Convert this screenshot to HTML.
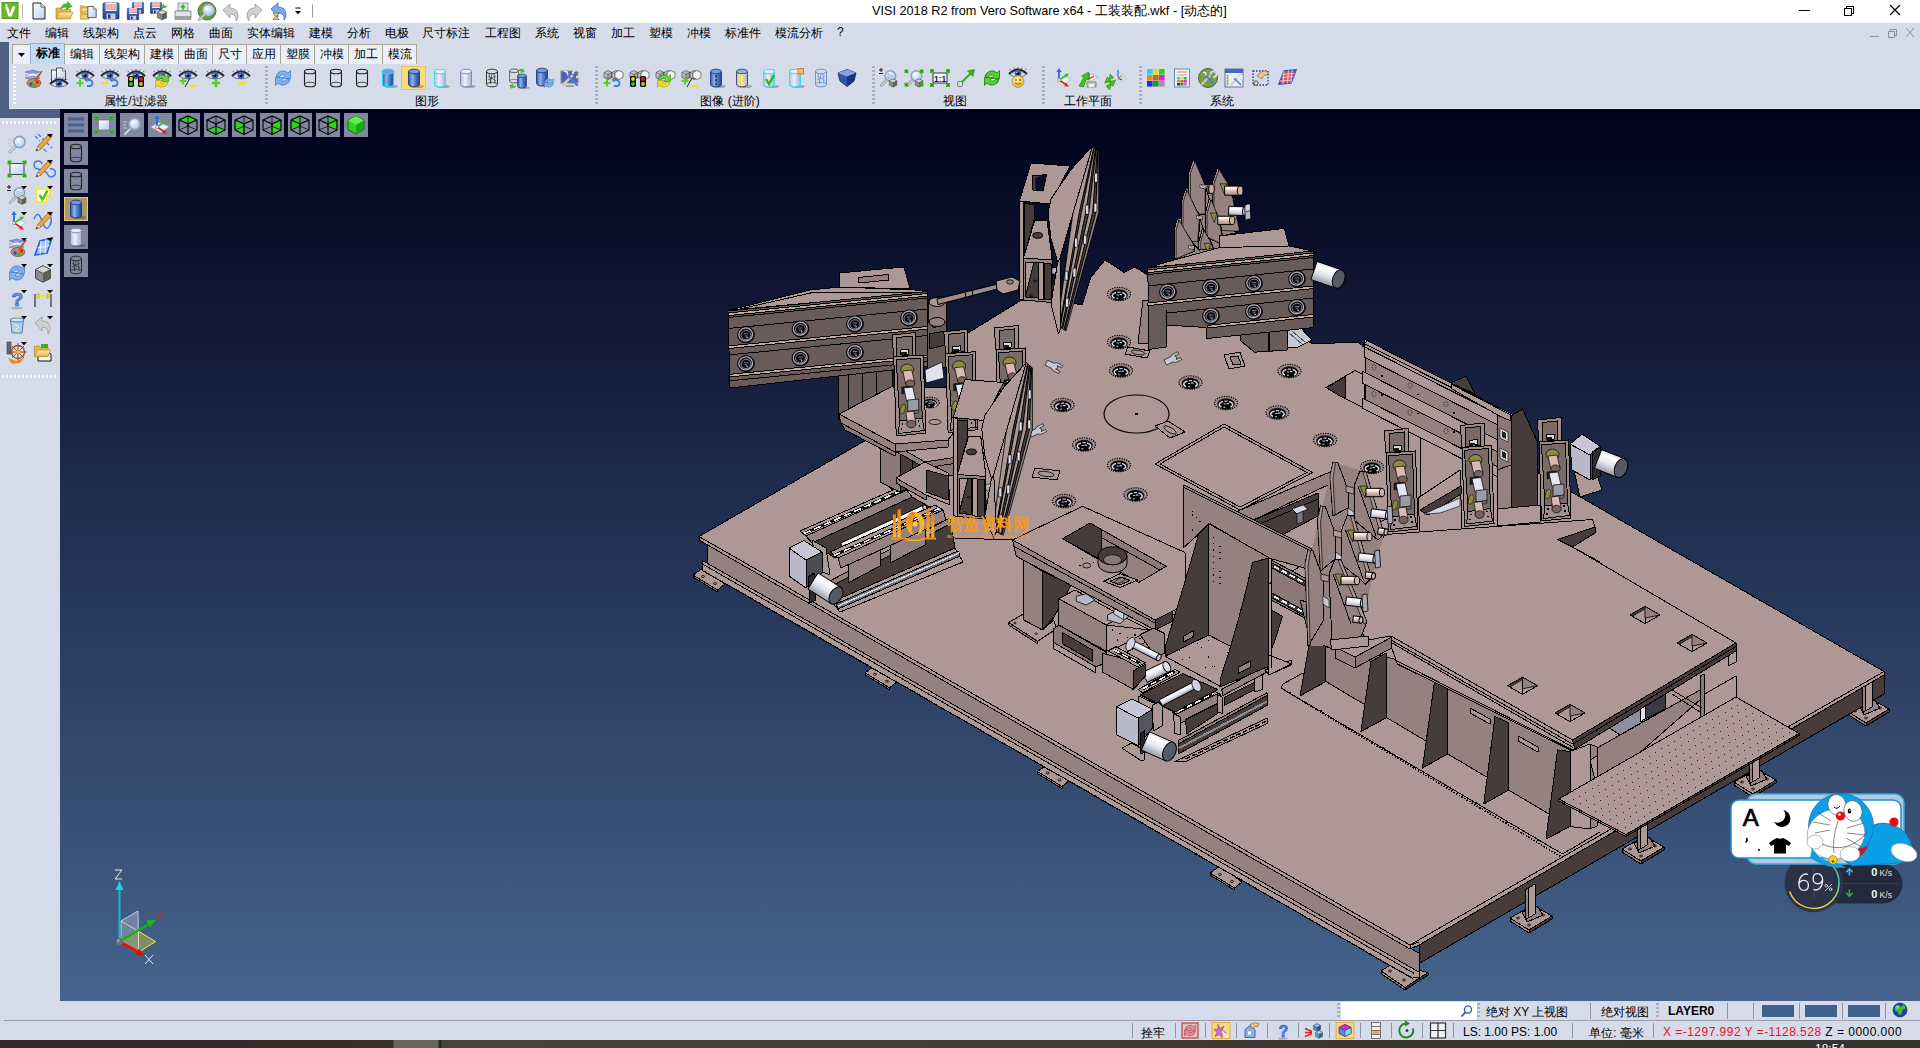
<!DOCTYPE html><html><head><meta charset="utf-8"><title>VISI</title><style>

*{box-sizing:border-box;margin:0;padding:0}
html,body{width:1920px;height:1048px;overflow:hidden;background:#d6dbe9;font-family:"Liberation Sans",sans-serif;font-size:12px;color:#000}
.abs{position:absolute}
#title{left:0;top:0;width:1920px;height:23px;background:#fff}
#ttext{left:872px;top:3px;font-size:12.7px;white-space:nowrap;color:#000}
#menu{left:0;top:23px;width:1920px;height:20px;background:#d6dbe9}
.mi{position:absolute;top:2px;font-size:12px;white-space:nowrap}
#lstrip{left:0;top:42px;width:9px;height:76px;background:#4d6082}
#lstrip2{left:0;top:109px;width:60px;height:9px;background:#4d6082}
.tab{position:absolute;top:44px;height:20px;background:#e9f0fb;border:1px solid #a9a58f;border-bottom:none;font-size:12px;text-align:center;line-height:18px;white-space:nowrap;overflow:hidden}
.tab.on{top:43px;height:21px;background:#c1dbf6;font-weight:bold;border-color:#9fb3cc}
#tbar{left:9px;top:64px;width:1911px;height:45px;background:#d6dbe9;border-bottom:1px solid #e3e9f8}
.glabel{position:absolute;top:93px;font-size:12px;white-space:nowrap;transform:translateX(-50%)}
.grip{position:absolute;width:3px;background-image:repeating-linear-gradient(to bottom,#f7f8fc 0 2px,transparent 2px 4px)}
.gripdk{position:absolute;width:3px;background-image:repeating-linear-gradient(to bottom,#a8aec2 0 2px,transparent 2px 4px)}
.hgrip{position:absolute;height:3px;background-image:repeating-linear-gradient(to right,#f7f8fc 0 2px,transparent 2px 4px)}
#side{left:0;top:118px;width:60px;height:902px;background:#d6dbe9}
#vp{left:60px;top:109px;width:1860px;height:892px;background:linear-gradient(to bottom,#01011b 0%,#46648d 100%);overflow:hidden}
.vb{position:absolute;width:24px;height:24px;background:#8287a0}
.vb.on{background:#a99a68;border:1px solid #e9c883}
#st1{left:0;top:1000px;width:1920px;height:21px;background:#d6dbe9}
#st2{left:0;top:1021px;width:1920px;height:19px;background:#d6dbe9}
#stline{left:4px;top:1020px;width:1916px;height:1px;background:#9a9ca6}
#bot{left:0;top:1040px;width:1920px;height:8px;background:linear-gradient(to right,#32272a 0,#3a2e2a 393px,#6b665d 394px,#6b665d 438px,#2a2a2a 439px,#2a2a2a 441px,#4a4436 442px,#463f33 900px,#3c3730 1300px,#37332e 1920px)}
.st{position:absolute;font-size:12px;white-space:nowrap}
.sep{position:absolute;width:1px;background:#8e93a3}
.ico{position:absolute;overflow:visible}

</style></head><body>
<div id="title" class="abs"></div>
<div id="ttext" class="abs">VISI 2018 R2 from Vero Software x64 - 工装装配.wkf - [动态的]</div>
<svg class="abs" style="left:1780px;top:0" width="140" height="23" viewBox="1780 0 140 23" shape-rendering="crispEdges"><path d="M1799 10.5h11" stroke="#000" fill="none"/><path d="M1844.5 8.5h7v7h-7zM1846.5 8.5v-2h7v7h-2" stroke="#000" fill="none"/><path d="M1890 5l10 10M1900 5l-10 10" stroke="#000" fill="none" stroke-width="1.2" shape-rendering="auto"/></svg>
<div id="menu" class="abs">
<span class="mi" style="left:7px">文件</span>
<span class="mi" style="left:45px">编辑</span>
<span class="mi" style="left:83px">线架构</span>
<span class="mi" style="left:133px">点云</span>
<span class="mi" style="left:171px">网格</span>
<span class="mi" style="left:209px">曲面</span>
<span class="mi" style="left:247px">实体编辑</span>
<span class="mi" style="left:309px">建模</span>
<span class="mi" style="left:347px">分析</span>
<span class="mi" style="left:385px">电极</span>
<span class="mi" style="left:422px">尺寸标注</span>
<span class="mi" style="left:485px">工程图</span>
<span class="mi" style="left:535px">系统</span>
<span class="mi" style="left:573px">视窗</span>
<span class="mi" style="left:611px">加工</span>
<span class="mi" style="left:649px">塑模</span>
<span class="mi" style="left:687px">冲模</span>
<span class="mi" style="left:725px">标准件</span>
<span class="mi" style="left:775px">模流分析</span>
<span class="mi" style="left:837px">?</span>
</div>
<svg class="abs" style="left:1860px;top:24px" width="60" height="18" viewBox="1860 24 60 18"><path d="M1870 36.5h9" stroke="#8c8f99" fill="none"/><path d="M1888.5 31.5h6v6h-6zM1890.5 31.5v-2h6v6h-2" stroke="#8c8f99" fill="none"/><path d="M1906 28l8 9M1914 28l-8 9" stroke="#8c8f99" fill="none"/></svg>
<div id="lstrip" class="abs"></div><div id="lstrip2" class="abs"></div>
<div class="tab" style="left:12px;width:19px"><svg width="17" height="18" viewBox="0 0 17 18"><path d="M5 8h7l-3.5 4z" fill="#000"/></svg></div>
<div class="tab on" style="left:30px;width:35px">标准</div>
<div class="tab" style="left:64px;width:36px">编辑</div>
<div class="tab" style="left:99px;width:46px">线架构</div>
<div class="tab" style="left:144px;width:35px">建模</div>
<div class="tab" style="left:178px;width:35px">曲面</div>
<div class="tab" style="left:212px;width:35px">尺寸</div>
<div class="tab" style="left:246px;width:35px">应用</div>
<div class="tab" style="left:280px;width:35px">塑膜</div>
<div class="tab" style="left:314px;width:35px">冲模</div>
<div class="tab" style="left:348px;width:35px">加工</div>
<div class="tab" style="left:382px;width:35px">模流</div>
<div id="tbar" class="abs"></div>
<div class="grip" style="left:13px;top:66px;height:40px"></div>
<div class="gripdk" style="left:265px;top:66px;height:40px"></div>
<div class="gripdk" style="left:595px;top:66px;height:40px"></div>
<div class="gripdk" style="left:872px;top:66px;height:40px"></div>
<div class="gripdk" style="left:1042px;top:66px;height:40px"></div>
<div class="gripdk" style="left:1139px;top:66px;height:40px"></div>
<div class="glabel" style="left:136px">属性/过滤器</div>
<div class="glabel" style="left:427px">图形</div>
<div class="glabel" style="left:730px">图像 (进阶)</div>
<div class="glabel" style="left:955px">视图</div>
<div class="glabel" style="left:1088px">工作平面</div>
<div class="glabel" style="left:1222px">系统</div>
<div id="side" class="abs"></div>
<div class="hgrip" style="left:2px;top:121px;width:56px"></div>
<div class="hgrip" style="left:2px;top:375px;width:56px"></div>
<div id="st1" class="abs"></div><div id="st2" class="abs"></div><div id="stline" class="abs"></div>
<div class="gripdk" style="left:1337px;top:1003px;height:16px"></div>
<div class="abs" style="left:1341px;top:1002px;width:136px;height:18px;background:#fff"></div>
<svg class="abs" style="left:1460px;top:1004px" width="14" height="14" viewBox="0 0 14 14"><circle cx="8" cy="5.5" r="3.6" fill="#eef3fb" stroke="#3c5a9a" stroke-width="1.3"/><path d="M5.5 8.2L1.5 12.5" stroke="#3c5a9a" stroke-width="1.8"/></svg>
<div class="gripdk" style="left:1477px;top:1003px;height:16px"></div>
<div class="st" style="left:1486px;top:1004px">绝对 XY 上视图</div>
<div class="sep" style="left:1590px;top:1003px;height:16px"></div>
<div class="st" style="left:1601px;top:1004px">绝对视图</div>
<div class="gripdk" style="left:1656px;top:1003px;height:16px"></div>
<div class="st" style="left:1668px;top:1004px;font-weight:bold">LAYER0</div>
<div class="sep" style="left:1727px;top:1003px;height:16px"></div>
<div class="sep" style="left:1753px;top:1003px;height:16px"></div>
<div class="abs" style="left:1762px;top:1005px;width:32px;height:12px;background:#41618d"></div>
<div class="abs" style="left:1805px;top:1005px;width:32px;height:12px;background:#41618d"></div>
<div class="abs" style="left:1848px;top:1005px;width:32px;height:12px;background:#41618d"></div>
<div class="sep" style="left:1799px;top:1003px;height:16px"></div><div class="sep" style="left:1842px;top:1003px;height:16px"></div><div class="sep" style="left:1885px;top:1003px;height:16px"></div>
<div class="sep" style="left:1132px;top:1023px;height:15px"></div>
<div class="sep" style="left:1175px;top:1023px;height:15px"></div>
<div class="sep" style="left:1205px;top:1023px;height:15px"></div>
<div class="sep" style="left:1236px;top:1023px;height:15px"></div>
<div class="sep" style="left:1267px;top:1023px;height:15px"></div>
<div class="sep" style="left:1298px;top:1023px;height:15px"></div>
<div class="sep" style="left:1329px;top:1023px;height:15px"></div>
<div class="sep" style="left:1360px;top:1023px;height:15px"></div>
<div class="sep" style="left:1391px;top:1023px;height:15px"></div>
<div class="sep" style="left:1422px;top:1023px;height:15px"></div>
<div class="sep" style="left:1453px;top:1023px;height:15px"></div>
<div class="sep" style="left:1572px;top:1023px;height:15px"></div>
<div class="sep" style="left:1653px;top:1023px;height:15px"></div>
<div class="st" style="left:1141px;top:1025px">拴牢</div>
<div class="st" style="left:1463px;top:1025px">LS: 1.00 PS: 1.00</div>
<div class="st" style="left:1589px;top:1025px">单位: 毫米</div>
<div class="st" style="left:1663px;top:1025px;letter-spacing:.47px"><span style="color:#e8141c">X =-1297.992 Y =-1128.528</span> Z = 0000.000</div>
<div id="bot" class="abs"></div>
<div class="abs" style="left:1815px;top:1043px;width:40px;height:5px;overflow:hidden;color:#fff;font-size:12px;line-height:12px">18:54</div>

<div id="vp" class="abs">
<svg class="abs" style="left:0;top:0" width="1860" height="891" viewBox="60 109 1860 891" shape-rendering="crispEdges" stroke-linejoin="round">
<polygon points="703,568 725,584 717.5,590 693,575" fill="#ad9895" stroke="#000" stroke-width="1" />
<polygon points="693,575 717.5,590 717.5,592 693,577" fill="#958180" stroke="#000" stroke-width="1" />
<ellipse cx="703" cy="576.5" rx="1.5" ry="1" fill="none" stroke="#000" stroke-width="0.8" />
<ellipse cx="715" cy="583.5" rx="1.5" ry="1" fill="none" stroke="#000" stroke-width="0.8" />
<polygon points="875,665.75 897,681.75 889.5,687.75 865,672.75" fill="#ad9895" stroke="#000" stroke-width="1" />
<polygon points="865,672.75 889.5,687.75 889.5,689.75 865,674.75" fill="#958180" stroke="#000" stroke-width="1" />
<ellipse cx="875" cy="674.25" rx="1.5" ry="1" fill="none" stroke="#000" stroke-width="0.8" />
<ellipse cx="887" cy="681.25" rx="1.5" ry="1" fill="none" stroke="#000" stroke-width="0.8" />
<polygon points="1047.5,764.5 1069.5,780.5 1062,786.5 1037.5,771.5" fill="#ad9895" stroke="#000" stroke-width="1" />
<polygon points="1037.5,771.5 1062,786.5 1062,788.5 1037.5,773.5" fill="#958180" stroke="#000" stroke-width="1" />
<ellipse cx="1047.5" cy="773" rx="1.5" ry="1" fill="none" stroke="#000" stroke-width="0.8" />
<ellipse cx="1059.5" cy="780" rx="1.5" ry="1" fill="none" stroke="#000" stroke-width="0.8" />
<polygon points="1220,866 1242,882 1234.5,888 1210,873" fill="#ad9895" stroke="#000" stroke-width="1" />
<polygon points="1210,873 1234.5,888 1234.5,890 1210,875" fill="#958180" stroke="#000" stroke-width="1" />
<ellipse cx="1220" cy="874.5" rx="1.5" ry="1" fill="none" stroke="#000" stroke-width="0.8" />
<ellipse cx="1232" cy="881.5" rx="1.5" ry="1" fill="none" stroke="#000" stroke-width="0.8" />
<polygon points="1381,971 1392,964 1428,972.5 1405,987.5" fill="#ad9895" stroke="#000" stroke-width="1" />
<polygon points="1381,971 1405,987.5 1405,990 1381,973.5" fill="#958180" stroke="#000" stroke-width="1" />
<polygon points="1405,987.5 1428,972.5 1428,975 1405,990" fill="#473b3b" stroke="#000" stroke-width="1" />
<ellipse cx="1390" cy="971" rx="1.5" ry="1" fill="none" stroke="#000" stroke-width="0.8" />
<ellipse cx="1404" cy="980" rx="1.5" ry="1" fill="none" stroke="#000" stroke-width="0.8" />
<ellipse cx="1418" cy="973" rx="1.5" ry="1" fill="none" stroke="#000" stroke-width="0.8" />
<polygon points="1510,918 1533,905 1552,916 1529,930" fill="#ad9895" stroke="#000" stroke-width="1" />
<polygon points="1510,918 1529,930 1529,933 1510,921" fill="#958180" stroke="#000" stroke-width="1" />
<polygon points="1529,930 1552,916 1552,919 1529,933" fill="#473b3b" stroke="#000" stroke-width="1" />
<polygon points="1522,912 1537,906 1543,915 1527,922" fill="#958180" stroke="#000" stroke-width="1" />
<ellipse cx="1518" cy="918" rx="1.5" ry="1" fill="none" stroke="#000" stroke-width="0.8" />
<ellipse cx="1543" cy="915" rx="1.5" ry="1" fill="none" stroke="#000" stroke-width="0.8" />
<ellipse cx="1529" cy="925" rx="1.5" ry="1" fill="none" stroke="#000" stroke-width="0.8" />
<polygon points="1622,849 1645,836 1664,847 1641,861" fill="#ad9895" stroke="#000" stroke-width="1" />
<polygon points="1622,849 1641,861 1641,864 1622,852" fill="#958180" stroke="#000" stroke-width="1" />
<polygon points="1641,861 1664,847 1664,850 1641,864" fill="#473b3b" stroke="#000" stroke-width="1" />
<polygon points="1634,843 1649,837 1655,846 1639,853" fill="#958180" stroke="#000" stroke-width="1" />
<ellipse cx="1630" cy="849" rx="1.5" ry="1" fill="none" stroke="#000" stroke-width="0.8" />
<ellipse cx="1655" cy="846" rx="1.5" ry="1" fill="none" stroke="#000" stroke-width="0.8" />
<ellipse cx="1641" cy="856" rx="1.5" ry="1" fill="none" stroke="#000" stroke-width="0.8" />
<polygon points="1734,782 1757,769 1776,780 1753,794" fill="#ad9895" stroke="#000" stroke-width="1" />
<polygon points="1734,782 1753,794 1753,797 1734,785" fill="#958180" stroke="#000" stroke-width="1" />
<polygon points="1753,794 1776,780 1776,783 1753,797" fill="#473b3b" stroke="#000" stroke-width="1" />
<polygon points="1746,776 1761,770 1767,779 1751,786" fill="#958180" stroke="#000" stroke-width="1" />
<ellipse cx="1742" cy="782" rx="1.5" ry="1" fill="none" stroke="#000" stroke-width="0.8" />
<ellipse cx="1767" cy="779" rx="1.5" ry="1" fill="none" stroke="#000" stroke-width="0.8" />
<ellipse cx="1753" cy="789" rx="1.5" ry="1" fill="none" stroke="#000" stroke-width="0.8" />
<polygon points="1847,711 1870,698 1889,709 1866,723" fill="#ad9895" stroke="#000" stroke-width="1" />
<polygon points="1847,711 1866,723 1866,726 1847,714" fill="#958180" stroke="#000" stroke-width="1" />
<polygon points="1866,723 1889,709 1889,712 1866,726" fill="#473b3b" stroke="#000" stroke-width="1" />
<polygon points="1859,705 1874,699 1880,708 1864,715" fill="#958180" stroke="#000" stroke-width="1" />
<ellipse cx="1855" cy="711" rx="1.5" ry="1" fill="none" stroke="#000" stroke-width="0.8" />
<ellipse cx="1880" cy="708" rx="1.5" ry="1" fill="none" stroke="#000" stroke-width="0.8" />
<ellipse cx="1866" cy="718" rx="1.5" ry="1" fill="none" stroke="#000" stroke-width="0.8" />
<polygon points="1419,944 1884,675 1884,694 1419,963.5" fill="#473b3b" stroke="#000" stroke-width="1" />
<polygon points="1525,890 1535,884 1535,914 1525,920" fill="#ad9895" stroke="#000" stroke-width="1" />
<polygon points="1525,890 1528,888 1528,918 1525,920" fill="#958180" stroke="#000" stroke-width="1" />
<polygon points="1637,821 1647,815 1647,845 1637,851" fill="#ad9895" stroke="#000" stroke-width="1" />
<polygon points="1637,821 1640,819 1640,849 1637,851" fill="#958180" stroke="#000" stroke-width="1" />
<polygon points="1749,754 1759,748 1759,778 1749,784" fill="#ad9895" stroke="#000" stroke-width="1" />
<polygon points="1749,754 1752,752 1752,782 1749,784" fill="#958180" stroke="#000" stroke-width="1" />
<polygon points="1862,683 1872,677 1872,707 1862,713" fill="#ad9895" stroke="#000" stroke-width="1" />
<polygon points="1862,683 1865,681 1865,711 1862,713" fill="#958180" stroke="#000" stroke-width="1" />
<polygon points="702,560.223 1419,972.14 1419,977.14 1412,978.119 702,570.223" fill="#ad9895" stroke="#000" stroke-width="1" />
<polyline points="702,563.723 1414,973.267" fill="none" stroke="#000" stroke-width="1" />
<polyline points="702,570.223 1412,978.119" fill="none" stroke="#000" stroke-width="1.4" stroke-dasharray="1.2 1.4"/>
<polygon points="707,544.096 1419,953.14 1419,972.14 707,563.096" fill="#958180" stroke="#000" stroke-width="1" />
<polyline points="1419,942.5 1419,971" fill="none" stroke="#000" stroke-width="1" />
<polygon points="699,536.5 1410,945 1884,671.5 1173,263" fill="#ad9895" stroke="#000" stroke-width="1" />
<polygon points="699,536.5 1410,945 1419,942 1419,945 1410,949 699,540" fill="#ad9895" stroke="#000" stroke-width="1" />
<polygon points="1410,945 1884,671.5 1884,675 1419,945 1410,949" fill="#ad9895" stroke="#000" stroke-width="1" />
<polyline points="1410,945.5 1419,942" fill="none" stroke="#000" stroke-width="1" />
<polygon points="968,333 1020,301 1046,298 1082,305 1091,277 1105,260 1119,269 1124,272.5 1135,267 1147.5,275 1160,283 1314,344 1357,342 1420,380 1420,500 1312,560 1240,600 1150,620 1012,540 955,538 880,480 905,440 940,400" fill="#ad9895" stroke="#000" stroke-width="1" />
<ellipse cx="1136.5" cy="414" rx="32.5" ry="19" fill="none" stroke="#000" stroke-width="1.2" shape-rendering="auto"/>
<polygon points="1155,426 1168,421 1185,432 1170,438" fill="#ad9895" stroke="#000" stroke-width="1" />
<ellipse cx="1170" cy="430" rx="7" ry="2.5" fill="none" stroke="#000" stroke-width="0.8" transform="rotate(30 1170 430)" shape-rendering="auto"/>
<ellipse cx="1136.5" cy="414" rx="1" ry="1" fill="#000" stroke="#000" stroke-width="1" />
<polygon points="1224,424 1312.5,472.5 1240,510 1155,464" fill="#ad9895" stroke="#000" stroke-width="1" />
<polyline points="1224,427 1307,472.5 1240,507 1160,464 1224,427" fill="none" stroke="#000" stroke-width="1" />
<polygon points="1326,387.5 1355,370.5 1364,375 1364,408 1340,396" fill="#ad9895" stroke="#000" stroke-width="1" />
<polygon points="1326,387.5 1345.6,376.8 1345.6,398.5 1340,396" fill="#473b3b" stroke="#000" stroke-width="1" />
<polygon points="1224,355 1240,352 1245,366 1229,369" fill="#ad9895" stroke="#000" stroke-width="1" />
<polygon points="1230,357 1238,356 1241,364 1233,365" fill="#958180" stroke="#000" stroke-width="1" />
<polygon points="1035,468 1060,471 1057,480 1032,477" fill="#ad9895" stroke="#000" stroke-width="1" />
<ellipse cx="1046" cy="474" rx="8" ry="2.5" fill="none" stroke="#000" stroke-width="0.8" transform="rotate(8 1046 474)" shape-rendering="auto"/>
<polygon points="1277,298 1296,304 1293,311 1274,305" fill="#ad9895" stroke="#000" stroke-width="1" />
<polygon points="1128,347 1150,351 1147,358 1125,354" fill="#ad9895" stroke="#000" stroke-width="1" />
<ellipse cx="1138" cy="352.5" rx="7" ry="2" fill="none" stroke="#000" stroke-width="0.8" transform="rotate(10 1138 352.5)" />
<g transform="translate(1054 365) rotate(25) scale(.8)" shape-rendering="auto"><path d="M-10 -2h9l3-2h8v3h-6l2 2.5l-2 2.5h6v3h-8l-3-2h-9z" fill="#c8c8d6" stroke="#000" stroke-width=".7"/></g>
<g transform="translate(1172 358) rotate(-25) scale(.8)" shape-rendering="auto"><path d="M-10 -2h9l3-2h8v3h-6l2 2.5l-2 2.5h6v3h-8l-3-2h-9z" fill="#c8c8d6" stroke="#000" stroke-width=".7"/></g>
<g transform="translate(1037 430) rotate(-25) scale(.8)" shape-rendering="auto"><path d="M-10 -2h9l3-2h8v3h-6l2 2.5l-2 2.5h6v3h-8l-3-2h-9z" fill="#c8c8d6" stroke="#000" stroke-width=".7"/></g>
<g shape-rendering="auto">
<ellipse cx="1119" cy="294" rx="11.5" ry="6.6" fill="none" stroke="#000" stroke-width="1.3" stroke-dasharray="1.3 1.1"/>
<ellipse cx="1119" cy="293.7" rx="9.5" ry="5.6" fill="#8f7c7a" stroke="none" stroke-width="0" />
<ellipse cx="1119" cy="295" rx="8.4" ry="5.2" fill="#050505" stroke="#000" stroke-width="0.6" />
<path d="M1116 292.4a6 3.3 0 0 0 -1.5 5.6M1122 292.4a6 3.3 0 0 1 1.5 5.6" fill="none" stroke="#d4d4e6" stroke-width="1.5"/>
<path d="M1117.4 292.1h3.2M1116.6 295h2.2M1119.6 294.6h2.4M1116.4 298.2h2" stroke="#c9c9da" stroke-width="1.1"/>
</g>
<g shape-rendering="auto">
<ellipse cx="1119" cy="342" rx="11.5" ry="6.6" fill="none" stroke="#000" stroke-width="1.3" stroke-dasharray="1.3 1.1"/>
<ellipse cx="1119" cy="341.7" rx="9.5" ry="5.6" fill="#8f7c7a" stroke="none" stroke-width="0" />
<ellipse cx="1119" cy="343" rx="8.4" ry="5.2" fill="#050505" stroke="#000" stroke-width="0.6" />
<path d="M1116 340.4a6 3.3 0 0 0 -1.5 5.6M1122 340.4a6 3.3 0 0 1 1.5 5.6" fill="none" stroke="#d4d4e6" stroke-width="1.5"/>
<path d="M1117.4 340.1h3.2M1116.6 343h2.2M1119.6 342.6h2.4M1116.4 346.2h2" stroke="#c9c9da" stroke-width="1.1"/>
</g>
<g shape-rendering="auto">
<ellipse cx="1121" cy="370.5" rx="11.5" ry="6.6" fill="none" stroke="#000" stroke-width="1.3" stroke-dasharray="1.3 1.1"/>
<ellipse cx="1121" cy="370.2" rx="9.5" ry="5.6" fill="#8f7c7a" stroke="none" stroke-width="0" />
<ellipse cx="1121" cy="371.5" rx="8.4" ry="5.2" fill="#050505" stroke="#000" stroke-width="0.6" />
<path d="M1118 368.9a6 3.3 0 0 0 -1.5 5.6M1124 368.9a6 3.3 0 0 1 1.5 5.6" fill="none" stroke="#d4d4e6" stroke-width="1.5"/>
<path d="M1119.4 368.6h3.2M1118.6 371.5h2.2M1121.6 371.1h2.4M1118.4 374.7h2" stroke="#c9c9da" stroke-width="1.1"/>
</g>
<g shape-rendering="auto">
<ellipse cx="1190.5" cy="382.5" rx="11.5" ry="6.6" fill="none" stroke="#000" stroke-width="1.3" stroke-dasharray="1.3 1.1"/>
<ellipse cx="1190.5" cy="382.2" rx="9.5" ry="5.6" fill="#8f7c7a" stroke="none" stroke-width="0" />
<ellipse cx="1190.5" cy="383.5" rx="8.4" ry="5.2" fill="#050505" stroke="#000" stroke-width="0.6" />
<path d="M1187.5 380.9a6 3.3 0 0 0 -1.5 5.6M1193.5 380.9a6 3.3 0 0 1 1.5 5.6" fill="none" stroke="#d4d4e6" stroke-width="1.5"/>
<path d="M1188.9 380.6h3.2M1188.1 383.5h2.2M1191.1 383.1h2.4M1187.9 386.7h2" stroke="#c9c9da" stroke-width="1.1"/>
</g>
<g shape-rendering="auto">
<ellipse cx="1226" cy="403" rx="11.5" ry="6.6" fill="none" stroke="#000" stroke-width="1.3" stroke-dasharray="1.3 1.1"/>
<ellipse cx="1226" cy="402.7" rx="9.5" ry="5.6" fill="#8f7c7a" stroke="none" stroke-width="0" />
<ellipse cx="1226" cy="404" rx="8.4" ry="5.2" fill="#050505" stroke="#000" stroke-width="0.6" />
<path d="M1223 401.4a6 3.3 0 0 0 -1.5 5.6M1229 401.4a6 3.3 0 0 1 1.5 5.6" fill="none" stroke="#d4d4e6" stroke-width="1.5"/>
<path d="M1224.4 401.1h3.2M1223.6 404h2.2M1226.6 403.6h2.4M1223.4 407.2h2" stroke="#c9c9da" stroke-width="1.1"/>
</g>
<g shape-rendering="auto">
<ellipse cx="1277.5" cy="412.5" rx="11.5" ry="6.6" fill="none" stroke="#000" stroke-width="1.3" stroke-dasharray="1.3 1.1"/>
<ellipse cx="1277.5" cy="412.2" rx="9.5" ry="5.6" fill="#8f7c7a" stroke="none" stroke-width="0" />
<ellipse cx="1277.5" cy="413.5" rx="8.4" ry="5.2" fill="#050505" stroke="#000" stroke-width="0.6" />
<path d="M1274.5 410.9a6 3.3 0 0 0 -1.5 5.6M1280.5 410.9a6 3.3 0 0 1 1.5 5.6" fill="none" stroke="#d4d4e6" stroke-width="1.5"/>
<path d="M1275.9 410.6h3.2M1275.1 413.5h2.2M1278.1 413.1h2.4M1274.9 416.7h2" stroke="#c9c9da" stroke-width="1.1"/>
</g>
<g shape-rendering="auto">
<ellipse cx="1289.5" cy="371" rx="11.5" ry="6.6" fill="none" stroke="#000" stroke-width="1.3" stroke-dasharray="1.3 1.1"/>
<ellipse cx="1289.5" cy="370.7" rx="9.5" ry="5.6" fill="#8f7c7a" stroke="none" stroke-width="0" />
<ellipse cx="1289.5" cy="372" rx="8.4" ry="5.2" fill="#050505" stroke="#000" stroke-width="0.6" />
<path d="M1286.5 369.4a6 3.3 0 0 0 -1.5 5.6M1292.5 369.4a6 3.3 0 0 1 1.5 5.6" fill="none" stroke="#d4d4e6" stroke-width="1.5"/>
<path d="M1287.9 369.1h3.2M1287.1 372h2.2M1290.1 371.6h2.4M1286.9 375.2h2" stroke="#c9c9da" stroke-width="1.1"/>
</g>
<g shape-rendering="auto">
<ellipse cx="1325" cy="440" rx="11.5" ry="6.6" fill="none" stroke="#000" stroke-width="1.3" stroke-dasharray="1.3 1.1"/>
<ellipse cx="1325" cy="439.7" rx="9.5" ry="5.6" fill="#8f7c7a" stroke="none" stroke-width="0" />
<ellipse cx="1325" cy="441" rx="8.4" ry="5.2" fill="#050505" stroke="#000" stroke-width="0.6" />
<path d="M1322 438.4a6 3.3 0 0 0 -1.5 5.6M1328 438.4a6 3.3 0 0 1 1.5 5.6" fill="none" stroke="#d4d4e6" stroke-width="1.5"/>
<path d="M1323.4 438.1h3.2M1322.6 441h2.2M1325.6 440.6h2.4M1322.4 444.2h2" stroke="#c9c9da" stroke-width="1.1"/>
</g>
<g shape-rendering="auto">
<ellipse cx="1372" cy="467" rx="11.5" ry="6.6" fill="none" stroke="#000" stroke-width="1.3" stroke-dasharray="1.3 1.1"/>
<ellipse cx="1372" cy="466.7" rx="9.5" ry="5.6" fill="#8f7c7a" stroke="none" stroke-width="0" />
<ellipse cx="1372" cy="468" rx="8.4" ry="5.2" fill="#050505" stroke="#000" stroke-width="0.6" />
<path d="M1369 465.4a6 3.3 0 0 0 -1.5 5.6M1375 465.4a6 3.3 0 0 1 1.5 5.6" fill="none" stroke="#d4d4e6" stroke-width="1.5"/>
<path d="M1370.4 465.1h3.2M1369.6 468h2.2M1372.6 467.6h2.4M1369.4 471.2h2" stroke="#c9c9da" stroke-width="1.1"/>
</g>
<g shape-rendering="auto">
<ellipse cx="1062.5" cy="405" rx="11.5" ry="6.6" fill="none" stroke="#000" stroke-width="1.3" stroke-dasharray="1.3 1.1"/>
<ellipse cx="1062.5" cy="404.7" rx="9.5" ry="5.6" fill="#8f7c7a" stroke="none" stroke-width="0" />
<ellipse cx="1062.5" cy="406" rx="8.4" ry="5.2" fill="#050505" stroke="#000" stroke-width="0.6" />
<path d="M1059.5 403.4a6 3.3 0 0 0 -1.5 5.6M1065.5 403.4a6 3.3 0 0 1 1.5 5.6" fill="none" stroke="#d4d4e6" stroke-width="1.5"/>
<path d="M1060.9 403.1h3.2M1060.1 406h2.2M1063.1 405.6h2.4M1059.9 409.2h2" stroke="#c9c9da" stroke-width="1.1"/>
</g>
<g shape-rendering="auto">
<ellipse cx="1084" cy="444.5" rx="11.5" ry="6.6" fill="none" stroke="#000" stroke-width="1.3" stroke-dasharray="1.3 1.1"/>
<ellipse cx="1084" cy="444.2" rx="9.5" ry="5.6" fill="#8f7c7a" stroke="none" stroke-width="0" />
<ellipse cx="1084" cy="445.5" rx="8.4" ry="5.2" fill="#050505" stroke="#000" stroke-width="0.6" />
<path d="M1081 442.9a6 3.3 0 0 0 -1.5 5.6M1087 442.9a6 3.3 0 0 1 1.5 5.6" fill="none" stroke="#d4d4e6" stroke-width="1.5"/>
<path d="M1082.4 442.6h3.2M1081.6 445.5h2.2M1084.6 445.1h2.4M1081.4 448.7h2" stroke="#c9c9da" stroke-width="1.1"/>
</g>
<g shape-rendering="auto">
<ellipse cx="1119" cy="465" rx="11.5" ry="6.6" fill="none" stroke="#000" stroke-width="1.3" stroke-dasharray="1.3 1.1"/>
<ellipse cx="1119" cy="464.7" rx="9.5" ry="5.6" fill="#8f7c7a" stroke="none" stroke-width="0" />
<ellipse cx="1119" cy="466" rx="8.4" ry="5.2" fill="#050505" stroke="#000" stroke-width="0.6" />
<path d="M1116 463.4a6 3.3 0 0 0 -1.5 5.6M1122 463.4a6 3.3 0 0 1 1.5 5.6" fill="none" stroke="#d4d4e6" stroke-width="1.5"/>
<path d="M1117.4 463.1h3.2M1116.6 466h2.2M1119.6 465.6h2.4M1116.4 469.2h2" stroke="#c9c9da" stroke-width="1.1"/>
</g>
<g shape-rendering="auto">
<ellipse cx="1135.5" cy="494.5" rx="11.5" ry="6.6" fill="none" stroke="#000" stroke-width="1.3" stroke-dasharray="1.3 1.1"/>
<ellipse cx="1135.5" cy="494.2" rx="9.5" ry="5.6" fill="#8f7c7a" stroke="none" stroke-width="0" />
<ellipse cx="1135.5" cy="495.5" rx="8.4" ry="5.2" fill="#050505" stroke="#000" stroke-width="0.6" />
<path d="M1132.5 492.9a6 3.3 0 0 0 -1.5 5.6M1138.5 492.9a6 3.3 0 0 1 1.5 5.6" fill="none" stroke="#d4d4e6" stroke-width="1.5"/>
<path d="M1133.9 492.6h3.2M1133.1 495.5h2.2M1136.1 495.1h2.4M1132.9 498.7h2" stroke="#c9c9da" stroke-width="1.1"/>
</g>
<g shape-rendering="auto">
<ellipse cx="1064" cy="501" rx="11.5" ry="6.6" fill="none" stroke="#000" stroke-width="1.3" stroke-dasharray="1.3 1.1"/>
<ellipse cx="1064" cy="500.7" rx="9.5" ry="5.6" fill="#8f7c7a" stroke="none" stroke-width="0" />
<ellipse cx="1064" cy="502" rx="8.4" ry="5.2" fill="#050505" stroke="#000" stroke-width="0.6" />
<path d="M1061 499.4a6 3.3 0 0 0 -1.5 5.6M1067 499.4a6 3.3 0 0 1 1.5 5.6" fill="none" stroke="#d4d4e6" stroke-width="1.5"/>
<path d="M1062.4 499.1h3.2M1061.6 502h2.2M1064.6 501.6h2.4M1061.4 505.2h2" stroke="#c9c9da" stroke-width="1.1"/>
</g>
<g shape-rendering="auto">
<ellipse cx="930" cy="402.5" rx="11.5" ry="6.6" fill="none" stroke="#000" stroke-width="1.3" stroke-dasharray="1.3 1.1"/>
<ellipse cx="930" cy="402.2" rx="9.5" ry="5.6" fill="#8f7c7a" stroke="none" stroke-width="0" />
<ellipse cx="930" cy="403.5" rx="8.4" ry="5.2" fill="#050505" stroke="#000" stroke-width="0.6" />
<path d="M927 400.9a6 3.3 0 0 0 -1.5 5.6M933 400.9a6 3.3 0 0 1 1.5 5.6" fill="none" stroke="#d4d4e6" stroke-width="1.5"/>
<path d="M928.4 400.6h3.2M927.6 403.5h2.2M930.6 403.1h2.4M927.4 406.7h2" stroke="#c9c9da" stroke-width="1.1"/>
</g>
<polygon points="1188.62,188.347 1205.79,185.485 1212.08,184.341 1233.26,198.077 1240.13,231.273 1219.52,235.852 1219.52,248.443 1174.31,258.745 1174.31,230.128 1177.17,218.681 1181.18,218.681 1181.18,202.656 1185.18,189.492" fill="#958180" stroke="none" stroke-width="0" />
<polyline points="1205.79,187.775 1213.8,214.103" fill="none" stroke="#000" stroke-width="1" />
<polyline points="1198.92,216.392 1208.08,241.575" fill="none" stroke="#000" stroke-width="1" />
<polyline points="1194.34,245.009 1200.06,250.733" fill="none" stroke="#000" stroke-width="1" />
<polyline points="1224.1,195.788 1233.26,230.128" fill="none" stroke="#000" stroke-width="1" />
<polyline points="1217.23,223.26 1224.1,245.009" fill="none" stroke="#000" stroke-width="1" />
<polygon points="1217.23,167.743 1212.08,184.341 1212.08,230.128 1240.13,231.273 1233.26,198.077 1227.54,182.051" fill="#ad9895" stroke="#000" stroke-width="1" />
<polygon points="1219.03,169.243 1213.88,184.341 1213.88,230.128 1239.53,231.273 1232.66,198.077 1226.94,182.051" fill="#958180" stroke="#000" stroke-width="0.7" />
<polygon points="1193.2,159.73 1188.62,172.894 1188.62,214.103 1205.79,214.103 1205.79,185.485" fill="#ad9895" stroke="#000" stroke-width="1" />
<polygon points="1195,161.23 1190.42,172.894 1190.42,214.103 1205.19,214.103 1205.19,185.485" fill="#958180" stroke="#000" stroke-width="0.7" />
<linearGradient id="g203" gradientUnits="userSpaceOnUse" x1="1208.08" y1="193.519" x2="1208.08" y2="184.319"><stop offset="0" stop-color="#a88"/><stop offset=".45" stop-color="#d8b8b0"/><stop offset=".8" stop-color="#fff"/><stop offset="1" stop-color="#d8b8b0"/></linearGradient>
<polygon points="1208.08,193.519 1211.51,193.519 1211.51,184.319 1208.08,184.319" fill="url(#g203)" stroke="#000" stroke-width="1" shape-rendering="auto"/>
<ellipse cx="1211.51" cy="188.919" rx="2.852" ry="4.6" fill="#c9a9a2" stroke="#000" stroke-width="1" shape-rendering="auto"/>
<polygon points="1209.22,198.077 1205.22,214.103 1205.22,236.996 1224.1,245.009 1219.52,218.681" fill="#ad9895" stroke="#000" stroke-width="1" />
<polygon points="1211.02,199.577 1207.02,214.103 1207.02,236.996 1223.5,245.009 1218.92,218.681" fill="#958180" stroke="#000" stroke-width="0.7" />
<polygon points="1185.18,188.919 1181.18,202.656 1181.18,241.575 1198.35,241.575 1200.06,216.392" fill="#ad9895" stroke="#000" stroke-width="1" />
<polygon points="1186.98,190.419 1182.98,202.656 1182.98,241.575 1197.75,241.575 1199.46,216.392" fill="#958180" stroke="#000" stroke-width="0.7" />
<polygon points="1202.35,228.984 1198.92,241.575 1198.92,249.588 1213.8,248.443 1210.37,240.43" fill="#ad9895" stroke="#000" stroke-width="1" />
<polygon points="1204.15,230.484 1200.72,241.575 1200.72,249.588 1213.2,248.443 1209.77,240.43" fill="#958180" stroke="#000" stroke-width="0.7" />
<polygon points="1177.17,218.681 1174.31,230.128 1174.31,258.745 1194.34,251.305 1194.34,245.009" fill="#ad9895" stroke="#000" stroke-width="1" />
<polygon points="1178.97,220.181 1176.11,230.128 1176.11,258.745 1193.74,251.305 1193.74,245.009" fill="#958180" stroke="#000" stroke-width="0.7" />
<polygon points="1200.06,184.341 1205.79,185.485 1205.79,188.919 1200.06,187.775" fill="#d9d9e4" stroke="#000" stroke-width="0.6" />
<polyline points="1201.21,185.256 1204.64,187.775" fill="none" stroke="#222" stroke-width="0.7" />
<polygon points="1196.63,215.247 1202.35,216.392 1202.35,219.826 1196.63,218.681" fill="#d9d9e4" stroke="#000" stroke-width="0.6" />
<polyline points="1197.77,216.163 1201.21,218.681" fill="none" stroke="#222" stroke-width="0.7" />
<polygon points="1188.62,245.009 1194.34,246.154 1194.34,249.588 1188.62,248.443" fill="#d9d9e4" stroke="#000" stroke-width="0.6" />
<polyline points="1189.76,245.925 1193.2,248.443" fill="none" stroke="#222" stroke-width="0.7" />
<polygon points="1220.1,183.768 1226.74,183.768 1224.1,193.498" fill="#8b8a42" stroke="#000" stroke-width="0.6" />
<polygon points="1210.37,212.958 1217.01,212.958 1214.37,222.688" fill="#8b8a42" stroke="#000" stroke-width="0.6" />
<polygon points="1204.07,243.292 1210.71,243.292 1208.08,253.022" fill="#8b8a42" stroke="#000" stroke-width="0.6" />
<linearGradient id="g223" gradientUnits="userSpaceOnUse" x1="1224.67" y1="195.236" x2="1224.67" y2="186.036"><stop offset="0" stop-color="#a88"/><stop offset=".45" stop-color="#d8b8b0"/><stop offset=".8" stop-color="#fff"/><stop offset="1" stop-color="#d8b8b0"/></linearGradient>
<polygon points="1224.67,195.236 1240.13,195.236 1240.13,186.036 1224.67,186.036" fill="url(#g223)" stroke="#000" stroke-width="1" shape-rendering="auto"/>
<ellipse cx="1240.13" cy="190.636" rx="2.852" ry="4.6" fill="#cdb0a8" stroke="#000" stroke-width="1" shape-rendering="auto"/>
<linearGradient id="g226" gradientUnits="userSpaceOnUse" x1="1217.81" y1="224.598" x2="1217.81" y2="216.198"><stop offset="0" stop-color="#a88"/><stop offset=".45" stop-color="#d8b8b0"/><stop offset=".8" stop-color="#fff"/><stop offset="1" stop-color="#d8b8b0"/></linearGradient>
<polygon points="1217.81,224.598 1232.12,224.598 1232.12,216.198 1217.81,216.198" fill="url(#g226)" stroke="#000" stroke-width="1" shape-rendering="auto"/>
<ellipse cx="1232.12" cy="220.398" rx="2.604" ry="4.2" fill="#cdb0a8" stroke="#000" stroke-width="1" shape-rendering="auto"/>
<linearGradient id="g229" gradientUnits="userSpaceOnUse" x1="1228.53" y1="215.066" x2="1228.83" y2="206.271"><stop offset="0" stop-color="#a9aac0"/><stop offset=".45" stop-color="#dfe1f0"/><stop offset=".8" stop-color="#fff"/><stop offset="1" stop-color="#dfe1f0"/></linearGradient>
<polygon points="1228.53,215.066 1245.13,215.638 1245.43,206.843 1228.83,206.271" fill="url(#g229)" stroke="#000" stroke-width="1" shape-rendering="auto"/>
<ellipse cx="1245.28" cy="211.241" rx="2.728" ry="4.4" fill="#c8c8d4" stroke="#000" stroke-width="1" transform="rotate(1.9749340108819802 1245.28 211.241)" shape-rendering="auto"/>
<polygon points="1244.94,204.945 1250.2,203.8 1250.66,218.681 1245.28,220.055" fill="#b4b4c4" stroke="#000" stroke-width="0.8" />
<polygon points="1244.94,204.945 1250.2,203.8 1250.43,210.668 1245.16,211.813" fill="#d0d0de" stroke="#000" stroke-width="0.6" />
<polygon points="1219.5,236 1284.2,228.4 1289.4,247.3 1219.5,247.5" fill="#ad9895" stroke="#000" stroke-width="1" />
<polygon points="1240.8,331.6 1287.7,328 1287.7,350 1254.5,352.2 1240.8,340.8" fill="#685b5a" stroke="#000" stroke-width="1" />
<polyline points="1269.4,330 1269.4,351" fill="none" stroke="#000" stroke-width="2" />
<polygon points="1287,330 1300,327 1312,340 1298,347 1287,347" fill="#c9c9d6" stroke="#000" stroke-width="1" />
<polyline points="1289,333 1302,344" fill="none" stroke="#555" stroke-width="1" />
<polyline points="1292,331 1305,342" fill="none" stroke="#555" stroke-width="1" />
<polygon points="1148,268 1166,266 1166,344 1148,346" fill="#685b5a" stroke="#000" stroke-width="1" />
<polygon points="1143,300 1148,300 1148,343 1138,343" fill="#958180" stroke="#000" stroke-width="1" />
<polygon points="1148,267.5 1174,260 1220,247.5 1289,246 1313,251 1313,252" fill="#ad9895" stroke="#000" stroke-width="1" />
<polygon points="1147.8,268 1313,251 1313,327.6 1207,338.5 1206,327.5 1166,325 1166,347 1149,349.5" fill="#685b5a" stroke="#000" stroke-width="1" />
<polygon points="1147.8,270 1313,253.001 1313,255.601 1147.8,272.6" fill="#c4aaa7" stroke="#000" stroke-width="1" />
<polyline points="1147.8,274.5 1313,257.501" fill="none" stroke="#000" stroke-width="1" />
<polyline points="1147.8,286 1313,269.001" fill="none" stroke="#000" stroke-width="1" />
<polygon points="1147.8,303 1313,286.001 1313,288.601 1147.8,305.6" fill="#c4aaa7" stroke="#000" stroke-width="1" />
<polyline points="1166,313.127 1313,298.001" fill="none" stroke="#000" stroke-width="1" />
<polygon points="1207,325.408 1313,314.501 1313,317.101 1207,328.008" fill="#c4aaa7" stroke="#000" stroke-width="1" />
<polyline points="1166,325 1166,347" fill="none" stroke="#000" stroke-width="1" />
<polyline points="1166,310 1166,325" fill="none" stroke="#000" stroke-width="1" />
<g shape-rendering="auto">
<ellipse cx="1168" cy="292.1" rx="8.6" ry="8.2" fill="#0c0a0c" stroke="#000" stroke-width="0.5" transform="rotate(-10 1168 292.1)" />
<ellipse cx="1167.7" cy="291.8" rx="6.9" ry="6.4" fill="none" stroke="#a9a9bb" stroke-width="1.3" transform="rotate(-10 1167.7 291.8)" />
<ellipse cx="1168" cy="292.4" rx="5" ry="4.6" fill="none" stroke="#8d8d9e" stroke-width="0.9" transform="rotate(-10 1168 292.4)" />
<path d="M1165.8 291.1h4.4M1166.6 293.3h2.8" stroke="#77778a" stroke-width="1.1"/><rect x="1168.5" y="294.3" width="1.2" height="1.2" fill="#e8e8f0"/>
</g>
<g shape-rendering="auto">
<ellipse cx="1211" cy="287.5" rx="8.6" ry="8.2" fill="#0c0a0c" stroke="#000" stroke-width="0.5" transform="rotate(-10 1211 287.5)" />
<ellipse cx="1210.7" cy="287.2" rx="6.9" ry="6.4" fill="none" stroke="#a9a9bb" stroke-width="1.3" transform="rotate(-10 1210.7 287.2)" />
<ellipse cx="1211" cy="287.8" rx="5" ry="4.6" fill="none" stroke="#8d8d9e" stroke-width="0.9" transform="rotate(-10 1211 287.8)" />
<path d="M1208.8 286.5h4.4M1209.6 288.7h2.8" stroke="#77778a" stroke-width="1.1"/><rect x="1211.5" y="289.7" width="1.2" height="1.2" fill="#e8e8f0"/>
</g>
<g shape-rendering="auto">
<ellipse cx="1254" cy="283.5" rx="8.6" ry="8.2" fill="#0c0a0c" stroke="#000" stroke-width="0.5" transform="rotate(-10 1254 283.5)" />
<ellipse cx="1253.7" cy="283.2" rx="6.9" ry="6.4" fill="none" stroke="#a9a9bb" stroke-width="1.3" transform="rotate(-10 1253.7 283.2)" />
<ellipse cx="1254" cy="283.8" rx="5" ry="4.6" fill="none" stroke="#8d8d9e" stroke-width="0.9" transform="rotate(-10 1254 283.8)" />
<path d="M1251.8 282.5h4.4M1252.6 284.7h2.8" stroke="#77778a" stroke-width="1.1"/><rect x="1254.5" y="285.7" width="1.2" height="1.2" fill="#e8e8f0"/>
</g>
<g shape-rendering="auto">
<ellipse cx="1297" cy="279" rx="8.6" ry="8.2" fill="#0c0a0c" stroke="#000" stroke-width="0.5" transform="rotate(-10 1297 279)" />
<ellipse cx="1296.7" cy="278.7" rx="6.9" ry="6.4" fill="none" stroke="#a9a9bb" stroke-width="1.3" transform="rotate(-10 1296.7 278.7)" />
<ellipse cx="1297" cy="279.3" rx="5" ry="4.6" fill="none" stroke="#8d8d9e" stroke-width="0.9" transform="rotate(-10 1297 279.3)" />
<path d="M1294.8 278h4.4M1295.6 280.2h2.8" stroke="#77778a" stroke-width="1.1"/><rect x="1297.5" y="281.2" width="1.2" height="1.2" fill="#e8e8f0"/>
</g>
<g shape-rendering="auto">
<ellipse cx="1211" cy="316" rx="8.6" ry="8.2" fill="#0c0a0c" stroke="#000" stroke-width="0.5" transform="rotate(-10 1211 316)" />
<ellipse cx="1210.7" cy="315.7" rx="6.9" ry="6.4" fill="none" stroke="#a9a9bb" stroke-width="1.3" transform="rotate(-10 1210.7 315.7)" />
<ellipse cx="1211" cy="316.3" rx="5" ry="4.6" fill="none" stroke="#8d8d9e" stroke-width="0.9" transform="rotate(-10 1211 316.3)" />
<path d="M1208.8 315h4.4M1209.6 317.2h2.8" stroke="#77778a" stroke-width="1.1"/><rect x="1211.5" y="318.2" width="1.2" height="1.2" fill="#e8e8f0"/>
</g>
<g shape-rendering="auto">
<ellipse cx="1254" cy="311.6" rx="8.6" ry="8.2" fill="#0c0a0c" stroke="#000" stroke-width="0.5" transform="rotate(-10 1254 311.6)" />
<ellipse cx="1253.7" cy="311.3" rx="6.9" ry="6.4" fill="none" stroke="#a9a9bb" stroke-width="1.3" transform="rotate(-10 1253.7 311.3)" />
<ellipse cx="1254" cy="311.9" rx="5" ry="4.6" fill="none" stroke="#8d8d9e" stroke-width="0.9" transform="rotate(-10 1254 311.9)" />
<path d="M1251.8 310.6h4.4M1252.6 312.8h2.8" stroke="#77778a" stroke-width="1.1"/><rect x="1254.5" y="313.8" width="1.2" height="1.2" fill="#e8e8f0"/>
</g>
<g shape-rendering="auto">
<ellipse cx="1297" cy="307.6" rx="8.6" ry="8.2" fill="#0c0a0c" stroke="#000" stroke-width="0.5" transform="rotate(-10 1297 307.6)" />
<ellipse cx="1296.7" cy="307.3" rx="6.9" ry="6.4" fill="none" stroke="#a9a9bb" stroke-width="1.3" transform="rotate(-10 1296.7 307.3)" />
<ellipse cx="1297" cy="307.9" rx="5" ry="4.6" fill="none" stroke="#8d8d9e" stroke-width="0.9" transform="rotate(-10 1297 307.9)" />
<path d="M1294.8 306.6h4.4M1295.6 308.8h2.8" stroke="#77778a" stroke-width="1.1"/><rect x="1297.5" y="309.8" width="1.2" height="1.2" fill="#e8e8f0"/>
</g>
<linearGradient id="g294" gradientUnits="userSpaceOnUse" x1="1310.88" y1="279.578" x2="1317.12" y2="261.422"><stop offset="0" stop-color="#9a9aa8"/><stop offset=".45" stop-color="#e4e4ee"/><stop offset=".8" stop-color="#fff"/><stop offset="1" stop-color="#e4e4ee"/></linearGradient>
<polygon points="1310.88,279.578 1335.58,288.078 1341.82,269.922 1317.12,261.422" fill="url(#g294)" stroke="#000" stroke-width="1" shape-rendering="auto"/>
<ellipse cx="1338.7" cy="279" rx="5.952" ry="9.6" fill="#555a64" stroke="#000" stroke-width="1" transform="rotate(18.98985427663212 1338.7 279)" shape-rendering="auto"/>
<polygon points="1023.5,258 1052,260 1052,302.5 1023.5,300" fill="#958180" stroke="#000" stroke-width="1" />
<polygon points="1025.5,262 1038,262.5 1038,298 1025.5,297" fill="#473b3b" stroke="#000" stroke-width="1" />
<polygon points="1025.5,262 1034,262.5 1026.5,292 1025.5,297" fill="#ad9895" stroke="#000" stroke-width="1" />
<polygon points="1038.5,262 1043.5,262.5 1043.5,300 1038.5,299" fill="#ad9895" stroke="#000" stroke-width="1" />
<polygon points="1044,263 1051,263.5 1051,300 1044,299.5" fill="#473b3b" stroke="#000" stroke-width="1" />
<ellipse cx="1031" cy="296" rx="1.5" ry="1" fill="none" stroke="#000" stroke-width="0.7" />
<ellipse cx="1035" cy="281" rx="1.5" ry="1" fill="none" stroke="#000" stroke-width="0.7" />
<polygon points="1019.5,201 1023.5,202 1023.5,300 1019.5,299" fill="#ad9895" stroke="#000" stroke-width="1" />
<polygon points="1024,203.5 1034,204.5 1034,220 1024,257" fill="#473b3b" stroke="#000" stroke-width="1" />
<polygon points="1034.8,220 1047,220 1051.6,254.5 1052,260 1023.5,258" fill="#ad9895" stroke="#000" stroke-width="1" />
<ellipse cx="1037.7" cy="235.4" rx="5" ry="2.8" fill="#473b3b" stroke="#000" stroke-width="1" shape-rendering="auto"/>
<polygon points="1031,163 1070,166 1050,204 1019.5,201" fill="#ad9895" stroke="#000" stroke-width="1" />
<polygon points="1032,176 1046.5,174.5 1043,191 1033,190" fill="#473b3b" stroke="#000" stroke-width="1" />
<polygon points="1035.5,178.5 1046.5,174.5 1043,191 1036,189.5" fill="#0a0e2c" stroke="#000" stroke-width=".6"/>
<polygon points="1052,268 1060,267 1060,273 1052,274" fill="#b8b8c8" stroke="#000" stroke-width="0.6" />
<polygon points="1052,284 1060,283 1060,289 1052,290" fill="#473b3b" stroke="#000" stroke-width="0.6" />
<polygon points="1052,298 1060,297 1060,303 1052,304" fill="#b8b8c8" stroke="#000" stroke-width="0.6" />
<polygon points="1092.5,146 1073,212.5 1057.5,325 1059.62,326.5 1079.42,212.5 1094.05,147.375" fill="#ad9895" stroke="#000" stroke-width="0.8" />
<polygon points="1094.05,147.375 1079.42,212.5 1059.62,326.5 1060.31,326.98 1081.48,212.5 1094.55,147.815" fill="#473b3b" stroke="#000" stroke-width="0.8" />
<polygon points="1094.55,147.815 1081.48,212.5 1060.31,326.98 1061.75,328 1085.85,212.5 1095.6,148.75" fill="#ad9895" stroke="#000" stroke-width="0.8" />
<polygon points="1095.6,148.75 1085.85,212.5 1061.75,328 1062.77,328.72 1088.93,212.5 1096.34,149.41" fill="#473b3b" stroke="#000" stroke-width="0.8" />
<polygon points="1096.34,149.41 1088.93,212.5 1062.77,328.72 1064.05,329.62 1092.79,212.5 1097.27,150.235" fill="#ad9895" stroke="#000" stroke-width="0.8" />
<polygon points="1097.27,150.235 1092.79,212.5 1064.05,329.62 1065.07,330.34 1095.87,212.5 1098.02,150.895" fill="#473b3b" stroke="#000" stroke-width="0.8" />
<polygon points="1098.02,150.895 1095.87,212.5 1065.07,330.34 1066,331 1098.7,212.5 1098.7,151.5" fill="#958180" stroke="#000" stroke-width="0.8" />
<polygon points="1094.5,173.5 1097.5,173 1097.5,182 1094.5,182.5" fill="#c9c9dc" stroke="#000" stroke-width="0.6" />
<polyline points="1095.8,174.5 1095.8,181.5" fill="none" stroke="#f4f4fa" stroke-width="0.8" />
<polygon points="1085.5,205.5 1088.5,205 1088.5,214 1085.5,214.5" fill="#c9c9dc" stroke="#000" stroke-width="0.6" />
<polyline points="1086.8,206.5 1086.8,213.5" fill="none" stroke="#f4f4fa" stroke-width="0.8" />
<polygon points="1094,203.5 1097,203 1097,212 1094,212.5" fill="#c9c9dc" stroke="#000" stroke-width="0.6" />
<polyline points="1095.3,204.5 1095.3,211.5" fill="none" stroke="#f4f4fa" stroke-width="0.8" />
<polygon points="1074.5,238.5 1077.5,238 1077.5,247 1074.5,247.5" fill="#c9c9dc" stroke="#000" stroke-width="0.6" />
<polyline points="1075.8,239.5 1075.8,246.5" fill="none" stroke="#f4f4fa" stroke-width="0.8" />
<polygon points="1083.5,235.5 1086.5,235 1086.5,244 1083.5,244.5" fill="#c9c9dc" stroke="#000" stroke-width="0.6" />
<polyline points="1084.8,236.5 1084.8,243.5" fill="none" stroke="#f4f4fa" stroke-width="0.8" />
<polygon points="1065,271.5 1068,271 1068,280 1065,280.5" fill="#c9c9dc" stroke="#000" stroke-width="0.6" />
<polyline points="1066.3,272.5 1066.3,279.5" fill="none" stroke="#f4f4fa" stroke-width="0.8" />
<polygon points="1073,268.5 1076,268 1076,277 1073,277.5" fill="#c9c9dc" stroke="#000" stroke-width="0.6" />
<polyline points="1074.3,269.5 1074.3,276.5" fill="none" stroke="#f4f4fa" stroke-width="0.8" />
<polygon points="1065.5,298.5 1068.5,298 1068.5,307 1065.5,307.5" fill="#c9c9dc" stroke="#000" stroke-width="0.6" />
<polyline points="1066.8,299.5 1066.8,306.5" fill="none" stroke="#f4f4fa" stroke-width="0.8" />
<path d="M1092.5 146L1071 169.6L1051 199L1048 212.5L1051 239L1057.7 262L1051 304L1058.5 334L1061 327L1060 258Z" fill="#ad9895" stroke="#000" stroke-width="1"/>
<polyline points="1057.7,262 1060,258" fill="none" stroke="#000" stroke-width="1" />
<polygon points="832,602 955,548 963,562 840,612" fill="#ad9895" stroke="#000" stroke-width="1" />
<polygon points="836,604 958,551 960,556 838,609" fill="#70707a" stroke="#000" stroke-width="1" />
<polyline points="838,606 959,553" fill="none" stroke="#d5d5e2" stroke-width="1.5" />
<polygon points="826,585 950,520 955,548 832,602" fill="#473b3b" stroke="#000" stroke-width="1" />
<polygon points="826,583 950,518 950,524 826,589" fill="#958180" stroke="#000" stroke-width="1" />
<polygon points="848,560 880,543 880,566 848,583" fill="#958180" stroke="#000" stroke-width="1" />
<polygon points="890,538 925,520 925,545 890,563" fill="#958180" stroke="#000" stroke-width="1" />
<polygon points="800,531 901,486.5 907,490 806,536" fill="#ad9895" stroke="#000" stroke-width="1" />
<polyline points="804,533.5 903,490" fill="none" stroke="#151515" stroke-width="3" />
<polyline points="804,533.5 903,490" fill="none" stroke="#ecebf2" stroke-width="1.6" stroke-dasharray="7 4"/>
<polygon points="806,536 907,490 912,497 812,543" fill="#958180" stroke="#000" stroke-width="1" />
<polygon points="812,543 912,497 935,510 835,558" fill="#473b3b" stroke="#000" stroke-width="1" />
<linearGradient id="g351" gradientUnits="userSpaceOnUse" x1="843.332" y1="548.91" x2="840.668" y2="543.09"><stop offset="0" stop-color="#9a9aa8"/><stop offset=".45" stop-color="#e4e4ee"/><stop offset=".8" stop-color="#fff"/><stop offset="1" stop-color="#e4e4ee"/></linearGradient>
<polygon points="843.332,548.91 926.332,510.91 923.668,505.09 840.668,543.09" fill="url(#g351)" stroke="#000" stroke-width="1" shape-rendering="auto"/>
<ellipse cx="925" cy="508" rx="1.984" ry="3.2" fill="#c8c8d4" stroke="#000" stroke-width="1" transform="rotate(-24.599790605157466 925 508)" shape-rendering="auto"/>
<polygon points="830,552 935,505 943,510 838,558" fill="#ad9895" stroke="#000" stroke-width="1" />
<polyline points="834,555.5 939,508.5" fill="none" stroke="#151515" stroke-width="3" />
<polyline points="834,555.5 939,508.5" fill="none" stroke="#ecebf2" stroke-width="1.6" stroke-dasharray="7 4"/>
<polygon points="838,558 943,510 946,520 841,568" fill="#958180" stroke="#000" stroke-width="1" />
<polygon points="812,540 826,548 830,575 818,570" fill="#ad9895" stroke="#000" stroke-width="1" />
<polygon points="789,548 806,560 806,588 789,576" fill="#b9b9ca" stroke="#000" stroke-width="1" />
<polygon points="789,548 804,540.5 822,552 806,560" fill="#c6c6d6" stroke="#000" stroke-width="1" />
<polygon points="806,560 822,552 822,573 806,588" fill="#4c4d56" stroke="#000" stroke-width="1" />
<polygon points="808,577 814,573 816,600 810,603" fill="#2c2c30" stroke="#000" stroke-width="1" />
<linearGradient id="g363" gradientUnits="userSpaceOnUse" x1="807.934" y1="589.036" x2="818.066" y2="572.964"><stop offset="0" stop-color="#9a9aa8"/><stop offset=".45" stop-color="#e4e4ee"/><stop offset=".8" stop-color="#fff"/><stop offset="1" stop-color="#e4e4ee"/></linearGradient>
<polygon points="807.934,589.036 830.934,603.536 841.066,587.464 818.066,572.964" fill="url(#g363)" stroke="#000" stroke-width="1" shape-rendering="auto"/>
<ellipse cx="836" cy="595.5" rx="5.89" ry="9.5" fill="#555a64" stroke="#000" stroke-width="1" transform="rotate(32.22875743509856 836 595.5)" shape-rendering="auto"/>
<polygon points="839,273 904,267 910,289 840,287" fill="#ad9895" stroke="#000" stroke-width="1" />
<polygon points="858,277.5 888,274.5 889,280 859,283" fill="#958180" stroke="#000" stroke-width="1" />
<polygon points="838,365 892,358 892,412 838,420" fill="#685b5a" stroke="#000" stroke-width="1" />
<polyline points="848,364 848,415" fill="none" stroke="#000" stroke-width="1" />
<polyline points="862,364 862,415" fill="none" stroke="#000" stroke-width="1" />
<polyline points="876,364 876,415" fill="none" stroke="#000" stroke-width="1" />
<polygon points="728,310.5 810,290 840,287 927.5,290.5 927.5,292" fill="#ad9895" stroke="#000" stroke-width="1" />
<polyline points="740,309 815,292 927,292" fill="none" stroke="#000" stroke-width="1" />
<polygon points="728,311 927.5,291.5 927.5,366 730,388" fill="#685b5a" stroke="#000" stroke-width="1" />
<polygon points="728,313 927.5,293.509 927.5,296.109 728,315.6" fill="#c4aaa7" stroke="#000" stroke-width="1" />
<polyline points="728,317.5 927.5,298.009" fill="none" stroke="#000" stroke-width="1" />
<polyline points="728,328.5 927.5,309.009" fill="none" stroke="#000" stroke-width="1" />
<polygon points="728,346 927.5,326.509 927.5,329.109 728,348.6" fill="#c4aaa7" stroke="#000" stroke-width="1" />
<polyline points="728,355 927.5,335.509" fill="none" stroke="#000" stroke-width="1" />
<polygon points="728,374.5 927.5,355.009 927.5,357.609 728,377.1" fill="#c4aaa7" stroke="#000" stroke-width="1" />
<polyline points="728,381 927.5,361.509" fill="none" stroke="#000" stroke-width="1" />
<polyline points="728,311 730,388" fill="none" stroke="#000" stroke-width="1" />
<g shape-rendering="auto">
<ellipse cx="746" cy="334.75" rx="8.6" ry="8.2" fill="#0c0a0c" stroke="#000" stroke-width="0.5" transform="rotate(-10 746 334.75)" />
<ellipse cx="745.7" cy="334.45" rx="6.9" ry="6.4" fill="none" stroke="#a9a9bb" stroke-width="1.3" transform="rotate(-10 745.7 334.45)" />
<ellipse cx="746" cy="335.05" rx="5" ry="4.6" fill="none" stroke="#8d8d9e" stroke-width="0.9" transform="rotate(-10 746 335.05)" />
<path d="M743.8 333.75h4.4M744.6 335.95h2.8" stroke="#77778a" stroke-width="1.1"/><rect x="746.5" y="336.95" width="1.2" height="1.2" fill="#e8e8f0"/>
</g>
<g shape-rendering="auto">
<ellipse cx="800.5" cy="329" rx="8.6" ry="8.2" fill="#0c0a0c" stroke="#000" stroke-width="0.5" transform="rotate(-10 800.5 329)" />
<ellipse cx="800.2" cy="328.7" rx="6.9" ry="6.4" fill="none" stroke="#a9a9bb" stroke-width="1.3" transform="rotate(-10 800.2 328.7)" />
<ellipse cx="800.5" cy="329.3" rx="5" ry="4.6" fill="none" stroke="#8d8d9e" stroke-width="0.9" transform="rotate(-10 800.5 329.3)" />
<path d="M798.3 328h4.4M799.1 330.2h2.8" stroke="#77778a" stroke-width="1.1"/><rect x="801" y="331.2" width="1.2" height="1.2" fill="#e8e8f0"/>
</g>
<g shape-rendering="auto">
<ellipse cx="855" cy="324" rx="8.6" ry="8.2" fill="#0c0a0c" stroke="#000" stroke-width="0.5" transform="rotate(-10 855 324)" />
<ellipse cx="854.7" cy="323.7" rx="6.9" ry="6.4" fill="none" stroke="#a9a9bb" stroke-width="1.3" transform="rotate(-10 854.7 323.7)" />
<ellipse cx="855" cy="324.3" rx="5" ry="4.6" fill="none" stroke="#8d8d9e" stroke-width="0.9" transform="rotate(-10 855 324.3)" />
<path d="M852.8 323h4.4M853.6 325.2h2.8" stroke="#77778a" stroke-width="1.1"/><rect x="855.5" y="326.2" width="1.2" height="1.2" fill="#e8e8f0"/>
</g>
<g shape-rendering="auto">
<ellipse cx="909" cy="318" rx="8.6" ry="8.2" fill="#0c0a0c" stroke="#000" stroke-width="0.5" transform="rotate(-10 909 318)" />
<ellipse cx="908.7" cy="317.7" rx="6.9" ry="6.4" fill="none" stroke="#a9a9bb" stroke-width="1.3" transform="rotate(-10 908.7 317.7)" />
<ellipse cx="909" cy="318.3" rx="5" ry="4.6" fill="none" stroke="#8d8d9e" stroke-width="0.9" transform="rotate(-10 909 318.3)" />
<path d="M906.8 317h4.4M907.6 319.2h2.8" stroke="#77778a" stroke-width="1.1"/><rect x="909.5" y="320.2" width="1.2" height="1.2" fill="#e8e8f0"/>
</g>
<g shape-rendering="auto">
<ellipse cx="746" cy="363.7" rx="8.6" ry="8.2" fill="#0c0a0c" stroke="#000" stroke-width="0.5" transform="rotate(-10 746 363.7)" />
<ellipse cx="745.7" cy="363.4" rx="6.9" ry="6.4" fill="none" stroke="#a9a9bb" stroke-width="1.3" transform="rotate(-10 745.7 363.4)" />
<ellipse cx="746" cy="364" rx="5" ry="4.6" fill="none" stroke="#8d8d9e" stroke-width="0.9" transform="rotate(-10 746 364)" />
<path d="M743.8 362.7h4.4M744.6 364.9h2.8" stroke="#77778a" stroke-width="1.1"/><rect x="746.5" y="365.9" width="1.2" height="1.2" fill="#e8e8f0"/>
</g>
<g shape-rendering="auto">
<ellipse cx="800.5" cy="358" rx="8.6" ry="8.2" fill="#0c0a0c" stroke="#000" stroke-width="0.5" transform="rotate(-10 800.5 358)" />
<ellipse cx="800.2" cy="357.7" rx="6.9" ry="6.4" fill="none" stroke="#a9a9bb" stroke-width="1.3" transform="rotate(-10 800.2 357.7)" />
<ellipse cx="800.5" cy="358.3" rx="5" ry="4.6" fill="none" stroke="#8d8d9e" stroke-width="0.9" transform="rotate(-10 800.5 358.3)" />
<path d="M798.3 357h4.4M799.1 359.2h2.8" stroke="#77778a" stroke-width="1.1"/><rect x="801" y="360.2" width="1.2" height="1.2" fill="#e8e8f0"/>
</g>
<g shape-rendering="auto">
<ellipse cx="855" cy="352.5" rx="8.6" ry="8.2" fill="#0c0a0c" stroke="#000" stroke-width="0.5" transform="rotate(-10 855 352.5)" />
<ellipse cx="854.7" cy="352.2" rx="6.9" ry="6.4" fill="none" stroke="#a9a9bb" stroke-width="1.3" transform="rotate(-10 854.7 352.2)" />
<ellipse cx="855" cy="352.8" rx="5" ry="4.6" fill="none" stroke="#8d8d9e" stroke-width="0.9" transform="rotate(-10 855 352.8)" />
<path d="M852.8 351.5h4.4M853.6 353.7h2.8" stroke="#77778a" stroke-width="1.1"/><rect x="855.5" y="354.7" width="1.2" height="1.2" fill="#e8e8f0"/>
</g>
<polygon points="927.5,322 946,318 948,366 927.5,374" fill="#685b5a" stroke="#000" stroke-width="1" />
<polygon points="929,334 945,331 945,345 929,349" fill="#473b3b" stroke="#000" stroke-width="1" />
<polygon points="928,300 940,296 946,300 946,322 934,328 928,322" fill="#8c7977" stroke="#000" stroke-width="1" />
<ellipse cx="937" cy="302" rx="8" ry="4.5" fill="#ad9895" stroke="#000" stroke-width="1" shape-rendering="auto"/>
<ellipse cx="937" cy="322" rx="8" ry="4.5" fill="#958180" stroke="#000" stroke-width="1" shape-rendering="auto"/>
<polygon points="937,299 1002,283 1003,287.5 938,304.5" fill="#a08c89" stroke="#000" stroke-width="1" shape-rendering="auto"/>
<polyline points="965,293 966,297" fill="none" stroke="#000" stroke-width="1" />
<polyline points="972,291 973,295.5" fill="none" stroke="#000" stroke-width="1" />
<polygon points="996,281 1012,277 1020,281 1018,290 1003,294 997,290" fill="#ad9895" stroke="#000" stroke-width="1" shape-rendering="auto"/>
<ellipse cx="1010" cy="282" rx="3.5" ry="2.2" fill="#958180" stroke="#000" stroke-width="0.8" shape-rendering="auto"/>
<polygon points="880,444 900,454 900,492 880,482" fill="#8c7977" stroke="#000" stroke-width="1" />
<polygon points="900,454 912,449 912,487 900,492" fill="#473b3b" stroke="#000" stroke-width="1" />
<polygon points="926,449 953,449 953,475 926,475" fill="#8c7977" stroke="#000" stroke-width="1" />
<polygon points="912,449 926,449 926,475 912,487" fill="#473b3b" stroke="#000" stroke-width="1" />
<polygon points="877.5,435 950,432 990,452 925,462" fill="#ad9895" stroke="#000" stroke-width="1" />
<polygon points="877.5,435 925,462 925,468 877.5,441" fill="#958180" stroke="#000" stroke-width="1" />
<polygon points="925,462 990,452 990,458 925,468" fill="#8c7977" stroke="#000" stroke-width="1" />
<polygon points="896,478 925,462 948,473 950,505 926,495" fill="#ad9895" stroke="#000" stroke-width="1" />
<polygon points="896,478 926,495 926,500 896,483" fill="#958180" stroke="#000" stroke-width="1" />
<polygon points="926,470 948,476 948,500 926,492" fill="#473b3b" stroke="#000" stroke-width="1" />
<polygon points="839,414 891,387 1005,388 965,418 948,440 895,444" fill="#ad9895" stroke="#000" stroke-width="1" />
<polygon points="839,414 895,444 948,440 948,447 895,452 841,423" fill="#958180" stroke="#000" stroke-width="1" />
<polyline points="895,444 895,452" fill="none" stroke="#000" stroke-width="1" />
<polygon points="841,423 895,452 895,456 845,430" fill="#8c7977" stroke="#000" stroke-width="1" />
<ellipse cx="935" cy="422" rx="6" ry="2.5" fill="none" stroke="#000" stroke-width="0.8" shape-rendering="auto"/>
<polygon points="925,370 942,362 944,378 926,383" fill="#e2e2ee" stroke="#000" stroke-width="0.8" shape-rendering="auto"/>
<g shape-rendering="auto">
<ellipse cx="930" cy="402.5" rx="9.2" ry="5.28" fill="none" stroke="#000" stroke-width="1.3" stroke-dasharray="1.3 1.1"/>
<ellipse cx="930" cy="402.2" rx="7.6" ry="4.48" fill="#8f7c7a" stroke="none" stroke-width="0" />
<ellipse cx="930" cy="403.5" rx="6.72" ry="4.16" fill="#050505" stroke="#000" stroke-width="0.6" />
<path d="M927.6 401.22a6 3.3 0 0 0 -1.5 5.6M932.4 401.22a6 3.3 0 0 1 1.5 5.6" fill="none" stroke="#d4d4e6" stroke-width="1.2"/>
<path d="M928.72 400.98h3.2M928.08 403.3h2.2M930.48 402.98h2.4M927.92 405.86h2" stroke="#c9c9da" stroke-width="0.88"/>
</g>
<polygon points="892,335 915.75,332.5 915.75,356 893.75,357" fill="#9e8a87" stroke="#000" stroke-width="1" />
<polygon points="896.75,337.5 912.25,336 912.25,355 896.75,356.5" fill="#7b6b68" stroke="#000" stroke-width="1" />
<polygon points="900.75,350 908.75,349 908.75,354 900.75,355" fill="#d8d8e2" stroke="#000" stroke-width="1" />
<polygon points="900.75,352.5 906.75,352 906.75,354.2 900.75,354.8" fill="#1c1a1c" stroke="#000" stroke-width="0" />
<polygon points="893.75,357 923.25,355 925.75,433 896.25,436" fill="#9e8a87" stroke="#000" stroke-width="1" />
<polygon points="896.25,359.8 920.25,358 922.25,418 899.75,421" fill="#7b6b68" stroke="#000" stroke-width="1" />
<polygon points="899.75,421 922.25,418 924.25,430.5 898.25,433.5" fill="#a4918d" stroke="#000" stroke-width="1" />
<polyline points="896.25,359.8 899.75,421" fill="none" stroke="#000" stroke-width="1" />
<ellipse cx="901.75" cy="429" rx="0.9" ry="0.9" fill="#000" stroke="#000" stroke-width="0" />
<ellipse cx="919.75" cy="426" rx="0.9" ry="0.9" fill="#000" stroke="#000" stroke-width="0" />
<ellipse cx="918.75" cy="421" rx="0.9" ry="0.9" fill="#000" stroke="#000" stroke-width="0" />
<ellipse cx="902.75" cy="424" rx="0.9" ry="0.9" fill="#000" stroke="#000" stroke-width="0" />
<g shape-rendering="auto">
<ellipse cx="907.25" cy="369.5" rx="6.5" ry="5.5" fill="#8b8a42" stroke="#000" stroke-width="0.7" />
<polygon points="902.75,371 911.75,370 914.75,383 905.75,384.5" fill="#d9bab2" stroke="#000" stroke-width="0.7" />
<ellipse cx="910.25" cy="383.5" rx="4.6" ry="3.6" fill="#7a625c" stroke="#000" stroke-width="0.7" />
<polygon points="901.75,387 910.75,386 910.75,393 901.75,394" fill="#1e1e22" stroke="#000" stroke-width="0.5" />
<polygon points="903.75,388 912.75,387 915.75,400 906.75,401.5" fill="#e6e6f2" stroke="#000" stroke-width="0.7" />
<polygon points="907.75,400 918.75,399 918.75,410 907.75,411.5" fill="#9b9ba6" stroke="#000" stroke-width="0.7" />
<polygon points="907.75,411.5 918.75,410 918.75,413 907.75,414.5" fill="#6c6c76" stroke="#000" stroke-width="0.5" />
<ellipse cx="902.75" cy="409" rx="2.5" ry="5" fill="#8b8a42" stroke="#000" stroke-width="0.5" transform="rotate(15 902.75 409)" />
<polygon points="905.75,412 913.75,411 915.75,423 907.75,424.5" fill="#d9bab2" stroke="#000" stroke-width="0.7" />
<ellipse cx="911.25" cy="424" rx="4.6" ry="3.8" fill="#7a625c" stroke="#000" stroke-width="0.7" />
</g>
<polygon points="943.85,331.75 967.6,329.25 967.6,352.75 945.6,353.75" fill="#9e8a87" stroke="#000" stroke-width="1" />
<polygon points="948.6,334.25 964.1,332.75 964.1,351.75 948.6,353.25" fill="#7b6b68" stroke="#000" stroke-width="1" />
<polygon points="952.6,346.75 960.6,345.75 960.6,350.75 952.6,351.75" fill="#d8d8e2" stroke="#000" stroke-width="1" />
<polygon points="952.6,349.25 958.6,348.75 958.6,350.95 952.6,351.55" fill="#1c1a1c" stroke="#000" stroke-width="0" />
<polygon points="945.6,353.75 975.1,351.75 977.6,429.75 948.1,432.75" fill="#9e8a87" stroke="#000" stroke-width="1" />
<polygon points="948.1,356.55 972.1,354.75 974.1,414.75 951.6,417.75" fill="#7b6b68" stroke="#000" stroke-width="1" />
<polygon points="951.6,417.75 974.1,414.75 976.1,427.25 950.1,430.25" fill="#a4918d" stroke="#000" stroke-width="1" />
<polyline points="948.1,356.55 951.6,417.75" fill="none" stroke="#000" stroke-width="1" />
<ellipse cx="953.6" cy="425.75" rx="0.9" ry="0.9" fill="#000" stroke="#000" stroke-width="0" />
<ellipse cx="971.6" cy="422.75" rx="0.9" ry="0.9" fill="#000" stroke="#000" stroke-width="0" />
<ellipse cx="970.6" cy="417.75" rx="0.9" ry="0.9" fill="#000" stroke="#000" stroke-width="0" />
<ellipse cx="954.6" cy="420.75" rx="0.9" ry="0.9" fill="#000" stroke="#000" stroke-width="0" />
<g shape-rendering="auto">
<ellipse cx="959.1" cy="366.25" rx="6.5" ry="5.5" fill="#8b8a42" stroke="#000" stroke-width="0.7" />
<polygon points="954.6,367.75 963.6,366.75 966.6,379.75 957.6,381.25" fill="#d9bab2" stroke="#000" stroke-width="0.7" />
<ellipse cx="962.1" cy="380.25" rx="4.6" ry="3.6" fill="#7a625c" stroke="#000" stroke-width="0.7" />
<polygon points="953.6,383.75 962.6,382.75 962.6,389.75 953.6,390.75" fill="#1e1e22" stroke="#000" stroke-width="0.5" />
<polygon points="955.6,384.75 964.6,383.75 967.6,396.75 958.6,398.25" fill="#e6e6f2" stroke="#000" stroke-width="0.7" />
<polygon points="959.6,396.75 970.6,395.75 970.6,406.75 959.6,408.25" fill="#9b9ba6" stroke="#000" stroke-width="0.7" />
<polygon points="959.6,408.25 970.6,406.75 970.6,409.75 959.6,411.25" fill="#6c6c76" stroke="#000" stroke-width="0.5" />
<ellipse cx="954.6" cy="405.75" rx="2.5" ry="5" fill="#8b8a42" stroke="#000" stroke-width="0.5" transform="rotate(15 954.6 405.75)" />
<polygon points="957.6,408.75 965.6,407.75 967.6,419.75 959.6,421.25" fill="#d9bab2" stroke="#000" stroke-width="0.7" />
<ellipse cx="963.1" cy="420.75" rx="4.6" ry="3.8" fill="#7a625c" stroke="#000" stroke-width="0.7" />
</g>
<polygon points="994.25,328 1018,325.5 1018,349 996,350" fill="#9e8a87" stroke="#000" stroke-width="1" />
<polygon points="999,330.5 1014.5,329 1014.5,348 999,349.5" fill="#7b6b68" stroke="#000" stroke-width="1" />
<polygon points="1003,343 1011,342 1011,347 1003,348" fill="#d8d8e2" stroke="#000" stroke-width="1" />
<polygon points="1003,345.5 1009,345 1009,347.2 1003,347.8" fill="#1c1a1c" stroke="#000" stroke-width="0" />
<polygon points="996,350 1025.5,348 1028,426 998.5,429" fill="#9e8a87" stroke="#000" stroke-width="1" />
<polygon points="998.5,352.8 1022.5,351 1024.5,411 1002,414" fill="#7b6b68" stroke="#000" stroke-width="1" />
<polygon points="1002,414 1024.5,411 1026.5,423.5 1000.5,426.5" fill="#a4918d" stroke="#000" stroke-width="1" />
<polyline points="998.5,352.8 1002,414" fill="none" stroke="#000" stroke-width="1" />
<ellipse cx="1004" cy="422" rx="0.9" ry="0.9" fill="#000" stroke="#000" stroke-width="0" />
<ellipse cx="1022" cy="419" rx="0.9" ry="0.9" fill="#000" stroke="#000" stroke-width="0" />
<ellipse cx="1021" cy="414" rx="0.9" ry="0.9" fill="#000" stroke="#000" stroke-width="0" />
<ellipse cx="1005" cy="417" rx="0.9" ry="0.9" fill="#000" stroke="#000" stroke-width="0" />
<g shape-rendering="auto">
<ellipse cx="1009.5" cy="362.5" rx="6.5" ry="5.5" fill="#8b8a42" stroke="#000" stroke-width="0.7" />
<polygon points="1005,364 1014,363 1017,376 1008,377.5" fill="#d9bab2" stroke="#000" stroke-width="0.7" />
<ellipse cx="1012.5" cy="376.5" rx="4.6" ry="3.6" fill="#7a625c" stroke="#000" stroke-width="0.7" />
<polygon points="1004,380 1013,379 1013,386 1004,387" fill="#1e1e22" stroke="#000" stroke-width="0.5" />
<polygon points="1006,381 1015,380 1018,393 1009,394.5" fill="#e6e6f2" stroke="#000" stroke-width="0.7" />
<polygon points="1010,393 1021,392 1021,403 1010,404.5" fill="#9b9ba6" stroke="#000" stroke-width="0.7" />
<polygon points="1010,404.5 1021,403 1021,406 1010,407.5" fill="#6c6c76" stroke="#000" stroke-width="0.5" />
<ellipse cx="1005" cy="402" rx="2.5" ry="5" fill="#8b8a42" stroke="#000" stroke-width="0.5" transform="rotate(15 1005 402)" />
<polygon points="1008,405 1016,404 1018,416 1010,417.5" fill="#d9bab2" stroke="#000" stroke-width="0.7" />
<ellipse cx="1013.5" cy="417" rx="4.6" ry="3.8" fill="#7a625c" stroke="#000" stroke-width="0.7" />
</g>
<polygon points="957.25,474.5 985.75,476.5 985.75,519 957.25,516.5" fill="#958180" stroke="#000" stroke-width="1" />
<polygon points="959.25,478.5 971.75,479 971.75,514.5 959.25,513.5" fill="#473b3b" stroke="#000" stroke-width="1" />
<polygon points="959.25,478.5 967.75,479 960.25,508.5 959.25,513.5" fill="#ad9895" stroke="#000" stroke-width="1" />
<polygon points="972.25,478.5 977.25,479 977.25,516.5 972.25,515.5" fill="#ad9895" stroke="#000" stroke-width="1" />
<polygon points="977.75,479.5 984.75,480 984.75,516.5 977.75,516" fill="#473b3b" stroke="#000" stroke-width="1" />
<ellipse cx="964.75" cy="512.5" rx="1.5" ry="1" fill="none" stroke="#000" stroke-width="0.7" />
<ellipse cx="968.75" cy="497.5" rx="1.5" ry="1" fill="none" stroke="#000" stroke-width="0.7" />
<polygon points="953.25,417.5 957.25,418.5 957.25,516.5 953.25,515.5" fill="#ad9895" stroke="#000" stroke-width="1" />
<polygon points="957.75,420 967.75,421 967.75,436.5 957.75,473.5" fill="#473b3b" stroke="#000" stroke-width="1" />
<polygon points="968.55,436.5 980.75,436.5 985.35,471 985.75,476.5 957.25,474.5" fill="#ad9895" stroke="#000" stroke-width="1" />
<ellipse cx="971.45" cy="451.9" rx="5" ry="2.8" fill="#473b3b" stroke="#000" stroke-width="1" shape-rendering="auto"/>
<polygon points="964.75,379.5 1003.75,382.5 983.75,420.5 953.25,417.5" fill="#ad9895" stroke="#000" stroke-width="1" />
<polygon points="985.75,484.5 993.75,483.5 993.75,489.5 985.75,490.5" fill="#b8b8c8" stroke="#000" stroke-width="0.6" />
<polygon points="985.75,500.5 993.75,499.5 993.75,505.5 985.75,506.5" fill="#473b3b" stroke="#000" stroke-width="0.6" />
<polygon points="985.75,514.5 993.75,513.5 993.75,519.5 985.75,520.5" fill="#b8b8c8" stroke="#000" stroke-width="0.6" />
<polygon points="1026.25,362.5 1006.75,429 992.867,529.5 995.441,531 1013.17,429 1027.8,363.875" fill="#ad9895" stroke="#000" stroke-width="0.8" />
<polygon points="1027.8,363.875 1013.17,429 995.441,531 996.265,531.48 1015.23,429 1028.3,364.315" fill="#473b3b" stroke="#000" stroke-width="0.8" />
<polygon points="1028.3,364.315 1015.23,429 996.265,531.48 998.015,532.5 1019.6,429 1029.35,365.25" fill="#ad9895" stroke="#000" stroke-width="0.8" />
<polygon points="1029.35,365.25 1019.6,429 998.015,532.5 999.25,533.22 1022.68,429 1030.09,365.91" fill="#473b3b" stroke="#000" stroke-width="0.8" />
<polygon points="1030.09,365.91 1022.68,429 999.25,533.22 1000.79,534.12 1026.54,429 1031.02,366.735" fill="#ad9895" stroke="#000" stroke-width="0.8" />
<polygon points="1031.02,366.735 1026.54,429 1000.79,534.12 1002.03,534.84 1029.62,429 1031.77,367.395" fill="#473b3b" stroke="#000" stroke-width="0.8" />
<polygon points="1031.77,367.395 1029.62,429 1002.03,534.84 1003.16,535.5 1032.45,429 1032.45,368" fill="#958180" stroke="#000" stroke-width="0.8" />
<polygon points="1028.25,390 1031.25,389.5 1031.25,398.5 1028.25,399" fill="#c9c9dc" stroke="#000" stroke-width="0.6" />
<polyline points="1029.55,391 1029.55,398" fill="none" stroke="#f4f4fa" stroke-width="0.8" />
<polygon points="1019.25,422 1022.25,421.5 1022.25,430.5 1019.25,431" fill="#c9c9dc" stroke="#000" stroke-width="0.6" />
<polyline points="1020.55,423 1020.55,430" fill="none" stroke="#f4f4fa" stroke-width="0.8" />
<polygon points="1027.75,420 1030.75,419.5 1030.75,428.5 1027.75,429" fill="#c9c9dc" stroke="#000" stroke-width="0.6" />
<polyline points="1029.05,421 1029.05,428" fill="none" stroke="#f4f4fa" stroke-width="0.8" />
<polygon points="1008.25,455 1011.25,454.5 1011.25,463.5 1008.25,464" fill="#c9c9dc" stroke="#000" stroke-width="0.6" />
<polyline points="1009.55,456 1009.55,463" fill="none" stroke="#f4f4fa" stroke-width="0.8" />
<polygon points="1017.25,452 1020.25,451.5 1020.25,460.5 1017.25,461" fill="#c9c9dc" stroke="#000" stroke-width="0.6" />
<polyline points="1018.55,453 1018.55,460" fill="none" stroke="#f4f4fa" stroke-width="0.8" />
<polygon points="998.75,488 1001.75,487.5 1001.75,496.5 998.75,497" fill="#c9c9dc" stroke="#000" stroke-width="0.6" />
<polyline points="1000.05,489 1000.05,496" fill="none" stroke="#f4f4fa" stroke-width="0.8" />
<polygon points="1006.75,485 1009.75,484.5 1009.75,493.5 1006.75,494" fill="#c9c9dc" stroke="#000" stroke-width="0.6" />
<polyline points="1008.05,486 1008.05,493" fill="none" stroke="#f4f4fa" stroke-width="0.8" />
<polygon points="999.25,515 1002.25,514.5 1002.25,523.5 999.25,524" fill="#c9c9dc" stroke="#000" stroke-width="0.6" />
<polyline points="1000.55,516 1000.55,523" fill="none" stroke="#f4f4fa" stroke-width="0.8" />
<path d="M1026.25 362.5L1004.75 386.1L984.75 415.5L981.75 429L984.75 455.5L991.45 478.5L984.75 516.9L993.867 538.5L996.367 531.5L993.75 474.5Z" fill="#ad9895" stroke="#000" stroke-width="1"/>
<polyline points="991.45,478.5 993.75,474.5" fill="none" stroke="#000" stroke-width="1" />
<polygon points="1023.75,560 1042.5,571.25 1042.5,630 1023.75,620" fill="#958180" stroke="#000" stroke-width="1" />
<polygon points="1042.5,571.25 1071.25,585 1053.75,617.5 1042.5,630" fill="#473b3b" stroke="#000" stroke-width="1" />
<polygon points="1008.75,622.5 1023.75,613.75 1023.75,620 1042.5,630 1053.75,620 1056.25,628.75 1037.5,641.25" fill="#ad9895" stroke="#000" stroke-width="1" />
<polygon points="1008.75,622.5 1037.5,641.25 1037.5,643.75 1008.75,625" fill="#958180" stroke="#000" stroke-width="1" />
<ellipse cx="1015" cy="623" rx="1.2" ry="0.8" fill="none" stroke="#000" stroke-width="0.7" />
<ellipse cx="1036.25" cy="633.75" rx="1.2" ry="0.8" fill="none" stroke="#000" stroke-width="0.7" />
<polygon points="1058.75,598.75 1106.25,625 1106.25,651.25 1058.75,625" fill="#958180" stroke="#000" stroke-width="1" />
<polygon points="1058.75,598.75 1075,590 1122.5,616.25 1106.25,625" fill="#ad9895" stroke="#000" stroke-width="1" />
<polygon points="1106.25,625 1122.5,616.25 1150,630 1150,640 1106.25,662.5" fill="#ad9895" stroke="#000" stroke-width="1" />
<polygon points="1106.25,625 1150,630 1117.5,647.5 1106.25,651.25" fill="#ad9895" stroke="#000" stroke-width="1" />
<ellipse cx="1112.5" cy="630" rx="0.7" ry="0.7" fill="#000" stroke="#000" stroke-width="0" />
<ellipse cx="1120" cy="633.75" rx="0.7" ry="0.7" fill="#000" stroke="#000" stroke-width="0" />
<ellipse cx="1127.5" cy="637.5" rx="0.7" ry="0.7" fill="#000" stroke="#000" stroke-width="0" />
<ellipse cx="1117.5" cy="640" rx="0.7" ry="0.7" fill="#000" stroke="#000" stroke-width="0" />
<ellipse cx="1125" cy="643.75" rx="0.7" ry="0.7" fill="#000" stroke="#000" stroke-width="0" />
<ellipse cx="1135" cy="635" rx="0.7" ry="0.7" fill="#000" stroke="#000" stroke-width="0" />
<ellipse cx="1140" cy="638.75" rx="0.7" ry="0.7" fill="#000" stroke="#000" stroke-width="0" />
<polygon points="1076.25,596.25 1086.25,593.75 1095,600 1086.25,605 1076.25,601.25" fill="#b8b8c6" stroke="#000" stroke-width="0.8" />
<polygon points="1107.5,615 1117.5,610 1128.75,616.25 1120,623.75 1107.5,620" fill="#b8b8c6" stroke="#000" stroke-width="0.8" />
<path d="M1113.75 613.75a5 5 0 0 1 10 -2l0 8z" fill="#d0d0dc" stroke="#000" stroke-width=".7" shape-rendering="auto"/>
<polygon points="1053.75,628.75 1058.75,625 1106.25,652.5 1106.25,662.5 1095,667.5 1053.75,645" fill="#8c7977" stroke="#000" stroke-width="1" />
<polygon points="1062.5,632.5 1092.5,650 1092.5,661.25 1062.5,643.75" fill="#473b3b" stroke="#000" stroke-width="1" />
<polygon points="1053.75,642.5 1095,666.25 1095,672.5 1053.75,648.75" fill="#ad9895" stroke="#000" stroke-width="1" />
<polygon points="1012.5,540 1082.5,506.25 1185,552.5 1185,605 1155,620" fill="#ad9895" stroke="#000" stroke-width="1" />
<polygon points="1012.5,540 1155,620 1155,630 1016.25,556.25" fill="#958180" stroke="#000" stroke-width="1" />
<polygon points="1155,620 1172.5,611.25 1172.5,621.25 1155,630" fill="#473b3b" stroke="#000" stroke-width="1" />
<polyline points="1013.75,546.25 1155,623" fill="none" stroke="#000" stroke-width="1" />
<polygon points="1062.5,538.75 1090,523 1166.25,566.25 1138.75,582.5" fill="#958180" stroke="#000" stroke-width="1" />
<polygon points="1062.5,538.75 1090,523 1101.25,529.5 1101.25,560" fill="#473b3b" stroke="#000" stroke-width="1" />
<polyline points="1101.25,529.5 1101.25,548.75" fill="none" stroke="#000" stroke-width="1" />
<polygon points="1101.25,529.5 1166.25,566.25 1160,570 1101.25,537.5" fill="#8c7977" stroke="#000" stroke-width="1" />
<g shape-rendering="auto">
<path d="M1098 555.75v8a14.5 9 0 0 0 29 0v-8z" fill="#958180" stroke="#000"/>
<ellipse cx="1112.5" cy="555.75" rx="14.5" ry="9" fill="#473b3b" stroke="#000" stroke-width="1" />
<ellipse cx="1112.5" cy="559.75" rx="9" ry="5" fill="#8c7977" stroke="#000" stroke-width="0.7" />
<ellipse cx="1086.75" cy="565.5" rx="4" ry="2.5" fill="none" stroke="#000" stroke-width="0.8" />
</g>
<ellipse cx="1075" cy="560" rx="0.6" ry="0.6" fill="#000" stroke="#000" stroke-width="0" />
<ellipse cx="1080" cy="565.5" rx="0.6" ry="0.6" fill="#000" stroke="#000" stroke-width="0" />
<ellipse cx="1093.75" cy="562.5" rx="0.6" ry="0.6" fill="#000" stroke="#000" stroke-width="0" />
<ellipse cx="1082.5" cy="558.75" rx="0.6" ry="0.6" fill="#000" stroke="#000" stroke-width="0" />
<ellipse cx="1090" cy="570" rx="0.6" ry="0.6" fill="#000" stroke="#000" stroke-width="0" />
<polygon points="1103.75,581.25 1120,573.75 1137.5,580 1120,587.5" fill="#ad9895" stroke="#000" stroke-width="1" />
<polygon points="1110,581.25 1120,577 1130,580.5 1120,585" fill="#958180" stroke="#000" stroke-width="1" />
<ellipse cx="1120" cy="580.5" rx="6" ry="2" fill="none" stroke="#000" stroke-width="0.7" transform="rotate(-25 1120 580.5)" />
<polygon points="1174.82,761.617 1267,718.196 1267,723.54 1185.5,761.617" fill="#ad9895" stroke="#000" stroke-width="1" />
<polyline points="1185.5,758.945 1265.66,721.536" fill="none" stroke="#000" stroke-width="1.4" stroke-dasharray="5 2"/>
<polygon points="1122.04,748.257 1131.4,742.912 1144.09,750.261 1144.09,760.013 1140.08,760.013" fill="#ad9895" stroke="#000" stroke-width="1" />
<polygon points="1178.82,740.24 1267,692.812 1267,705.504 1178.82,753.601" fill="#473b3b" stroke="#000" stroke-width="1" />
<polygon points="1178.82,740.24 1267,692.812 1267,695.484 1178.82,743.58" fill="#958180" stroke="#000" stroke-width="1" />
<polyline points="1178.82,748.257 1267,701.496" fill="none" stroke="#8d8d98" stroke-width="2" />
<polygon points="1172.81,712.184 1216.23,692.144 1220.91,694.816 1220.91,702.832 1178.82,724.208" fill="#958180" stroke="#000" stroke-width="1" />
<polygon points="1185.5,719.532 1217.57,703.5 1217.57,713.52 1186.84,733.56" fill="#473b3b" stroke="#000" stroke-width="1" />
<polygon points="1173.48,713.52 1180.16,716.86 1180.16,734.896 1174.82,733.56" fill="#ad9895" stroke="#000" stroke-width="1" />
<polygon points="1172.81,712.184 1214.9,691.476 1218.24,693.48 1176.82,714.188" fill="#ad9895" stroke="#000" stroke-width="1" />
<polyline points="1178.16,711.516 1213.56,693.48" fill="none" stroke="#151515" stroke-width="3" />
<polyline points="1178.16,711.516 1213.56,693.48" fill="none" stroke="#ecebf2" stroke-width="1.6" stroke-dasharray="6 3.5"/>
<polygon points="1217.57,694.816 1222.91,697.488 1222.91,713.52 1217.57,712.184" fill="#ad9895" stroke="#000" stroke-width="1" />
<polygon points="1224.25,697.488 1254.98,682.124 1254.98,689.472 1224.25,705.504" fill="#473b3b" stroke="#000" stroke-width="1" />
<polygon points="1254.98,677.448 1262.32,674.776 1262.32,689.472 1254.98,692.144" fill="#ad9895" stroke="#000" stroke-width="1" />
<polygon points="1221.58,689.472 1267,665.424 1267,672.104 1222.91,695.484" fill="#958180" stroke="#000" stroke-width="1" />
<polygon points="1140.08,694.816 1182.83,673.44 1217.57,689.472 1174.82,712.184" fill="#473b3b" stroke="#000" stroke-width="1" />
<polygon points="1138.74,696.152 1153.44,702.832 1162.79,706.84 1162.79,721.536 1156.11,726.88 1138.74,702.832" fill="#ad9895" stroke="#000" stroke-width="1" />
<polygon points="1138.08,689.472 1174.82,669.432 1180.16,672.104 1142.75,692.812" fill="#ad9895" stroke="#000" stroke-width="1" />
<polyline points="1142.75,688.804 1174.82,671.436" fill="none" stroke="#151515" stroke-width="3" />
<polyline points="1142.75,688.804 1174.82,671.436" fill="none" stroke="#ecebf2" stroke-width="1.6" stroke-dasharray="6 3.5"/>
<linearGradient id="g636" gradientUnits="userSpaceOnUse" x1="1147.16" y1="682.397" x2="1142.36" y2="672.499"><stop offset="0" stop-color="#9a9aa8"/><stop offset=".45" stop-color="#e4e4ee"/><stop offset=".8" stop-color="#fff"/><stop offset="1" stop-color="#e4e4ee"/></linearGradient>
<polygon points="1147.16,682.397 1169.2,671.709 1164.4,661.811 1142.36,672.499" fill="url(#g636)" stroke="#000" stroke-width="1" shape-rendering="auto"/>
<ellipse cx="1166.8" cy="666.76" rx="3.41" ry="5.5" fill="#dcdce8" stroke="#000" stroke-width="1" transform="rotate(-25.86635679409446 1166.8 666.76)" shape-rendering="auto"/>
<linearGradient id="g639" gradientUnits="userSpaceOnUse" x1="1162.36" y1="705.848" x2="1159.22" y2="699.817"><stop offset="0" stop-color="#9a9aa8"/><stop offset=".45" stop-color="#e4e4ee"/><stop offset=".8" stop-color="#fff"/><stop offset="1" stop-color="#e4e4ee"/></linearGradient>
<polygon points="1162.36,705.848 1197.76,687.411 1194.62,681.38 1159.22,699.817" fill="url(#g639)" stroke="#000" stroke-width="1" shape-rendering="auto"/>
<ellipse cx="1196.19" cy="684.395" rx="2.108" ry="3.4" fill="#c8c8d4" stroke="#000" stroke-width="1" transform="rotate(-27.508459285605394 1196.19 684.395)" shape-rendering="auto"/>
<ellipse cx="1196.46" cy="685.464" rx="4" ry="6.5" fill="#d0d0dc" stroke="#000" stroke-width="0.7" transform="rotate(-28 1196.46 685.464)" shape-rendering="auto"/>
<polygon points="1102.67,653.4 1144.09,664.088 1145.42,676.112 1133.4,689.472 1102.67,672.104" fill="#958180" stroke="#000" stroke-width="1" />
<polygon points="1133.4,670.768 1145.42,664.088 1145.42,676.112 1133.4,689.472" fill="#473b3b" stroke="#000" stroke-width="1" />
<polygon points="1140.08,634.696 1153.44,628.016 1164.13,633.36 1164.13,653.4 1156.11,657.408" fill="#958180" stroke="#000" stroke-width="1" />
<polygon points="1108.02,650.728 1116.03,646.72 1145.42,662.752 1137.41,666.76" fill="#ad9895" stroke="#000" stroke-width="1" />
<polyline points="1114.03,650.06 1140.08,663.42" fill="none" stroke="#151515" stroke-width="3" />
<polyline points="1114.03,650.06 1140.08,663.42" fill="none" stroke="#ecebf2" stroke-width="1.6" stroke-dasharray="6 3.5"/>
<linearGradient id="g649" gradientUnits="userSpaceOnUse" x1="1129.85" y1="646.406" x2="1132.95" y2="640.354"><stop offset="0" stop-color="#9a9aa8"/><stop offset=".45" stop-color="#e4e4ee"/><stop offset=".8" stop-color="#fff"/><stop offset="1" stop-color="#e4e4ee"/></linearGradient>
<polygon points="1129.85,646.406 1157.23,660.434 1160.33,654.382 1132.95,640.354" fill="url(#g649)" stroke="#000" stroke-width="1" shape-rendering="auto"/>
<ellipse cx="1158.78" cy="657.408" rx="2.108" ry="3.4" fill="#c8c8d4" stroke="#000" stroke-width="1" transform="rotate(27.12130340415871 1158.78 657.408)" shape-rendering="auto"/>
<ellipse cx="1130.46" cy="644.048" rx="4" ry="7" fill="#d0d0dc" stroke="#000" stroke-width="0.7" transform="rotate(25 1130.46 644.048)" shape-rendering="auto"/>
<polygon points="1116.7,706.84 1138.08,718.196 1138.08,745.585 1116.7,734.896" fill="#b9b9ca" stroke="#000" stroke-width="1" />
<polygon points="1116.7,706.84 1132.06,699.092 1152.77,709.245 1138.08,718.196" fill="#c6c6d6" stroke="#000" stroke-width="1" />
<polygon points="1138.08,718.196 1152.77,709.245 1152.77,727.548 1138.08,745.585" fill="#54555f" stroke="#000" stroke-width="1" />
<polygon points="1152.1,705.504 1158.78,702.164 1162.79,706.84 1162.79,725.544 1153.44,730.888" fill="#ad9895" stroke="#000" stroke-width="1" />
<polygon points="1140.08,733.56 1144.76,730.888 1145.42,752.265 1140.75,753.601" fill="#24242a" stroke="#000" stroke-width="1" />
<linearGradient id="g658" gradientUnits="userSpaceOnUse" x1="1141.36" y1="750.047" x2="1149.49" y2="731.77"><stop offset="0" stop-color="#9a9aa8"/><stop offset=".45" stop-color="#e4e4ee"/><stop offset=".8" stop-color="#fff"/><stop offset="1" stop-color="#e4e4ee"/></linearGradient>
<polygon points="1141.36,750.047 1165.41,760.735 1173.53,742.458 1149.49,731.77" fill="url(#g658)" stroke="#000" stroke-width="1" shape-rendering="auto"/>
<ellipse cx="1169.47" cy="751.597" rx="6.2" ry="10" fill="#555a64" stroke="#000" stroke-width="1" transform="rotate(23.962488974577983 1169.47 751.597)" shape-rendering="auto"/>
<polygon points="1364,339.079 1512,414.115 1512,432.115 1364,357.079" fill="#ad9895" stroke="#000" stroke-width="1" />
<polygon points="1365,357.586 1512,432.115 1512,447.115 1365,372.586" fill="#958180" stroke="#000" stroke-width="1" />
<polygon points="1362,371.065 1512,447.115 1512,459.115 1362,383.065" fill="#ad9895" stroke="#000" stroke-width="1" />
<polygon points="1365,384.586 1512,459.115 1512,474.115 1365,399.586" fill="#958180" stroke="#000" stroke-width="1" />
<polygon points="1362,398.065 1512,474.115 1512,484.115 1362,408.065" fill="#ad9895" stroke="#000" stroke-width="1" />
<polygon points="1362,347 1367,340.6 1512,414 1512,418 1365,344" fill="#ad9895" stroke="#000" stroke-width="1" />
<polygon points="1364,346.579 1512,421.615 1512,421.715 1364,346.679" fill="#ad9895" stroke="#000" stroke-width="1" />
<ellipse cx="1382" cy="376" rx="1" ry="1" fill="#000" stroke="#000" stroke-width="0" />
<ellipse cx="1382" cy="395" rx="1" ry="1" fill="#000" stroke="#000" stroke-width="0" />
<ellipse cx="1374" cy="367" rx="2" ry="2.6" fill="none" stroke="#000" stroke-width="0.7" stroke-dasharray="1 1"/>
<ellipse cx="1374" cy="394" rx="2" ry="2.6" fill="none" stroke="#000" stroke-width="0.7" stroke-dasharray="1 1"/>
<ellipse cx="1418" cy="394.5" rx="1" ry="1" fill="#000" stroke="#000" stroke-width="0" />
<ellipse cx="1418" cy="413.5" rx="1" ry="1" fill="#000" stroke="#000" stroke-width="0" />
<ellipse cx="1410" cy="385.5" rx="2" ry="2.6" fill="none" stroke="#000" stroke-width="0.7" stroke-dasharray="1 1"/>
<ellipse cx="1410" cy="412.5" rx="2" ry="2.6" fill="none" stroke="#000" stroke-width="0.7" stroke-dasharray="1 1"/>
<ellipse cx="1454" cy="413" rx="1" ry="1" fill="#000" stroke="#000" stroke-width="0" />
<ellipse cx="1454" cy="432" rx="1" ry="1" fill="#000" stroke="#000" stroke-width="0" />
<ellipse cx="1446" cy="404" rx="2" ry="2.6" fill="none" stroke="#000" stroke-width="0.7" stroke-dasharray="1 1"/>
<ellipse cx="1446" cy="431" rx="2" ry="2.6" fill="none" stroke="#000" stroke-width="0.7" stroke-dasharray="1 1"/>
<polygon points="1451,384 1511,415 1510,422 1452,389" fill="#ad9895" stroke="#000" stroke-width="1" />
<polygon points="1451,383 1466,376 1475,394" fill="#473b3b" stroke="#000" stroke-width="1" />
<polygon points="1497,415 1511,421 1511,500 1497,490" fill="#8c7977" stroke="#000" stroke-width="1" />
<polygon points="1500,428 1508,432 1508,442 1500,438" fill="#d9d9e6" stroke="#000" stroke-width="0.6" />
<polygon points="1502,431 1506,433 1506,439 1502,437" fill="#222" stroke="#000" stroke-width="0" />
<polygon points="1500,448 1508,452 1508,462 1500,458" fill="#d9d9e6" stroke="#000" stroke-width="0.6" />
<polygon points="1502,451 1506,453 1506,459 1502,457" fill="#222" stroke="#000" stroke-width="0" />
<polygon points="1500,470 1508,474 1508,484 1500,480" fill="#d9d9e6" stroke="#000" stroke-width="0.6" />
<polygon points="1502,473 1506,475 1506,481 1502,479" fill="#222" stroke="#000" stroke-width="0" />
<polygon points="1511,416 1522.5,409 1537.5,442 1537.5,508 1511,508" fill="#473b3b" stroke="#000" stroke-width="1" />
<polygon points="1418,498 1460,470 1462,530 1420,533" fill="#ad9895" stroke="#000" stroke-width="1" />
<polygon points="1420,510 1461,486 1461,494 1428,515" fill="#473b3b" stroke="#000" stroke-width="1" />
<polygon points="1424,514 1460,498 1460,506 1440,513" fill="#d9d9e6" stroke="#000" stroke-width="0.6" />
<polygon points="1497,470 1511,465 1511,509 1497,513" fill="#958180" stroke="#000" stroke-width="1" />
<polygon points="1497,509 1540,505 1540,522 1497,526" fill="#ad9895" stroke="#000" stroke-width="1" />
<polygon points="1384.25,431 1408,428.5 1408,452 1386,453" fill="#9e8a87" stroke="#000" stroke-width="1" />
<polygon points="1389,433.5 1404.5,432 1404.5,451 1389,452.5" fill="#7b6b68" stroke="#000" stroke-width="1" />
<polygon points="1393,446 1401,445 1401,450 1393,451" fill="#d8d8e2" stroke="#000" stroke-width="1" />
<polygon points="1393,448.5 1399,448 1399,450.2 1393,450.8" fill="#1c1a1c" stroke="#000" stroke-width="0" />
<polygon points="1386,453 1415.5,451 1418,529 1388.5,532" fill="#9e8a87" stroke="#000" stroke-width="1" />
<polygon points="1388.5,455.8 1412.5,454 1414.5,514 1392,517" fill="#7b6b68" stroke="#000" stroke-width="1" />
<polygon points="1392,517 1414.5,514 1416.5,526.5 1390.5,529.5" fill="#a4918d" stroke="#000" stroke-width="1" />
<polyline points="1388.5,455.8 1392,517" fill="none" stroke="#000" stroke-width="1" />
<ellipse cx="1394" cy="525" rx="0.9" ry="0.9" fill="#000" stroke="#000" stroke-width="0" />
<ellipse cx="1412" cy="522" rx="0.9" ry="0.9" fill="#000" stroke="#000" stroke-width="0" />
<ellipse cx="1411" cy="517" rx="0.9" ry="0.9" fill="#000" stroke="#000" stroke-width="0" />
<ellipse cx="1395" cy="520" rx="0.9" ry="0.9" fill="#000" stroke="#000" stroke-width="0" />
<g shape-rendering="auto">
<ellipse cx="1399.5" cy="465.5" rx="6.5" ry="5.5" fill="#8b8a42" stroke="#000" stroke-width="0.7" />
<polygon points="1395,467 1404,466 1407,479 1398,480.5" fill="#d9bab2" stroke="#000" stroke-width="0.7" />
<ellipse cx="1402.5" cy="479.5" rx="4.6" ry="3.6" fill="#7a625c" stroke="#000" stroke-width="0.7" />
<polygon points="1394,483 1403,482 1403,489 1394,490" fill="#1e1e22" stroke="#000" stroke-width="0.5" />
<polygon points="1396,484 1405,483 1408,496 1399,497.5" fill="#e6e6f2" stroke="#000" stroke-width="0.7" />
<polygon points="1400,496 1411,495 1411,506 1400,507.5" fill="#9b9ba6" stroke="#000" stroke-width="0.7" />
<polygon points="1400,507.5 1411,506 1411,509 1400,510.5" fill="#6c6c76" stroke="#000" stroke-width="0.5" />
<ellipse cx="1395" cy="505" rx="2.5" ry="5" fill="#8b8a42" stroke="#000" stroke-width="0.5" transform="rotate(15 1395 505)" />
<polygon points="1398,508 1406,507 1408,519 1400,520.5" fill="#d9bab2" stroke="#000" stroke-width="0.7" />
<ellipse cx="1403.5" cy="520" rx="4.6" ry="3.8" fill="#7a625c" stroke="#000" stroke-width="0.7" />
</g>
<polygon points="1460.25,425.5 1484,423 1484,446.5 1462,447.5" fill="#9e8a87" stroke="#000" stroke-width="1" />
<polygon points="1465,428 1480.5,426.5 1480.5,445.5 1465,447" fill="#7b6b68" stroke="#000" stroke-width="1" />
<polygon points="1469,440.5 1477,439.5 1477,444.5 1469,445.5" fill="#d8d8e2" stroke="#000" stroke-width="1" />
<polygon points="1469,443 1475,442.5 1475,444.7 1469,445.3" fill="#1c1a1c" stroke="#000" stroke-width="0" />
<polygon points="1462,447.5 1491.5,445.5 1494,523.5 1464.5,526.5" fill="#9e8a87" stroke="#000" stroke-width="1" />
<polygon points="1464.5,450.3 1488.5,448.5 1490.5,508.5 1468,511.5" fill="#7b6b68" stroke="#000" stroke-width="1" />
<polygon points="1468,511.5 1490.5,508.5 1492.5,521 1466.5,524" fill="#a4918d" stroke="#000" stroke-width="1" />
<polyline points="1464.5,450.3 1468,511.5" fill="none" stroke="#000" stroke-width="1" />
<ellipse cx="1470" cy="519.5" rx="0.9" ry="0.9" fill="#000" stroke="#000" stroke-width="0" />
<ellipse cx="1488" cy="516.5" rx="0.9" ry="0.9" fill="#000" stroke="#000" stroke-width="0" />
<ellipse cx="1487" cy="511.5" rx="0.9" ry="0.9" fill="#000" stroke="#000" stroke-width="0" />
<ellipse cx="1471" cy="514.5" rx="0.9" ry="0.9" fill="#000" stroke="#000" stroke-width="0" />
<g shape-rendering="auto">
<ellipse cx="1475.5" cy="460" rx="6.5" ry="5.5" fill="#8b8a42" stroke="#000" stroke-width="0.7" />
<polygon points="1471,461.5 1480,460.5 1483,473.5 1474,475" fill="#d9bab2" stroke="#000" stroke-width="0.7" />
<ellipse cx="1478.5" cy="474" rx="4.6" ry="3.6" fill="#7a625c" stroke="#000" stroke-width="0.7" />
<polygon points="1470,477.5 1479,476.5 1479,483.5 1470,484.5" fill="#1e1e22" stroke="#000" stroke-width="0.5" />
<polygon points="1472,478.5 1481,477.5 1484,490.5 1475,492" fill="#e6e6f2" stroke="#000" stroke-width="0.7" />
<polygon points="1476,490.5 1487,489.5 1487,500.5 1476,502" fill="#9b9ba6" stroke="#000" stroke-width="0.7" />
<polygon points="1476,502 1487,500.5 1487,503.5 1476,505" fill="#6c6c76" stroke="#000" stroke-width="0.5" />
<ellipse cx="1471" cy="499.5" rx="2.5" ry="5" fill="#8b8a42" stroke="#000" stroke-width="0.5" transform="rotate(15 1471 499.5)" />
<polygon points="1474,502.5 1482,501.5 1484,513.5 1476,515" fill="#d9bab2" stroke="#000" stroke-width="0.7" />
<ellipse cx="1479.5" cy="514.5" rx="4.6" ry="3.8" fill="#7a625c" stroke="#000" stroke-width="0.7" />
</g>
<polygon points="1537.25,420 1561,417.5 1561,441 1539,442" fill="#9e8a87" stroke="#000" stroke-width="1" />
<polygon points="1542,422.5 1557.5,421 1557.5,440 1542,441.5" fill="#7b6b68" stroke="#000" stroke-width="1" />
<polygon points="1546,435 1554,434 1554,439 1546,440" fill="#d8d8e2" stroke="#000" stroke-width="1" />
<polygon points="1546,437.5 1552,437 1552,439.2 1546,439.8" fill="#1c1a1c" stroke="#000" stroke-width="0" />
<polygon points="1539,442 1568.5,440 1571,518 1541.5,521" fill="#9e8a87" stroke="#000" stroke-width="1" />
<polygon points="1541.5,444.8 1565.5,443 1567.5,503 1545,506" fill="#7b6b68" stroke="#000" stroke-width="1" />
<polygon points="1545,506 1567.5,503 1569.5,515.5 1543.5,518.5" fill="#a4918d" stroke="#000" stroke-width="1" />
<polyline points="1541.5,444.8 1545,506" fill="none" stroke="#000" stroke-width="1" />
<ellipse cx="1547" cy="514" rx="0.9" ry="0.9" fill="#000" stroke="#000" stroke-width="0" />
<ellipse cx="1565" cy="511" rx="0.9" ry="0.9" fill="#000" stroke="#000" stroke-width="0" />
<ellipse cx="1564" cy="506" rx="0.9" ry="0.9" fill="#000" stroke="#000" stroke-width="0" />
<ellipse cx="1548" cy="509" rx="0.9" ry="0.9" fill="#000" stroke="#000" stroke-width="0" />
<g shape-rendering="auto">
<ellipse cx="1552.5" cy="454.5" rx="6.5" ry="5.5" fill="#8b8a42" stroke="#000" stroke-width="0.7" />
<polygon points="1548,456 1557,455 1560,468 1551,469.5" fill="#d9bab2" stroke="#000" stroke-width="0.7" />
<ellipse cx="1555.5" cy="468.5" rx="4.6" ry="3.6" fill="#7a625c" stroke="#000" stroke-width="0.7" />
<polygon points="1547,472 1556,471 1556,478 1547,479" fill="#1e1e22" stroke="#000" stroke-width="0.5" />
<polygon points="1549,473 1558,472 1561,485 1552,486.5" fill="#e6e6f2" stroke="#000" stroke-width="0.7" />
<polygon points="1553,485 1564,484 1564,495 1553,496.5" fill="#9b9ba6" stroke="#000" stroke-width="0.7" />
<polygon points="1553,496.5 1564,495 1564,498 1553,499.5" fill="#6c6c76" stroke="#000" stroke-width="0.5" />
<ellipse cx="1548" cy="494" rx="2.5" ry="5" fill="#8b8a42" stroke="#000" stroke-width="0.5" transform="rotate(15 1548 494)" />
<polygon points="1551,497 1559,496 1561,508 1553,509.5" fill="#d9bab2" stroke="#000" stroke-width="0.7" />
<ellipse cx="1556.5" cy="509" rx="4.6" ry="3.8" fill="#7a625c" stroke="#000" stroke-width="0.7" />
</g>
<polygon points="1574,470 1598,478 1602,490 1580,497" fill="#ad9895" stroke="#000" stroke-width="1" />
<polygon points="1570,444 1590,455 1590,480 1572,470" fill="#b9b9ca" stroke="#000" stroke-width="1" />
<polygon points="1570,444 1582,434 1600,446 1590,455" fill="#c6c6d6" stroke="#000" stroke-width="1" />
<polygon points="1590,455 1600,446 1600,470 1590,480" fill="#4c4d56" stroke="#000" stroke-width="1" />
<polygon points="1592,452 1600,448 1600,476 1592,480" fill="#2c2c30" stroke="#000" stroke-width="1" />
<linearGradient id="g772" gradientUnits="userSpaceOnUse" x1="1594.36" y1="468.312" x2="1601.64" y2="449.688"><stop offset="0" stop-color="#9a9aa8"/><stop offset=".45" stop-color="#e4e4ee"/><stop offset=".8" stop-color="#fff"/><stop offset="1" stop-color="#e4e4ee"/></linearGradient>
<polygon points="1594.36,468.312 1617.36,477.312 1624.64,458.688 1601.64,449.688" fill="url(#g772)" stroke="#000" stroke-width="1" shape-rendering="auto"/>
<ellipse cx="1621" cy="468" rx="6.2" ry="10" fill="#555a64" stroke="#000" stroke-width="1" transform="rotate(21.370622269343183 1621 468)" shape-rendering="auto"/>
<polygon points="1238,511 1330,472 1330,484 1249,522" fill="#958180" stroke="#000" stroke-width="1" />
<polygon points="1249,522 1318,493 1318,516 1278,537" fill="#473b3b" stroke="#000" stroke-width="1" />
<polyline points="1262,523 1318,499" fill="none" stroke="#000" stroke-width="1" />
<polygon points="1292,509 1303,505 1308,509 1297,514" fill="#d4d4e2" stroke="#000" stroke-width="0.7" />
<polygon points="1297,514 1303,511 1303,522 1297,524" fill="#777783" stroke="#000" stroke-width="0.6" />
<polygon points="1183.75,485 1311.25,548.75 1311.25,570 1268.75,558 1210,523.75 1183.75,547.5" fill="#958180" stroke="#000" stroke-width="1" />
<polyline points="1183.75,487.5 1311.25,551.25" fill="none" stroke="#000" stroke-width="1" />
<ellipse cx="1192.5" cy="511.25" rx="0.6" ry="0.6" fill="#000" stroke="#000" stroke-width="0" />
<ellipse cx="1192.5" cy="515" rx="0.6" ry="0.6" fill="#000" stroke="#000" stroke-width="0" />
<ellipse cx="1196.25" cy="517.5" rx="0.6" ry="0.6" fill="#000" stroke="#000" stroke-width="0" />
<ellipse cx="1200" cy="521.25" rx="0.6" ry="0.6" fill="#000" stroke="#000" stroke-width="0" />
<ellipse cx="1192.5" cy="530" rx="0.6" ry="0.6" fill="#000" stroke="#000" stroke-width="0" />
<polygon points="1271.25,560 1308.75,580 1308.75,620 1271.25,600" fill="#8c7977" stroke="#000" stroke-width="1" />
<polygon points="1271.25,562.5 1307.5,582.5 1307.5,587.5 1271.25,567.5" fill="#473b3b" stroke="#000" stroke-width="1" />
<polyline points="1273.75,566.25 1306.25,583.75" fill="none" stroke="#e8e8f2" stroke-width="2" stroke-dasharray="6 3"/>
<polygon points="1271.25,592.5 1307.5,612.5 1307.5,617.5 1271.25,597.5" fill="#473b3b" stroke="#000" stroke-width="1" />
<polyline points="1273.75,596.25 1306.25,613.75" fill="none" stroke="#e8e8f2" stroke-width="2" stroke-dasharray="6 3"/>
<polygon points="1265,670 1291.25,660 1291.25,665 1268.75,675" fill="#ad9895" stroke="#000" stroke-width="1" />
<polygon points="1268.75,655 1291.25,663.75 1268.75,675" fill="#ad9895" stroke="#000" stroke-width="1" />
<polygon points="1271.25,610 1282.5,616.25 1275,640 1271.25,650" fill="#473b3b" stroke="#000" stroke-width="1" />
<polygon points="1208.75,523.75 1268.75,557.5 1268.75,666.25 1208.75,635" fill="#958180" stroke="#000" stroke-width="1" />
<ellipse cx="1213.75" cy="537.5" rx="0.6" ry="0.6" fill="#000" stroke="#000" stroke-width="0" />
<ellipse cx="1220" cy="540" rx="0.6" ry="0.6" fill="#000" stroke="#000" stroke-width="0" />
<ellipse cx="1213.75" cy="543.75" rx="0.6" ry="0.6" fill="#000" stroke="#000" stroke-width="0" />
<ellipse cx="1220" cy="546.25" rx="0.6" ry="0.6" fill="#000" stroke="#000" stroke-width="0" />
<ellipse cx="1213.75" cy="550" rx="0.6" ry="0.6" fill="#000" stroke="#000" stroke-width="0" />
<ellipse cx="1220" cy="552.5" rx="0.6" ry="0.6" fill="#000" stroke="#000" stroke-width="0" />
<ellipse cx="1213.75" cy="556.25" rx="0.6" ry="0.6" fill="#000" stroke="#000" stroke-width="0" />
<ellipse cx="1220" cy="558.75" rx="0.6" ry="0.6" fill="#000" stroke="#000" stroke-width="0" />
<ellipse cx="1213.75" cy="562.5" rx="0.6" ry="0.6" fill="#000" stroke="#000" stroke-width="0" />
<ellipse cx="1220" cy="565" rx="0.6" ry="0.6" fill="#000" stroke="#000" stroke-width="0" />
<ellipse cx="1213.75" cy="568.75" rx="0.6" ry="0.6" fill="#000" stroke="#000" stroke-width="0" />
<ellipse cx="1220" cy="571.25" rx="0.6" ry="0.6" fill="#000" stroke="#000" stroke-width="0" />
<ellipse cx="1213.75" cy="575" rx="0.6" ry="0.6" fill="#000" stroke="#000" stroke-width="0" />
<ellipse cx="1220" cy="577.5" rx="0.6" ry="0.6" fill="#000" stroke="#000" stroke-width="0" />
<ellipse cx="1213.75" cy="581.25" rx="0.6" ry="0.6" fill="#000" stroke="#000" stroke-width="0" />
<ellipse cx="1220" cy="583.75" rx="0.6" ry="0.6" fill="#000" stroke="#000" stroke-width="0" />
<polygon points="1165,656.25 1208.75,635 1268.75,666.25 1220,686.25" fill="#ad9895" stroke="#000" stroke-width="1" />
<ellipse cx="1205.34" cy="667.52" rx="0.6" ry="0.6" fill="#000" stroke="#000" stroke-width="0" />
<ellipse cx="1214.4" cy="666.506" rx="0.6" ry="0.6" fill="#000" stroke="#000" stroke-width="0" />
<ellipse cx="1195.98" cy="644.919" rx="0.6" ry="0.6" fill="#000" stroke="#000" stroke-width="0" />
<ellipse cx="1211.64" cy="681.094" rx="0.6" ry="0.6" fill="#000" stroke="#000" stroke-width="0" />
<ellipse cx="1189.23" cy="657.769" rx="0.6" ry="0.6" fill="#000" stroke="#000" stroke-width="0" />
<ellipse cx="1234.42" cy="649.2" rx="0.6" ry="0.6" fill="#000" stroke="#000" stroke-width="0" />
<ellipse cx="1227.79" cy="652.766" rx="0.6" ry="0.6" fill="#000" stroke="#000" stroke-width="0" />
<ellipse cx="1201.24" cy="647.188" rx="0.6" ry="0.6" fill="#000" stroke="#000" stroke-width="0" />
<ellipse cx="1240.52" cy="668.801" rx="0.6" ry="0.6" fill="#000" stroke="#000" stroke-width="0" />
<ellipse cx="1228.66" cy="667.37" rx="0.6" ry="0.6" fill="#000" stroke="#000" stroke-width="0" />
<ellipse cx="1197.9" cy="643.903" rx="0.6" ry="0.6" fill="#000" stroke="#000" stroke-width="0" />
<ellipse cx="1230.68" cy="657.871" rx="0.6" ry="0.6" fill="#000" stroke="#000" stroke-width="0" />
<ellipse cx="1179.89" cy="650.778" rx="0.6" ry="0.6" fill="#000" stroke="#000" stroke-width="0" />
<ellipse cx="1228.87" cy="652.04" rx="0.6" ry="0.6" fill="#000" stroke="#000" stroke-width="0" />
<ellipse cx="1244.78" cy="667.339" rx="0.6" ry="0.6" fill="#000" stroke="#000" stroke-width="0" />
<ellipse cx="1246.9" cy="668.708" rx="0.6" ry="0.6" fill="#000" stroke="#000" stroke-width="0" />
<ellipse cx="1226.33" cy="671.884" rx="0.6" ry="0.6" fill="#000" stroke="#000" stroke-width="0" />
<ellipse cx="1235.91" cy="674.869" rx="0.6" ry="0.6" fill="#000" stroke="#000" stroke-width="0" />
<ellipse cx="1208.81" cy="640.498" rx="0.6" ry="0.6" fill="#000" stroke="#000" stroke-width="0" />
<ellipse cx="1182.88" cy="659.87" rx="0.6" ry="0.6" fill="#000" stroke="#000" stroke-width="0" />
<ellipse cx="1231.23" cy="648.818" rx="0.6" ry="0.6" fill="#000" stroke="#000" stroke-width="0" />
<ellipse cx="1208.97" cy="651.965" rx="0.6" ry="0.6" fill="#000" stroke="#000" stroke-width="0" />
<ellipse cx="1208.41" cy="657.047" rx="0.6" ry="0.6" fill="#000" stroke="#000" stroke-width="0" />
<ellipse cx="1212.53" cy="666.345" rx="0.6" ry="0.6" fill="#000" stroke="#000" stroke-width="0" />
<ellipse cx="1240.29" cy="670.961" rx="0.6" ry="0.6" fill="#000" stroke="#000" stroke-width="0" />
<ellipse cx="1245.93" cy="669.626" rx="0.6" ry="0.6" fill="#000" stroke="#000" stroke-width="0" />
<path d="M1208.75 523.75L1198.75 533.75Q1185 582.5 1165 647.5L1165 656.25L1208.75 635Z" fill="#473b3b" stroke="#000"/>
<polygon points="1183.75,636.25 1193.75,630.5 1193.75,636.25 1183.75,642" fill="#958180" stroke="#000" stroke-width="1" />
<path d="M1268.75 558L1252.5 562.5Q1240 620 1220 680L1220 687L1268.75 666.25Z" fill="#473b3b" stroke="#000"/>
<polygon points="1238.75,667 1250,661.25 1250,667.5 1238.75,673.25" fill="#958180" stroke="#000" stroke-width="1" />
<polyline points="1271.25,558.75 1271.25,667.5" fill="none" stroke="#000" stroke-width="1" />
<polygon points="1325,640 1397.5,660 1575,748 1570,826.5 1325,681" fill="#958180" stroke="#000" stroke-width="1" />
<polyline points="1303,673 1283,684 1281,688 1562.5,854 1600,832" fill="none" stroke="#000" stroke-width="1" />
<polyline points="1284,690 1562.5,857.5" fill="none" stroke="#000" stroke-width="1.6" stroke-dasharray="1.5 1.5"/>
<ellipse cx="1290" cy="693" rx="1.2" ry="1.2" fill="#000" stroke="#000" stroke-width="0" />
<ellipse cx="1321" cy="711.4" rx="1.2" ry="1.2" fill="#000" stroke="#000" stroke-width="0" />
<ellipse cx="1352" cy="729.8" rx="1.2" ry="1.2" fill="#000" stroke="#000" stroke-width="0" />
<ellipse cx="1383" cy="748.2" rx="1.2" ry="1.2" fill="#000" stroke="#000" stroke-width="0" />
<ellipse cx="1414" cy="766.6" rx="1.2" ry="1.2" fill="#000" stroke="#000" stroke-width="0" />
<ellipse cx="1445" cy="785" rx="1.2" ry="1.2" fill="#000" stroke="#000" stroke-width="0" />
<ellipse cx="1476" cy="803.4" rx="1.2" ry="1.2" fill="#000" stroke="#000" stroke-width="0" />
<ellipse cx="1507" cy="821.8" rx="1.2" ry="1.2" fill="#000" stroke="#000" stroke-width="0" />
<ellipse cx="1538" cy="840.2" rx="1.2" ry="1.2" fill="#000" stroke="#000" stroke-width="0" />
<polygon points="1371,661.5 1386,653 1386,718 1361,731.5" fill="#473b3b" stroke="#000" stroke-width="1" />
<polygon points="1435,678 1447.5,684 1447.5,754 1422.5,768" fill="#473b3b" stroke="#000" stroke-width="1" />
<polygon points="1495,716.5 1508.75,722.75 1508.75,790 1483.75,804" fill="#473b3b" stroke="#000" stroke-width="1" />
<polygon points="1557.5,750 1570,751.5 1570,826.5 1546,839" fill="#473b3b" stroke="#000" stroke-width="1" />
<polygon points="1335,647 1375,628 1392,637 1355,657" fill="#ad9895" stroke="#000" stroke-width="1" />
<polygon points="1335,647 1355,657 1355,668 1335,658" fill="#958180" stroke="#000" stroke-width="1" />
<polygon points="1355,657 1392,637 1397,645 1355,668" fill="#8c7977" stroke="#000" stroke-width="1" />
<polygon points="1570,751.5 1590,744 1590,829 1570,826.5" fill="#ad9895" stroke="#000" stroke-width="1" />
<polygon points="1590,744 1597,747 1597,826 1590,829" fill="#958180" stroke="#000" stroke-width="1" />
<polygon points="1590,760 1736,676 1736,700 1600,800" fill="#ad9895" stroke="#000" stroke-width="1" />
<polygon points="1597,748 1700,690 1700,700 1597,790" fill="#958180" stroke="#000" stroke-width="1" />
<polygon points="1607.5,726.5 1665,696.5 1665,709 1620,735" fill="#8f8f9c" stroke="#000" stroke-width="1" />
<polygon points="1645,700 1665,690 1665,709 1645,719" fill="#3a3a42" stroke="#000" stroke-width="1" />
<polygon points="1640,703 1645,700 1645,719 1640,722" fill="#e0e0ea" stroke="#000" stroke-width="1" />
<polygon points="1700,676 1704,674 1704,716 1700,718" fill="#8c7977" stroke="#000" stroke-width="1" />
<polyline points="1672,690 1702,708" fill="none" stroke="#000" stroke-width="1" />
<polyline points="1672,694 1700,712" fill="none" stroke="#000" stroke-width="1" />
<polygon points="1728,655 1736,651 1736,662 1728,666" fill="#ad9895" stroke="#000" stroke-width="1" />
<polygon points="1558.75,799 1736,697 1799,733.5 1626,834.5" fill="#ad9895" stroke="#000" stroke-width="1" />
<polygon points="1558.75,799 1626,834.5 1626,836.5 1558.75,801" fill="#958180" stroke="#000" stroke-width="1" />
<polygon points="1626,834.5 1799,733.5 1799,735.5 1626,836.5" fill="#473b3b" stroke="#000" stroke-width="1" />
<g fill="#222" stroke="none">
<rect x="1572.6" y="799.3" width="1" height="1"/>
<rect x="1578.9" y="795.7" width="1" height="1"/>
<rect x="1585.2" y="792.0" width="1" height="1"/>
<rect x="1591.5" y="788.4" width="1" height="1"/>
<rect x="1597.9" y="784.7" width="1" height="1"/>
<rect x="1604.2" y="781.1" width="1" height="1"/>
<rect x="1610.5" y="777.4" width="1" height="1"/>
<rect x="1616.9" y="773.8" width="1" height="1"/>
<rect x="1623.2" y="770.2" width="1" height="1"/>
<rect x="1629.5" y="766.5" width="1" height="1"/>
<rect x="1635.9" y="762.9" width="1" height="1"/>
<rect x="1642.2" y="759.2" width="1" height="1"/>
<rect x="1648.5" y="755.6" width="1" height="1"/>
<rect x="1654.8" y="751.9" width="1" height="1"/>
<rect x="1661.2" y="748.3" width="1" height="1"/>
<rect x="1667.5" y="744.7" width="1" height="1"/>
<rect x="1673.8" y="741.0" width="1" height="1"/>
<rect x="1680.2" y="737.4" width="1" height="1"/>
<rect x="1686.5" y="733.7" width="1" height="1"/>
<rect x="1692.8" y="730.1" width="1" height="1"/>
<rect x="1699.2" y="726.4" width="1" height="1"/>
<rect x="1705.5" y="722.8" width="1" height="1"/>
<rect x="1711.8" y="719.2" width="1" height="1"/>
<rect x="1718.2" y="715.5" width="1" height="1"/>
<rect x="1724.5" y="711.9" width="1" height="1"/>
<rect x="1730.8" y="708.2" width="1" height="1"/>
<rect x="1737.1" y="704.6" width="1" height="1"/>
<rect x="1580.0" y="803.2" width="1" height="1"/>
<rect x="1586.4" y="799.6" width="1" height="1"/>
<rect x="1592.7" y="796.0" width="1" height="1"/>
<rect x="1599.0" y="792.3" width="1" height="1"/>
<rect x="1605.3" y="788.7" width="1" height="1"/>
<rect x="1611.7" y="785.0" width="1" height="1"/>
<rect x="1618.0" y="781.4" width="1" height="1"/>
<rect x="1624.3" y="777.7" width="1" height="1"/>
<rect x="1630.7" y="774.1" width="1" height="1"/>
<rect x="1637.0" y="770.5" width="1" height="1"/>
<rect x="1643.3" y="766.8" width="1" height="1"/>
<rect x="1649.7" y="763.2" width="1" height="1"/>
<rect x="1656.0" y="759.5" width="1" height="1"/>
<rect x="1662.3" y="755.9" width="1" height="1"/>
<rect x="1668.6" y="752.2" width="1" height="1"/>
<rect x="1675.0" y="748.6" width="1" height="1"/>
<rect x="1681.3" y="745.0" width="1" height="1"/>
<rect x="1687.6" y="741.3" width="1" height="1"/>
<rect x="1694.0" y="737.7" width="1" height="1"/>
<rect x="1700.3" y="734.0" width="1" height="1"/>
<rect x="1706.6" y="730.4" width="1" height="1"/>
<rect x="1713.0" y="726.7" width="1" height="1"/>
<rect x="1719.3" y="723.1" width="1" height="1"/>
<rect x="1725.6" y="719.5" width="1" height="1"/>
<rect x="1732.0" y="715.8" width="1" height="1"/>
<rect x="1738.3" y="712.2" width="1" height="1"/>
<rect x="1744.6" y="708.5" width="1" height="1"/>
<rect x="1587.5" y="807.2" width="1" height="1"/>
<rect x="1593.8" y="803.5" width="1" height="1"/>
<rect x="1600.2" y="799.9" width="1" height="1"/>
<rect x="1606.5" y="796.3" width="1" height="1"/>
<rect x="1612.8" y="792.6" width="1" height="1"/>
<rect x="1619.1" y="789.0" width="1" height="1"/>
<rect x="1625.5" y="785.3" width="1" height="1"/>
<rect x="1631.8" y="781.7" width="1" height="1"/>
<rect x="1638.1" y="778.0" width="1" height="1"/>
<rect x="1644.5" y="774.4" width="1" height="1"/>
<rect x="1650.8" y="770.8" width="1" height="1"/>
<rect x="1657.1" y="767.1" width="1" height="1"/>
<rect x="1663.5" y="763.5" width="1" height="1"/>
<rect x="1669.8" y="759.8" width="1" height="1"/>
<rect x="1676.1" y="756.2" width="1" height="1"/>
<rect x="1682.5" y="752.5" width="1" height="1"/>
<rect x="1688.8" y="748.9" width="1" height="1"/>
<rect x="1695.1" y="745.3" width="1" height="1"/>
<rect x="1701.4" y="741.6" width="1" height="1"/>
<rect x="1707.8" y="738.0" width="1" height="1"/>
<rect x="1714.1" y="734.3" width="1" height="1"/>
<rect x="1720.4" y="730.7" width="1" height="1"/>
<rect x="1726.8" y="727.0" width="1" height="1"/>
<rect x="1733.1" y="723.4" width="1" height="1"/>
<rect x="1739.4" y="719.8" width="1" height="1"/>
<rect x="1745.8" y="716.1" width="1" height="1"/>
<rect x="1752.1" y="712.5" width="1" height="1"/>
<rect x="1595.0" y="811.1" width="1" height="1"/>
<rect x="1601.3" y="807.5" width="1" height="1"/>
<rect x="1607.6" y="803.8" width="1" height="1"/>
<rect x="1614.0" y="800.2" width="1" height="1"/>
<rect x="1620.3" y="796.6" width="1" height="1"/>
<rect x="1626.6" y="792.9" width="1" height="1"/>
<rect x="1633.0" y="789.3" width="1" height="1"/>
<rect x="1639.3" y="785.6" width="1" height="1"/>
<rect x="1645.6" y="782.0" width="1" height="1"/>
<rect x="1651.9" y="778.3" width="1" height="1"/>
<rect x="1658.3" y="774.7" width="1" height="1"/>
<rect x="1664.6" y="771.1" width="1" height="1"/>
<rect x="1670.9" y="767.4" width="1" height="1"/>
<rect x="1677.3" y="763.8" width="1" height="1"/>
<rect x="1683.6" y="760.1" width="1" height="1"/>
<rect x="1689.9" y="756.5" width="1" height="1"/>
<rect x="1696.3" y="752.8" width="1" height="1"/>
<rect x="1702.6" y="749.2" width="1" height="1"/>
<rect x="1708.9" y="745.6" width="1" height="1"/>
<rect x="1715.2" y="741.9" width="1" height="1"/>
<rect x="1721.6" y="738.3" width="1" height="1"/>
<rect x="1727.9" y="734.6" width="1" height="1"/>
<rect x="1734.2" y="731.0" width="1" height="1"/>
<rect x="1740.6" y="727.3" width="1" height="1"/>
<rect x="1746.9" y="723.7" width="1" height="1"/>
<rect x="1753.2" y="720.1" width="1" height="1"/>
<rect x="1759.6" y="716.4" width="1" height="1"/>
<rect x="1602.4" y="815.1" width="1" height="1"/>
<rect x="1608.8" y="811.4" width="1" height="1"/>
<rect x="1615.1" y="807.8" width="1" height="1"/>
<rect x="1621.4" y="804.2" width="1" height="1"/>
<rect x="1627.8" y="800.5" width="1" height="1"/>
<rect x="1634.1" y="796.9" width="1" height="1"/>
<rect x="1640.4" y="793.2" width="1" height="1"/>
<rect x="1646.8" y="789.6" width="1" height="1"/>
<rect x="1653.1" y="785.9" width="1" height="1"/>
<rect x="1659.4" y="782.3" width="1" height="1"/>
<rect x="1665.7" y="778.7" width="1" height="1"/>
<rect x="1672.1" y="775.0" width="1" height="1"/>
<rect x="1678.4" y="771.4" width="1" height="1"/>
<rect x="1684.7" y="767.7" width="1" height="1"/>
<rect x="1691.1" y="764.1" width="1" height="1"/>
<rect x="1697.4" y="760.4" width="1" height="1"/>
<rect x="1703.7" y="756.8" width="1" height="1"/>
<rect x="1710.1" y="753.2" width="1" height="1"/>
<rect x="1716.4" y="749.5" width="1" height="1"/>
<rect x="1722.7" y="745.9" width="1" height="1"/>
<rect x="1729.0" y="742.2" width="1" height="1"/>
<rect x="1735.4" y="738.6" width="1" height="1"/>
<rect x="1741.7" y="734.9" width="1" height="1"/>
<rect x="1748.0" y="731.3" width="1" height="1"/>
<rect x="1754.4" y="727.7" width="1" height="1"/>
<rect x="1760.7" y="724.0" width="1" height="1"/>
<rect x="1767.0" y="720.4" width="1" height="1"/>
<rect x="1609.9" y="819.0" width="1" height="1"/>
<rect x="1616.2" y="815.4" width="1" height="1"/>
<rect x="1622.6" y="811.7" width="1" height="1"/>
<rect x="1628.9" y="808.1" width="1" height="1"/>
<rect x="1635.2" y="804.5" width="1" height="1"/>
<rect x="1641.6" y="800.8" width="1" height="1"/>
<rect x="1647.9" y="797.2" width="1" height="1"/>
<rect x="1654.2" y="793.5" width="1" height="1"/>
<rect x="1660.6" y="789.9" width="1" height="1"/>
<rect x="1666.9" y="786.2" width="1" height="1"/>
<rect x="1673.2" y="782.6" width="1" height="1"/>
<rect x="1679.5" y="779.0" width="1" height="1"/>
<rect x="1685.9" y="775.3" width="1" height="1"/>
<rect x="1692.2" y="771.7" width="1" height="1"/>
<rect x="1698.5" y="768.0" width="1" height="1"/>
<rect x="1704.9" y="764.4" width="1" height="1"/>
<rect x="1711.2" y="760.7" width="1" height="1"/>
<rect x="1717.5" y="757.1" width="1" height="1"/>
<rect x="1723.9" y="753.5" width="1" height="1"/>
<rect x="1730.2" y="749.8" width="1" height="1"/>
<rect x="1736.5" y="746.2" width="1" height="1"/>
<rect x="1742.9" y="742.5" width="1" height="1"/>
<rect x="1749.2" y="738.9" width="1" height="1"/>
<rect x="1755.5" y="735.2" width="1" height="1"/>
<rect x="1761.8" y="731.6" width="1" height="1"/>
<rect x="1768.2" y="728.0" width="1" height="1"/>
<rect x="1774.5" y="724.3" width="1" height="1"/>
<rect x="1617.4" y="823.0" width="1" height="1"/>
<rect x="1623.7" y="819.3" width="1" height="1"/>
<rect x="1630.0" y="815.7" width="1" height="1"/>
<rect x="1636.4" y="812.0" width="1" height="1"/>
<rect x="1642.7" y="808.4" width="1" height="1"/>
<rect x="1649.0" y="804.8" width="1" height="1"/>
<rect x="1655.4" y="801.1" width="1" height="1"/>
<rect x="1661.7" y="797.5" width="1" height="1"/>
<rect x="1668.0" y="793.8" width="1" height="1"/>
<rect x="1674.4" y="790.2" width="1" height="1"/>
<rect x="1680.7" y="786.5" width="1" height="1"/>
<rect x="1687.0" y="782.9" width="1" height="1"/>
<rect x="1693.4" y="779.3" width="1" height="1"/>
<rect x="1699.7" y="775.6" width="1" height="1"/>
<rect x="1706.0" y="772.0" width="1" height="1"/>
<rect x="1712.3" y="768.3" width="1" height="1"/>
<rect x="1718.7" y="764.7" width="1" height="1"/>
<rect x="1725.0" y="761.0" width="1" height="1"/>
<rect x="1731.3" y="757.4" width="1" height="1"/>
<rect x="1737.7" y="753.8" width="1" height="1"/>
<rect x="1744.0" y="750.1" width="1" height="1"/>
<rect x="1750.3" y="746.5" width="1" height="1"/>
<rect x="1756.7" y="742.8" width="1" height="1"/>
<rect x="1763.0" y="739.2" width="1" height="1"/>
<rect x="1769.3" y="735.5" width="1" height="1"/>
<rect x="1775.6" y="731.9" width="1" height="1"/>
<rect x="1782.0" y="728.3" width="1" height="1"/>
<rect x="1624.9" y="826.9" width="1" height="1"/>
<rect x="1631.2" y="823.3" width="1" height="1"/>
<rect x="1637.5" y="819.6" width="1" height="1"/>
<rect x="1643.8" y="816.0" width="1" height="1"/>
<rect x="1650.2" y="812.3" width="1" height="1"/>
<rect x="1656.5" y="808.7" width="1" height="1"/>
<rect x="1662.8" y="805.1" width="1" height="1"/>
<rect x="1669.2" y="801.4" width="1" height="1"/>
<rect x="1675.5" y="797.8" width="1" height="1"/>
<rect x="1681.8" y="794.1" width="1" height="1"/>
<rect x="1688.2" y="790.5" width="1" height="1"/>
<rect x="1694.5" y="786.8" width="1" height="1"/>
<rect x="1700.8" y="783.2" width="1" height="1"/>
<rect x="1707.2" y="779.6" width="1" height="1"/>
<rect x="1713.5" y="775.9" width="1" height="1"/>
<rect x="1719.8" y="772.3" width="1" height="1"/>
<rect x="1726.1" y="768.6" width="1" height="1"/>
<rect x="1732.5" y="765.0" width="1" height="1"/>
<rect x="1738.8" y="761.3" width="1" height="1"/>
<rect x="1745.1" y="757.7" width="1" height="1"/>
<rect x="1751.5" y="754.1" width="1" height="1"/>
<rect x="1757.8" y="750.4" width="1" height="1"/>
<rect x="1764.1" y="746.8" width="1" height="1"/>
<rect x="1770.5" y="743.1" width="1" height="1"/>
<rect x="1776.8" y="739.5" width="1" height="1"/>
<rect x="1783.1" y="735.8" width="1" height="1"/>
<rect x="1789.4" y="732.2" width="1" height="1"/>
</g>
<polygon points="1391,636 1572.5,740 1575,748 1572.5,751 1397.5,664 1391,646" fill="#ad9895" stroke="#000" stroke-width="1" />
<polyline points="1391,640 1572.5,744" fill="none" stroke="#000" stroke-width="1" />
<polyline points="1392,643 1573,747.5" fill="none" stroke="#000" stroke-width="1" />
<polyline points="1395,660 1572.5,750" fill="none" stroke="#000" stroke-width="1" />
<polygon points="1572.5,740 1736,643 1736,651 1575,749" fill="#473b3b" stroke="#000" stroke-width="1" />
<polyline points="1573,744 1736,646.5" fill="none" stroke="#000" stroke-width="1" />
<polygon points="1470,708 1490,719 1490,724 1470,713" fill="#ad9895" stroke="#000" stroke-width="1" />
<polygon points="1518,736 1538,747 1538,752 1518,741" fill="#ad9895" stroke="#000" stroke-width="1" />
<polygon points="1385,534.5 1592.5,519.5 1595,527 1557.5,539.5 1572.5,547 1736,643 1572.5,740 1391,636 1368,640 1340,610" fill="#ad9895" stroke="#000" stroke-width="1" />
<polygon points="1557.5,539.5 1595,527 1595,533 1572.5,547" fill="#473b3b" stroke="#000" stroke-width="1" />
<polyline points="1557.5,539.5 1572.5,547" fill="none" stroke="#000" stroke-width="1" />
<polyline points="1572.5,547 1600,562" fill="none" stroke="#000" stroke-width="1" />
<polygon points="1630,615 1645,606.5 1660,615 1645,623.5" fill="#ad9895" stroke="#000" stroke-width="1" />
<polygon points="1630,615 1645,606.5 1645,623.5" fill="#ad9895" stroke="#000" stroke-width="1" />
<polyline points="1645,606.5 1645,618" fill="none" stroke="#000" stroke-width="1" />
<polygon points="1630,615 1645,606.5 1646.5,608 1633,616" fill="#473b3b" stroke="#000" stroke-width="0.6" />
<polygon points="1645,606.5 1660,615 1645,618" fill="#958180" stroke="#000" stroke-width="0.8" />
<polygon points="1677,643 1692,634.5 1707,643 1692,651.5" fill="#ad9895" stroke="#000" stroke-width="1" />
<polygon points="1677,643 1692,634.5 1692,651.5" fill="#ad9895" stroke="#000" stroke-width="1" />
<polyline points="1692,634.5 1692,646" fill="none" stroke="#000" stroke-width="1" />
<polygon points="1677,643 1692,634.5 1693.5,636 1680,644" fill="#473b3b" stroke="#000" stroke-width="0.6" />
<polygon points="1692,634.5 1707,643 1692,646" fill="#958180" stroke="#000" stroke-width="0.8" />
<polygon points="1507.5,685.75 1522.5,677.25 1537.5,685.75 1522.5,694.25" fill="#ad9895" stroke="#000" stroke-width="1" />
<polygon points="1507.5,685.75 1522.5,677.25 1522.5,694.25" fill="#ad9895" stroke="#000" stroke-width="1" />
<polyline points="1522.5,677.25 1522.5,688.75" fill="none" stroke="#000" stroke-width="1" />
<polygon points="1507.5,685.75 1522.5,677.25 1524,678.75 1510.5,686.75" fill="#473b3b" stroke="#000" stroke-width="0.6" />
<polygon points="1522.5,677.25 1537.5,685.75 1522.5,688.75" fill="#958180" stroke="#000" stroke-width="0.8" />
<polygon points="1555,713 1570,704.5 1585,713 1570,721.5" fill="#ad9895" stroke="#000" stroke-width="1" />
<polygon points="1555,713 1570,704.5 1570,721.5" fill="#ad9895" stroke="#000" stroke-width="1" />
<polyline points="1570,704.5 1570,716" fill="none" stroke="#000" stroke-width="1" />
<polygon points="1555,713 1570,704.5 1571.5,706 1558,714" fill="#473b3b" stroke="#000" stroke-width="0.6" />
<polygon points="1570,704.5 1585,713 1570,716" fill="#958180" stroke="#000" stroke-width="0.8" />
<polygon points="1310,640 1325,646 1325,682 1300,696" fill="#473b3b" stroke="#000" stroke-width="1" />
<polygon points="1300,600 1335,610 1335,650 1310,640" fill="#8c7977" stroke="#000" stroke-width="1" />
<polygon points="1333,462 1366,472 1384,534 1372,580 1362,622 1358,644 1311,646 1309,562 1319,520 1330,476" fill="#958180" stroke="none" stroke-width="0" />
<polygon points="1360,471 1366,472 1384,534 1378,540 1354,520 1354,486" fill="#958180" stroke="#000" stroke-width="1" />
<polygon points="1363,472 1366,472 1384,534 1381,536" fill="#ad9895" stroke="#000" stroke-width="0.7" />
<polyline points="1358,486 1376,536" fill="none" stroke="#000" stroke-width="1" />
<polygon points="1333,462 1338,463 1348,490 1348,508 1333,516 1330,476" fill="#958180" stroke="#000" stroke-width="1" />
<polygon points="1333,462 1335.5,462.5 1333,478 1335,514 1333,516 1330,476" fill="#ad9895" stroke="#000" stroke-width="0.7" />
<polygon points="1346,486 1354,488 1354,494 1346,492" fill="#ad9895" stroke="#000" stroke-width="0.7" />
<polygon points="1348,508 1354,512 1354,520 1348,516" fill="#c9c9d8" stroke="#000" stroke-width="0.6" />
<polygon points="1360,486 1367.5,486 1365,498" fill="#8b8a42" stroke="#000" stroke-width="0.6" />
<linearGradient id="g1138" gradientUnits="userSpaceOnUse" x1="1366" y1="496.7" x2="1366" y2="488.3"><stop offset="0" stop-color="#a88"/><stop offset=".45" stop-color="#d8b8b0"/><stop offset=".8" stop-color="#fff"/><stop offset="1" stop-color="#d8b8b0"/></linearGradient>
<polygon points="1366,496.7 1382,496.7 1382,488.3 1366,488.3" fill="url(#g1138)" stroke="#000" stroke-width="1" shape-rendering="auto"/>
<ellipse cx="1382" cy="492.5" rx="2.604" ry="4.2" fill="#cdb0a8" stroke="#000" stroke-width="1" shape-rendering="auto"/>
<linearGradient id="g1141" gradientUnits="userSpaceOnUse" x1="1370.51" y1="517.171" x2="1371.49" y2="508.829"><stop offset="0" stop-color="#a9aac0"/><stop offset=".45" stop-color="#e6e6f0"/><stop offset=".8" stop-color="#fff"/><stop offset="1" stop-color="#e6e6f0"/></linearGradient>
<polygon points="1370.51,517.171 1387.51,519.171 1388.49,510.829 1371.49,508.829" fill="url(#g1141)" stroke="#000" stroke-width="1" shape-rendering="auto"/>
<ellipse cx="1388" cy="515" rx="2.604" ry="4.2" fill="#c8c8d4" stroke="#000" stroke-width="1" transform="rotate(6.7098368077569335 1388 515)" shape-rendering="auto"/>
<polygon points="1387,507 1392,506 1393,523 1388,524" fill="#a9a9b8" stroke="#000" stroke-width="0.8" />
<linearGradient id="g1145" gradientUnits="userSpaceOnUse" x1="1377.6" y1="534.175" x2="1378.4" y2="527.825"><stop offset="0" stop-color="#a88"/><stop offset=".45" stop-color="#d8b8b0"/><stop offset=".8" stop-color="#fff"/><stop offset="1" stop-color="#d8b8b0"/></linearGradient>
<polygon points="1377.6,534.175 1385.6,535.175 1386.4,528.825 1378.4,527.825" fill="url(#g1145)" stroke="#000" stroke-width="1" shape-rendering="auto"/>
<ellipse cx="1386" cy="532" rx="1.984" ry="3.2" fill="#cdb0a8" stroke="#000" stroke-width="1" transform="rotate(7.125016348901798 1386 532)" shape-rendering="auto"/>
<polygon points="1347.5,515 1353.5,516 1371.5,578 1365.5,584 1341.5,564 1341.5,530" fill="#958180" stroke="#000" stroke-width="1" />
<polygon points="1350.5,516 1353.5,516 1371.5,578 1368.5,580" fill="#ad9895" stroke="#000" stroke-width="0.7" />
<polyline points="1345.5,530 1363.5,580" fill="none" stroke="#000" stroke-width="1" />
<polygon points="1320.5,506 1325.5,507 1335.5,534 1335.5,558.6 1320.5,571 1317.5,520" fill="#958180" stroke="#000" stroke-width="1" />
<polygon points="1320.5,506 1323,506.5 1320.5,522 1322.5,569 1320.5,571 1317.5,520" fill="#ad9895" stroke="#000" stroke-width="0.7" />
<polygon points="1333.5,530 1341.5,532 1341.5,538 1333.5,536" fill="#ad9895" stroke="#000" stroke-width="0.7" />
<polygon points="1335.5,552 1341.5,556 1341.5,564 1335.5,560" fill="#c9c9d8" stroke="#000" stroke-width="0.6" />
<polygon points="1347.5,530 1355,530 1352.5,542" fill="#8b8a42" stroke="#000" stroke-width="0.6" />
<linearGradient id="g1156" gradientUnits="userSpaceOnUse" x1="1353.5" y1="540.7" x2="1353.5" y2="532.3"><stop offset="0" stop-color="#a88"/><stop offset=".45" stop-color="#d8b8b0"/><stop offset=".8" stop-color="#fff"/><stop offset="1" stop-color="#d8b8b0"/></linearGradient>
<polygon points="1353.5,540.7 1369.5,540.7 1369.5,532.3 1353.5,532.3" fill="url(#g1156)" stroke="#000" stroke-width="1" shape-rendering="auto"/>
<ellipse cx="1369.5" cy="536.5" rx="2.604" ry="4.2" fill="#cdb0a8" stroke="#000" stroke-width="1" shape-rendering="auto"/>
<linearGradient id="g1159" gradientUnits="userSpaceOnUse" x1="1358.01" y1="561.171" x2="1358.99" y2="552.829"><stop offset="0" stop-color="#a9aac0"/><stop offset=".45" stop-color="#e6e6f0"/><stop offset=".8" stop-color="#fff"/><stop offset="1" stop-color="#e6e6f0"/></linearGradient>
<polygon points="1358.01,561.171 1375.01,563.171 1375.99,554.829 1358.99,552.829" fill="url(#g1159)" stroke="#000" stroke-width="1" shape-rendering="auto"/>
<ellipse cx="1375.5" cy="559" rx="2.604" ry="4.2" fill="#c8c8d4" stroke="#000" stroke-width="1" transform="rotate(6.7098368077569335 1375.5 559)" shape-rendering="auto"/>
<polygon points="1374.5,551 1379.5,550 1380.5,567 1375.5,568" fill="#a9a9b8" stroke="#000" stroke-width="0.8" />
<linearGradient id="g1163" gradientUnits="userSpaceOnUse" x1="1365.1" y1="578.175" x2="1365.9" y2="571.825"><stop offset="0" stop-color="#a88"/><stop offset=".45" stop-color="#d8b8b0"/><stop offset=".8" stop-color="#fff"/><stop offset="1" stop-color="#d8b8b0"/></linearGradient>
<polygon points="1365.1,578.175 1373.1,579.175 1373.9,572.825 1365.9,571.825" fill="url(#g1163)" stroke="#000" stroke-width="1" shape-rendering="auto"/>
<ellipse cx="1373.5" cy="576" rx="1.984" ry="3.2" fill="#cdb0a8" stroke="#000" stroke-width="1" transform="rotate(7.125016348901798 1373.5 576)" shape-rendering="auto"/>
<polygon points="1335,559 1341,560 1367,622 1358,644 1332,642 1329,574" fill="#958180" stroke="#000" stroke-width="1" />
<polygon points="1338,560 1341,560 1367,622 1364,624" fill="#ad9895" stroke="#000" stroke-width="0.7" />
<polyline points="1333,574 1351,624" fill="none" stroke="#000" stroke-width="1" />
<polygon points="1308,550 1313,551 1323,578 1323,621.2 1308,646 1305,564" fill="#958180" stroke="#000" stroke-width="1" />
<polygon points="1308,550 1310.5,550.5 1308,566 1310,644 1308,646 1305,564" fill="#ad9895" stroke="#000" stroke-width="0.7" />
<polygon points="1321,574 1329,576 1329,582 1321,580" fill="#ad9895" stroke="#000" stroke-width="0.7" />
<polygon points="1323,596 1329,600 1329,608 1323,604" fill="#c9c9d8" stroke="#000" stroke-width="0.6" />
<polygon points="1335,574 1342.5,574 1340,586" fill="#8b8a42" stroke="#000" stroke-width="0.6" />
<linearGradient id="g1174" gradientUnits="userSpaceOnUse" x1="1341" y1="584.7" x2="1341" y2="576.3"><stop offset="0" stop-color="#a88"/><stop offset=".45" stop-color="#d8b8b0"/><stop offset=".8" stop-color="#fff"/><stop offset="1" stop-color="#d8b8b0"/></linearGradient>
<polygon points="1341,584.7 1357,584.7 1357,576.3 1341,576.3" fill="url(#g1174)" stroke="#000" stroke-width="1" shape-rendering="auto"/>
<ellipse cx="1357" cy="580.5" rx="2.604" ry="4.2" fill="#cdb0a8" stroke="#000" stroke-width="1" shape-rendering="auto"/>
<linearGradient id="g1177" gradientUnits="userSpaceOnUse" x1="1345.51" y1="605.171" x2="1346.49" y2="596.829"><stop offset="0" stop-color="#a9aac0"/><stop offset=".45" stop-color="#e6e6f0"/><stop offset=".8" stop-color="#fff"/><stop offset="1" stop-color="#e6e6f0"/></linearGradient>
<polygon points="1345.51,605.171 1362.51,607.171 1363.49,598.829 1346.49,596.829" fill="url(#g1177)" stroke="#000" stroke-width="1" shape-rendering="auto"/>
<ellipse cx="1363" cy="603" rx="2.604" ry="4.2" fill="#c8c8d4" stroke="#000" stroke-width="1" transform="rotate(6.7098368077569335 1363 603)" shape-rendering="auto"/>
<polygon points="1362,595 1367,594 1368,611 1363,612" fill="#a9a9b8" stroke="#000" stroke-width="0.8" />
<linearGradient id="g1181" gradientUnits="userSpaceOnUse" x1="1352.6" y1="622.175" x2="1353.4" y2="615.825"><stop offset="0" stop-color="#a88"/><stop offset=".45" stop-color="#d8b8b0"/><stop offset=".8" stop-color="#fff"/><stop offset="1" stop-color="#d8b8b0"/></linearGradient>
<polygon points="1352.6,622.175 1360.6,623.175 1361.4,616.825 1353.4,615.825" fill="url(#g1181)" stroke="#000" stroke-width="1" shape-rendering="auto"/>
<ellipse cx="1361" cy="620" rx="1.984" ry="3.2" fill="#cdb0a8" stroke="#000" stroke-width="1" transform="rotate(7.125016348901798 1361 620)" shape-rendering="auto"/>
<polygon points="1330,640 1368,636 1368,646 1332,650" fill="#ad9895" stroke="#000" stroke-width="1" />
</svg>
<svg class="abs" style="left:0;top:0" width="1860" height="891" viewBox="60 109 1860 891" font-family="Liberation Sans, sans-serif">
<defs><linearGradient id="wm" x1="0" y1="0" x2="0" y2="1"><stop offset="0" stop-color="#f07a1a"/><stop offset=".6" stop-color="#f7a21e"/><stop offset="1" stop-color="#f9b62c"/></linearGradient></defs><g fill="url(#wm)"><rect x="892.9" y="514.3" width="3" height="23.6"/><rect x="897.5" y="509.3" width="3.4" height="28.6"/><rect x="926.4" y="509.3" width="3.2" height="28.6"/><rect x="931.3" y="514.3" width="3" height="23.6"/><path d="M891 537.500h13q4 0 6 2h9q2-2 6-2h11v2h-10q-4 0-6 1.500h-11q-2-1.500-6-1.500h-12z"/><path d="M912 511.500q-7 4-6 13q1 8 8 11q-3-5-2-11q1-7 6-10q-3-3-6-3z"/><path d="M916 512q8 2 8.500 12q0 8-8 12q4-6 3-12q-1-6-6-9z" fill="#f9b62c"/><circle cx="915" cy="524" r="2.600" fill="#fbc64a"/></g>
<text x="947" y="530" font-size="17" font-weight="bold" fill="#f39a1e" textLength="82" lengthAdjust="spacingAndGlyphs">智造资料网</text>
<text x="947" y="537.5" font-size="3.6" font-weight="bold" fill="#f39a1e" textLength="82" lengthAdjust="spacingAndGlyphs">INTELLIGENT MANUFACTURING DATA</text>
<g><polygon points="121,921 138,911 138.5,950 121,941" fill="#9aa3c0" fill-opacity=".55" stroke="#e6e6ea" stroke-width=".8"/><path d="M121 921l17 10" stroke="#e6e6ea" stroke-width=".8"/><polygon points="119.5,941.5 138,931 155.5,941.5 140,951.5" fill="#8f9a5e" fill-opacity=".8" stroke="none"/><path d="M138 931l17.5 10.5l-15 9.5" fill="none" stroke="#f4ee1a" stroke-width="1"/><path d="M138.5 931v19" stroke="#e6e6ea" stroke-width=".8"/><path d="M119.5 941V889" stroke="#14b9c4" stroke-width="2"/><polygon points="119.5,881 115.5,890 123.5,890" fill="#19d3de"/><path d="M120 941L150 923.5" stroke="#13b416" stroke-width="2.4"/><polygon points="156,920 146,920.5 150,927" fill="#13c016"/><path d="M120 942L140 952.5" stroke="#f00f0f" stroke-width="2.6"/><polygon points="145,956 135,955 139,948.5" fill="#e00b0b"/><circle cx="119.5" cy="941.5" r="3.6" fill="#6e6e72"/><circle cx="118.5" cy="940.5" r="1.5" fill="#9a9a9e"/><path d="M115 870h7l-7 9h7" fill="none" stroke="#e8e8e8" stroke-width="1"/><path d="M156 914l3.5 5v4M163 914l-3.5 5" fill="none" stroke="#f01414" stroke-width="1"/><path d="M145 955l8 9M153 955l-8 9" fill="none" stroke="#e8e8e8" stroke-width="1"/></g>
<defs><linearGradient id="garc" x1="0" y1="1" x2="1" y2="0"><stop offset="0" stop-color="#e8b03c"/><stop offset=".45" stop-color="#d8e04a"/><stop offset=".75" stop-color="#62d68a"/><stop offset="1" stop-color="#3fc8b0"/></linearGradient></defs>
<g><rect x="1820" y="864.2" width="82.500" height="39.3" rx="19.6" fill="#232a3c"/><path d="M1840 883.5h60" stroke="#343b50" stroke-width="1"/><circle cx="1813.7" cy="883" r="29.3" fill="#30374d"/><circle cx="1813.7" cy="883" r="27.6" fill="#2b3247"/><path d="M1813.7 868v30" stroke="#353d54" stroke-width="2.2"/><path d="M1789.6 891.500A25.500 25.500 0 1 0 1830.500 863.800" fill="none" stroke="url(#garc)" stroke-width="1.5"/><g fill="none" stroke="#e9ecf4" stroke-width="1.35" stroke-linecap="round"><path transform="translate(1798 873)" d="M9.5 1.300C6 0.200 1.400 2.800 0.900 10C0.700 15 3 17.400 5.800 17.400C8.800 17.400 10.400 15 10.400 12.300C10.400 9.400 8.500 7.300 5.800 7.300C3.300 7.300 1.300 9.300 0.900 12"/><path transform="translate(1823.500 891) rotate(180)" d="M9.5 1.300C6 0.200 1.400 2.800 0.900 10C0.700 15 3 17.400 5.800 17.400C8.800 17.400 10.400 15 10.400 12.300C10.400 9.400 8.500 7.300 5.800 7.300C3.300 7.300 1.300 9.300 0.900 12"/><circle cx="1826.3" cy="885.7" r="1.300" stroke-width=".8"/><circle cx="1830.6" cy="889.3" r="1.300" stroke-width=".8"/><path d="M1831.700 884.300l-6.500 6.500" stroke-width=".8"/></g><path d="M1849.4 869v6.500M1846.2 872.300l3.200-3.500l3.200 3.500" fill="none" stroke="#4ab8f0" stroke-width="1.5"/><path d="M1849.4 889.500v6.500M1846.2 892.800l3.200 3.500l3.200-3.500" fill="none" stroke="#27b43c" stroke-width="1.5"/><text x="1871.3" y="876.300" font-size="11" font-weight="bold" fill="#f4f6fb">0</text><text x="1879.600" y="876.300" font-size="8.6" fill="#dfe3ee">K/s</text><text x="1871.3" y="898.300" font-size="11" font-weight="bold" fill="#f4f6fb">0</text><text x="1879.600" y="898.300" font-size="8.6" fill="#dfe3ee">K/s</text></g>
<g><rect x="1747" y="794" width="157" height="70" rx="9" fill="#bfe3f6" fill-opacity=".85" stroke="#4aa3dc" stroke-width="1.5"/><rect x="1731" y="800" width="170" height="58" rx="8" fill="#fff" stroke="#1f8fd6" stroke-width="1.5"/><text x="1742.8" y="825.5" font-size="24" fill="#000" stroke="#000" stroke-width=".7">A</text><circle cx="1782" cy="818.500" r="8.4" fill="#000"/><circle cx="1777.600" cy="815" r="7.700" fill="#fff"/><path d="M1773 840l4-2q3 1.5 6 0l4 2l4 3l-2 3l-3-1.5v9h-12v-9l-3 1.5l-2-3z" fill="#000"/><path d="M1746.5 838q1.5 2-0.8 4.5" stroke="#000" stroke-width="1.6" fill="none"/><circle cx="1759" cy="850" r="1" fill="#000"/><path d="M1860 840Q1870 819 1890 824Q1910 830 1913 850Q1914 861 1900 863L1852 866Q1840 860 1848 850Z" fill="#0a9fe6" stroke="#14628e" stroke-width=".6"/><ellipse cx="1904" cy="852.500" rx="13.500" ry="8.500" fill="#fff" stroke="#888" stroke-width=".5" transform="rotate(20 1904 852.5)"/><circle cx="1894" cy="822" r="4.6" fill="#e60b1e"/><circle cx="1841" cy="826" r="32.5" fill="#0a9fe6" stroke="#14628e" stroke-width=".6"/><path d="M1868 846q-6 14-22 16l-6-8z" fill="#d4121c"/><ellipse cx="1836" cy="834" rx="29" ry="25" fill="#fff" stroke="#777" stroke-width=".5" transform="rotate(-12 1836 834)"/><ellipse cx="1837" cy="805" rx="9" ry="10.5" fill="#fff" stroke="#555" stroke-width=".6" transform="rotate(-15 1837 805)"/><ellipse cx="1853" cy="811" rx="9" ry="10.5" fill="#fff" stroke="#555" stroke-width=".6" transform="rotate(-15 1853 811)"/><path d="M1834 807q3 3 6-1" stroke="#000" stroke-width="1" fill="none"/><ellipse cx="1849.5" cy="811" rx="1.8" ry="2.6" fill="#000"/><circle cx="1850" cy="810.5" r=".7" fill="#fff"/><circle cx="1840.5" cy="816" r="4.6" fill="#e60b1e"/><circle cx="1839.5" cy="814.5" r="1.3" fill="#fff"/><path d="M1838 821q-6 18-4 32M1812 838q30 22 56-6" stroke="#555" stroke-width=".7" fill="none"/><path d="M1817 812l14 9M1813 822l17 3M1815 833l15-3M1847 828l17-5M1847 833l18 2M1846 838l14 8" stroke="#555" stroke-width=".7" fill="none"/><ellipse cx="1815" cy="842" rx="8" ry="7" fill="#fff" stroke="#777" stroke-width=".5"/><ellipse cx="1850" cy="854" rx="10" ry="7.5" fill="#fff" stroke="#777" stroke-width=".5"/><path d="M1812 848q8 14 28 16l6 4q-22 0-36-10z" fill="#0a9fe6"/><circle cx="1833" cy="860" r="4.4" fill="#f2d21c" stroke="#7a6a10" stroke-width=".6"/><circle cx="1833" cy="861.5" r="1.2" fill="#5a4a2a"/></g>
</svg>
<div class="vb" style="left:4px;top:4px"></div>
<div class="vb" style="left:32px;top:4px"></div>
<div class="vb" style="left:60px;top:4px"></div>
<div class="vb" style="left:88px;top:4px"></div>
<div class="vb" style="left:116px;top:4px"></div>
<div class="vb" style="left:144px;top:4px"></div>
<div class="vb" style="left:172px;top:4px"></div>
<div class="vb" style="left:200px;top:4px"></div>
<div class="vb" style="left:228px;top:4px"></div>
<div class="vb" style="left:256px;top:4px"></div>
<div class="vb" style="left:284px;top:4px"></div>
<div class="vb" style="left:4px;top:32px"></div>
<div class="vb" style="left:4px;top:60px"></div>
<div class="vb on" style="left:4px;top:88px"></div>
<div class="vb" style="left:4px;top:116px"></div>
<div class="vb" style="left:4px;top:144px"></div>
</div>
<svg class="abs" style="left:0;top:0;pointer-events:none" width="1920" height="1048" viewBox="0 0 1920 1048"><defs>
<linearGradient id="cb" x1="0" x2="1" y1="0" y2="0"><stop offset="0" stop-color="#2c56a8"/><stop offset=".35" stop-color="#8fb4ee"/><stop offset=".6" stop-color="#4f7fd0"/><stop offset="1" stop-color="#23428a"/></linearGradient>
<linearGradient id="cp" x1="0" x2="1" y1="0" y2="0"><stop offset="0" stop-color="#aebfe0"/><stop offset=".4" stop-color="#eef3fc"/><stop offset="1" stop-color="#9fb0d4"/></linearGradient>
<linearGradient id="cg" x1="0" x2="1" y1="0" y2="1"><stop offset="0" stop-color="#e8e8e6"/><stop offset="1" stop-color="#7c7c78"/></linearGradient>
<linearGradient id="fl" x1="0" x2="0" y1="0" y2="1"><stop offset="0" stop-color="#4f7fd0"/><stop offset="1" stop-color="#1d3f8c"/></linearGradient>
<linearGradient id="pg" x1="0" x2="1" y1="0" y2="1"><stop offset="0" stop-color="#fff"/><stop offset="1" stop-color="#b8cdf2"/></linearGradient>
<linearGradient id="fo" x1="0" x2="0" y1="0" y2="1"><stop offset="0" stop-color="#fbe9a0"/><stop offset="1" stop-color="#e6b84a"/></linearGradient>
<radialGradient id="lens" cx=".4" cy=".35" r=".7"><stop offset="0" stop-color="#fff"/><stop offset="1" stop-color="#9fc3ea"/></radialGradient>
<radialGradient id="sm" cx=".4" cy=".35" r=".7"><stop offset="0" stop-color="#fff7a0"/><stop offset="1" stop-color="#e8a81c"/></radialGradient>
</defs>
<g transform="translate(10 11) scale(1)"><rect x="-8" y="-8.5" width="16" height="16" fill="#6ab82c"/><rect x="-8" y="-8.5" width="16" height="16" fill="none" stroke="#4f9a1c" stroke-width="1"/><path d="M-5 -4.5h3l2 7l2.5 -7h3l-4 10h-3z" fill="#fff"/><circle cx="-3.5" cy="-6" r="1" fill="#fff"/></g>
<g transform="translate(22.5 11) scale(1)"><path d="M0 -7v14" stroke="#b8b8b8" stroke-width="1"/></g>
<g transform="translate(39 11) scale(1)"><g transform="translate(0 0) scale(1)"><path d="M-6 -8h8l4 4v12h-12z" fill="url(#pg)" stroke="#222" stroke-width="1"/><path d="M2 -8v4h4" fill="#fff" stroke="#222" stroke-width=".7"/></g></g>
<g transform="translate(64 11) scale(1)"><g transform="translate(0 1) scale(1)"><path d="M-8 -4h5l1.5 1.5h8v9h-14.5z" fill="#e6b84a" stroke="#a8801c" stroke-width=".6"/><path d="M-8 7l3 -7h14l-3 7z" fill="url(#fo)" stroke="#a8801c" stroke-width=".6"/></g><g transform="translate(2 -4) rotate(10) scale(0.8)"><path d="M-6 3q1 -7 7 -7v-3l6 5l-6 5v-3q-4 0 -7 3z" fill="#3fc41c" stroke="#1c7a08" stroke-width=".6"/></g></g>
<g transform="translate(88 11) scale(1)"><g transform="translate(-3 -3) scale(0.6)"><path d="M-8 -4h5l1.5 1.5h8v9h-14.5z" fill="#e6b84a" stroke="#a8801c" stroke-width=".6"/><path d="M-8 7l3 -7h14l-3 7z" fill="url(#fo)" stroke="#a8801c" stroke-width=".6"/></g><g transform="translate(-3 4) scale(0.6)"><path d="M-8 -4h5l1.5 1.5h8v9h-14.5z" fill="#e6b84a" stroke="#a8801c" stroke-width=".6"/><path d="M-8 7l3 -7h14l-3 7z" fill="url(#fo)" stroke="#a8801c" stroke-width=".6"/></g><g transform="translate(4 1) scale(0.7)"><path d="M-6 -8h8l4 4v12h-12z" fill="url(#pg)" stroke="#222" stroke-width="1"/><path d="M2 -8v4h4" fill="#fff" stroke="#222" stroke-width=".7"/></g></g>
<g transform="translate(111 11) scale(1)"><g transform="translate(0 0) scale(1)"><rect x="-8" y="-8" width="16" height="16" rx="1" fill="url(#fl)" stroke="#142c66" stroke-width=".7"/><rect x="-5.5" y="-8" width="11" height="8" fill="#f4f4f4"/><path d="M-5.5 -6h11M-5.5 -4h11M-5.5 -2h11" stroke="#e05050" stroke-width=".8"/><rect x="-4.5" y="2.5" width="9" height="5.5" fill="#c8ccd8"/><rect x="-3" y="3.5" width="2.5" height="4" fill="#2a3a70"/></g></g>
<g transform="translate(135 11) scale(1)"><g transform="translate(3 -3) scale(0.7)"><rect x="-8" y="-8" width="16" height="16" rx="1" fill="url(#fl)" stroke="#142c66" stroke-width=".7"/><rect x="-5.5" y="-8" width="11" height="8" fill="#f4f4f4"/><path d="M-5.5 -6h11M-5.5 -4h11M-5.5 -2h11" stroke="#e05050" stroke-width=".8"/><rect x="-4.5" y="2.5" width="9" height="5.5" fill="#c8ccd8"/><rect x="-3" y="3.5" width="2.5" height="4" fill="#2a3a70"/></g><g transform="translate(-2 3) scale(0.72)"><rect x="-8" y="-8" width="16" height="16" rx="1" fill="url(#fl)" stroke="#142c66" stroke-width=".7"/><rect x="-5.5" y="-8" width="11" height="8" fill="#f4f4f4"/><path d="M-5.5 -6h11M-5.5 -4h11M-5.5 -2h11" stroke="#e05050" stroke-width=".8"/><rect x="-4.5" y="2.5" width="9" height="5.5" fill="#c8ccd8"/><rect x="-3" y="3.5" width="2.5" height="4" fill="#2a3a70"/></g></g>
<g transform="translate(158 11) scale(1)"><g transform="translate(-2 -3) scale(0.7)"><rect x="-8" y="-8" width="16" height="16" rx="1" fill="url(#fl)" stroke="#142c66" stroke-width=".7"/><rect x="-5.5" y="-8" width="11" height="8" fill="#f4f4f4"/><path d="M-5.5 -6h11M-5.5 -4h11M-5.5 -2h11" stroke="#e05050" stroke-width=".8"/><rect x="-4.5" y="2.5" width="9" height="5.5" fill="#c8ccd8"/><rect x="-3" y="3.5" width="2.5" height="4" fill="#2a3a70"/></g><g transform="translate(4 4) scale(0.9)"><path d="M-5 -3l5 -2.5l5 2.5v6l-5 2.5l-5 -2.5z" fill="#8a8a86" stroke="#444" stroke-width=".6"/><path d="M-5 -3l5 2.5l5 -2.5l-5 -2.5z" fill="#d8d8d4" stroke="#444" stroke-width=".5"/><path d="M0 -.5v6l5 -2.5v-6z" fill="#5e5e5a"/></g><g transform="translate(6 -5) rotate(200) scale(0.5)"><path d="M-6 3q1 -7 7 -7v-3l6 5l-6 5v-3q-4 0 -7 3z" fill="#3fc41c" stroke="#1c7a08" stroke-width=".6"/></g></g>
<g transform="translate(183 11) scale(1)"><rect x="-5" y="-8" width="10" height="8" fill="#dce8f8" stroke="#556" stroke-width=".6"/><path d="M0 -7l-3 3.5h6z" fill="#1fc41c"/><path d="M0 -4v3" stroke="#1fc41c" stroke-width="1.6"/><path d="M-8 0h16v6h-16z" fill="#e4e4e4" stroke="#666" stroke-width=".7"/><path d="M-8 6h16v2.5h-16z" fill="#aaa" stroke="#666" stroke-width=".5"/></g>
<g transform="translate(207 11) scale(1)"><circle cx="0" cy="0" r="9" fill="#6a9a3c" stroke="#4a7a2c" stroke-width="1"/><g transform="translate(0 0) scale(0.95)"><path d="M-2.5 3.5l-5.5 5.5" stroke="#9a9a9a" stroke-width="3" stroke-linecap="round"/><path d="M-2.5 3.5l-5.5 5.5" stroke="#e2e2e2" stroke-width="1.2" stroke-linecap="round"/><circle cx="1.5" cy="-1" r="5.6" fill="url(#lens)" stroke="#a8c4e0" stroke-width="1.6"/></g></g>
<g transform="translate(231 12) scale(1)"><g transform="scale(1 1)"><path d="M-8 -2l7 -6v4q8 0 8 8q0 3 -2 5q1 -7 -6 -7v4z" fill="#d0d0d0" stroke="#9a9a9a" stroke-width=".8"/></g></g>
<g transform="translate(254 12) scale(1)"><g transform="scale(-1 1)"><path d="M-8 -2l7 -6v4q8 0 8 8q0 3 -2 5q1 -7 -6 -7v4z" fill="#d0d0d0" stroke="#9a9a9a" stroke-width=".8"/></g></g>
<g transform="translate(279 11) scale(1)"><g transform="scale(1 1)"><path d="M-8 -2l7 -6v4q8 0 8 8q0 3 -2 5q1 -7 -6 -7v4z" fill="#7fa8e8" stroke="#3a6ac0" stroke-width=".8"/></g><path d="M-6 2h6l-2.4 3.2l2.4 3.3h-6l2.4 -3.3z" fill="#e8c88a" stroke="#6a4a1c" stroke-width=".6"/></g>
<g transform="translate(298 11) scale(1)"><path d="M-2.5 -3h5" stroke="#000" stroke-width="1"/><path d="M-3 0h6l-3 3.2z" fill="#000"/></g>
<g transform="translate(312.5 11) scale(1)"><path d="M0 -6.5v13" stroke="#999" stroke-width="1"/></g>
<g transform="translate(33 78) scale(1)"><path d="M-8 -6l8 -2l7 2l-8 2z" fill="#7f9af0" stroke="#4a5ac0" stroke-width=".5"/><path d="M-8 -3l8 -2l7 2l-8 2z" fill="#f4f4fa" stroke="#889" stroke-width=".5"/><path d="M-8 0l8 -2l7 2l-8 2z" fill="#9aa8e8" stroke="#667" stroke-width=".5"/><ellipse cx="1" cy="5" rx="7" ry="4.5" fill="#c08a5a" stroke="#6a4020" stroke-width=".6"/><circle cx="-2" cy="6" r="1.7" fill="#1c4cf0"/><circle cx="2" cy="7" r="1.7" fill="#1fc41c"/><circle cx="4.5" cy="4" r="1.7" fill="#e81c1c"/><path d="M2 3l7 -10" stroke="#b05a1c" stroke-width="1.6"/></g>
<g transform="translate(59 78) scale(1)"><g transform="translate(-3 -2) scale(0.75)"><path d="M-6 -8h8l4 4v12h-12z" fill="url(#pg)" stroke="#222" stroke-width="1"/><path d="M2 -8v4h4" fill="#fff" stroke="#222" stroke-width=".7"/></g><g transform="translate(2 -4) scale(0.75)"><path d="M-6 -8h8l4 4v12h-12z" fill="url(#pg)" stroke="#222" stroke-width="1"/><path d="M2 -8v4h4" fill="#fff" stroke="#222" stroke-width=".7"/></g><g transform="translate(0 5)"><path d="M-9 1q9 -9 18 0" fill="none" stroke="#23263c" stroke-width="2.1"/><path d="M-8.5 1.5q8.5 -7 17 0q-8.5 5 -17 0z" fill="#dfe5f2" stroke="#3f4360" stroke-width=".7"/><circle cx="0" cy="0.6" r="3.4" fill="#4766b0"/><circle cx="0" cy="0.6" r="1.6" fill="#0c1024"/><circle cx="-1" cy="-.4" r=".7" fill="#dfe8ff"/><path d="M-7 -2.6l-1.2 -1.5M-3.5 -4l-.6 -1.5M0 -4.4v-1.6M3.5 -4l.6 -1.5M7 -2.6l1.2 -1.5" stroke="#3a3f58" stroke-width=".7"/></g></g>
<g transform="translate(85 78) scale(1)"><g transform="translate(0 -3)"><path d="M-9 1q9 -9 18 0" fill="none" stroke="#23263c" stroke-width="2.1"/><path d="M-8.5 1.5q8.5 -7 17 0q-8.5 5 -17 0z" fill="#dfe5f2" stroke="#3f4360" stroke-width=".7"/><circle cx="0" cy="0.6" r="3.4" fill="#4766b0"/><circle cx="0" cy="0.6" r="1.6" fill="#0c1024"/><circle cx="-1" cy="-.4" r=".7" fill="#dfe8ff"/><path d="M-7 -2.6l-1.2 -1.5M-3.5 -4l-.6 -1.5M0 -4.4v-1.6M3.5 -4l.6 -1.5M7 -2.6l1.2 -1.5" stroke="#3a3f58" stroke-width=".7"/></g><path d="M-8.5 5h7M-5 1.5v7" stroke="#59d41c" stroke-width="2.2"/><path d="M2 8h2.5a3 3 0 0 0 0 -6h-2" fill="none" stroke="#3f7fd8" stroke-width="1.8"/><path d="M2.5 -0.5l-3 2.5l3 2.5z" fill="#3f7fd8"/></g>
<g transform="translate(110 78) scale(1)"><g transform="translate(0 -3)"><path d="M-9 1q9 -9 18 0" fill="none" stroke="#23263c" stroke-width="2.1"/><path d="M-8.5 1.5q8.5 -7 17 0q-8.5 5 -17 0z" fill="#dfe5f2" stroke="#3f4360" stroke-width=".7"/><circle cx="0" cy="0.6" r="3.4" fill="#4766b0"/><circle cx="0" cy="0.6" r="1.6" fill="#0c1024"/><circle cx="-1" cy="-.4" r=".7" fill="#dfe8ff"/><path d="M-7 -2.6l-1.2 -1.5M-3.5 -4l-.6 -1.5M0 -4.4v-1.6M3.5 -4l.6 -1.5M7 -2.6l1.2 -1.5" stroke="#3a3f58" stroke-width=".7"/></g><path d="M-8.5 5h7" stroke="#f2e216" stroke-width="2.2"/><path d="M2 8h2.5a3 3 0 0 0 0 -6h-2" fill="none" stroke="#3f7fd8" stroke-width="1.8"/><path d="M2.5 -0.5l-3 2.5l3 2.5z" fill="#3f7fd8"/></g>
<g transform="translate(136 78) scale(1)"><g transform="translate(0 -3)"><path d="M-9 1q9 -9 18 0" fill="none" stroke="#23263c" stroke-width="2.1"/><path d="M-8.5 1.5q8.5 -7 17 0q-8.5 5 -17 0z" fill="#dfe5f2" stroke="#3f4360" stroke-width=".7"/><circle cx="0" cy="0.6" r="3.4" fill="#4766b0"/><circle cx="0" cy="0.6" r="1.6" fill="#0c1024"/><circle cx="-1" cy="-.4" r=".7" fill="#dfe8ff"/><path d="M-7 -2.6l-1.2 -1.5M-3.5 -4l-.6 -1.5M0 -4.4v-1.6M3.5 -4l.6 -1.5M7 -2.6l1.2 -1.5" stroke="#3a3f58" stroke-width=".7"/></g><rect x="-8" y="-2" width="6" height="11" rx="1.5" fill="#111"/><rect x="2" y="-2" width="6" height="11" rx="1.5" fill="#111"/><circle cx="-5" cy="1" r="1.9" fill="#f4d21c"/><circle cx="-5" cy="6" r="1.9" fill="#1fd11f"/><circle cx="5" cy="1" r="1.9" fill="#f01818"/><circle cx="5" cy="6" r="1.9" fill="#f0b81c"/></g>
<g transform="translate(162 78) scale(1)"><g transform="translate(0 -3)"><path d="M-9 1q9 -9 18 0" fill="none" stroke="#23263c" stroke-width="2.1"/><path d="M-8.5 1.5q8.5 -7 17 0q-8.5 5 -17 0z" fill="#dfe5f2" stroke="#3f4360" stroke-width=".7"/><circle cx="0" cy="0.6" r="3.4" fill="#4766b0"/><circle cx="0" cy="0.6" r="1.6" fill="#0c1024"/><circle cx="-1" cy="-.4" r=".7" fill="#dfe8ff"/><path d="M-7 -2.6l-1.2 -1.5M-3.5 -4l-.6 -1.5M0 -4.4v-1.6M3.5 -4l.6 -1.5M7 -2.6l1.2 -1.5" stroke="#3a3f58" stroke-width=".7"/></g><g transform="translate(0 3) scale(0.85)"><path d="M-7 -1a7 7 0 0 1 12 -4l2.5 -2.5v8h-8l2.5 -2.5a3.6 3.6 0 0 0 -6 1z" fill="#6fd43a" stroke="#2c8a14" stroke-width=".8"/><path d="M7 1a7 7 0 0 1 -12 4l-2.5 2.5v-8h8l-2.5 2.5a3.6 3.6 0 0 0 6 -1z" fill="#f4e01c" stroke="#b89a10" stroke-width=".8"/></g></g>
<g transform="translate(188 78) scale(1)"><g transform="translate(0 -3)"><path d="M-9 1q9 -9 18 0" fill="none" stroke="#23263c" stroke-width="2.1"/><path d="M-8.5 1.5q8.5 -7 17 0q-8.5 5 -17 0z" fill="#dfe5f2" stroke="#3f4360" stroke-width=".7"/><circle cx="0" cy="0.6" r="3.4" fill="#4766b0"/><circle cx="0" cy="0.6" r="1.6" fill="#0c1024"/><circle cx="-1" cy="-.4" r=".7" fill="#dfe8ff"/><path d="M-7 -2.6l-1.2 -1.5M-3.5 -4l-.6 -1.5M0 -4.4v-1.6M3.5 -4l.6 -1.5M7 -2.6l1.2 -1.5" stroke="#3a3f58" stroke-width=".7"/></g><path d="M-8.5 3h7M-5 -0.5v7" stroke="#59d41c" stroke-width="2.2"/><path d="M-3 9l5 -9" stroke="#222" stroke-width="1"/><path d="M1.5 8h7" stroke="#f2e216" stroke-width="2.2"/></g>
<g transform="translate(215 78) scale(1)"><g transform="translate(0 -3)"><path d="M-9 1q9 -9 18 0" fill="none" stroke="#23263c" stroke-width="2.1"/><path d="M-8.5 1.5q8.5 -7 17 0q-8.5 5 -17 0z" fill="#dfe5f2" stroke="#3f4360" stroke-width=".7"/><circle cx="0" cy="0.6" r="3.4" fill="#4766b0"/><circle cx="0" cy="0.6" r="1.6" fill="#0c1024"/><circle cx="-1" cy="-.4" r=".7" fill="#dfe8ff"/><path d="M-7 -2.6l-1.2 -1.5M-3.5 -4l-.6 -1.5M0 -4.4v-1.6M3.5 -4l.6 -1.5M7 -2.6l1.2 -1.5" stroke="#3a3f58" stroke-width=".7"/></g><path d="M-3.2 5h8.4M1 0.7999999999999998v8.4" stroke="#59d41c" stroke-width="2.64"/></g>
<g transform="translate(241 78) scale(1)"><g transform="translate(0 -3)"><path d="M-9 1q9 -9 18 0" fill="none" stroke="#23263c" stroke-width="2.1"/><path d="M-8.5 1.5q8.5 -7 17 0q-8.5 5 -17 0z" fill="#dfe5f2" stroke="#3f4360" stroke-width=".7"/><circle cx="0" cy="0.6" r="3.4" fill="#4766b0"/><circle cx="0" cy="0.6" r="1.6" fill="#0c1024"/><circle cx="-1" cy="-.4" r=".7" fill="#dfe8ff"/><path d="M-7 -2.6l-1.2 -1.5M-3.5 -4l-.6 -1.5M0 -4.4v-1.6M3.5 -4l.6 -1.5M7 -2.6l1.2 -1.5" stroke="#3a3f58" stroke-width=".7"/></g><path d="M-3.2 5h8.4" stroke="#f2e216" stroke-width="2.64"/></g>
<g transform="translate(283 78) scale(1)"><path d="M-7 -1a7 7 0 0 1 12 -4l2.5 -2.5v8h-8l2.5 -2.5a3.6 3.6 0 0 0 -6 1z" fill="#7fb0ee" stroke="#3f7fd8" stroke-width=".8"/><path d="M7 1a7 7 0 0 1 -12 4l-2.5 2.5v-8h8l-2.5 2.5a3.6 3.6 0 0 0 6 -1z" fill="#7fb0ee" stroke="#3f7fd8" stroke-width=".8"/></g>
<g transform="translate(310 78) scale(1)"><path d="M-5.5 -6.5v13a5.5 2.3 0 0 0 11 0v-13" fill="none" stroke="#222" stroke-width="1.1"/><ellipse cx="0" cy="-6.5" rx="5.5" ry="2.3" fill="none" stroke="#222" stroke-width="1.1"/><path d="M-5.5 6.5a5.5 2.3 0 0 1 11 0" fill="none" stroke="#222" stroke-width="0.77"/></g>
<g transform="translate(336 78) scale(1)"><path d="M-5.5 -6.5v13a5.5 2.3 0 0 0 11 0v-13" fill="none" stroke="#222" stroke-width="1.1"/><ellipse cx="0" cy="-6.5" rx="5.5" ry="2.3" fill="none" stroke="#222" stroke-width="1.1"/><path d="M-5.5 6.5a5.5 2.3 0 0 1 11 0" fill="none" stroke="#222" stroke-width="0.77"/></g>
<g transform="translate(362 78) scale(1)"><path d="M-5.5 -6.5v13a5.5 2.3 0 0 0 11 0v-13" fill="none" stroke="#222" stroke-width="1.1"/><ellipse cx="0" cy="-6.5" rx="5.5" ry="2.3" fill="none" stroke="#222" stroke-width="1.1"/><path d="M-5.5 6.5a5.5 2.3 0 0 1 11 0" fill="none" stroke="#222" stroke-width="0.77"/></g>
<g transform="translate(388 78) scale(1)"><ellipse cx="3" cy="8.5" rx="7" ry="1.6" fill="#000" opacity=".25"/><path d="M-5.5 -6.5v13a5.5 2.3 0 0 0 11 0v-13z" fill="url(#cb)" stroke="#1fd8f0" stroke-width="1.2"/><ellipse cx="0" cy="-6.5" rx="5.5" ry="2.3" fill="#6f9be6" stroke="#1fd8f0" stroke-width="1.2"/></g>
<rect x="401.5" y="66.5" width="24" height="23" fill="#fbdc7c" stroke="#e5c365" stroke-width="1"/>
<g transform="translate(414 78) scale(1)"><ellipse cx="3" cy="8.5" rx="7" ry="1.6" fill="#000" opacity=".25"/><path d="M-5.5 -6.5v13a5.5 2.3 0 0 0 11 0v-13z" fill="url(#cb)" stroke="#16306e" stroke-width="0.8"/><ellipse cx="0" cy="-6.5" rx="5.5" ry="2.3" fill="#6f9be6" stroke="#16306e" stroke-width="0.8"/></g>
<g transform="translate(440 78) scale(1)"><ellipse cx="3" cy="8.5" rx="7" ry="1.6" fill="#000" opacity=".25"/><path d="M-5.5 -6.5v13a5.5 2.3 0 0 0 11 0v-13z" fill="url(#cp)" stroke="#3fdcf0" stroke-width="1.1"/><ellipse cx="0" cy="-6.5" rx="5.5" ry="2.3" fill="#e8eefa" stroke="#3fdcf0" stroke-width="1.1"/></g>
<g transform="translate(466 78) scale(1)"><ellipse cx="3" cy="8.5" rx="7" ry="1.6" fill="#000" opacity=".25"/><path d="M-5.5 -6.5v13a5.5 2.3 0 0 0 11 0v-13z" fill="url(#cp)" stroke="#7a86a8" stroke-width="0.9"/><ellipse cx="0" cy="-6.5" rx="5.5" ry="2.3" fill="#e8eefa" stroke="#7a86a8" stroke-width="0.9"/></g>
<g transform="translate(492 78) scale(1)"><path d="M-5.5 -6.5v13a5.5 2.3 0 0 0 11 0v-13" fill="none" stroke="#222" stroke-width="0.9"/><ellipse cx="0" cy="-6.5" rx="5.5" ry="2.3" fill="none" stroke="#222" stroke-width="0.9"/><path d="M-5.5 6.5a5.5 2.3 0 0 1 11 0" fill="none" stroke="#222" stroke-width="0.63"/><path d="M-3 -5l2 11M0 -4l-2 10M2 -5l1 11M-4 2l8 -4M-4 -2l8 5" stroke="#222" stroke-width=".6" fill="none"/></g>
<g transform="translate(518 78) scale(1)"><g transform="translate(-4 -2) scale(.8)"><path d="M-5.5 -6.5v13a5.5 2.3 0 0 0 11 0v-13" fill="none" stroke="#555" stroke-width="1.1"/><ellipse cx="0" cy="-6.5" rx="5.5" ry="2.3" fill="none" stroke="#555" stroke-width="1.1"/><path d="M-5.5 6.5a5.5 2.3 0 0 1 11 0" fill="none" stroke="#555" stroke-width="0.77"/></g><g transform="translate(4 3) scale(.8)"><ellipse cx="3" cy="8.5" rx="7" ry="1.6" fill="#000" opacity=".25"/><path d="M-5.5 -6.5v13a5.5 2.3 0 0 0 11 0v-13z" fill="url(#cb)" stroke="#16306e" stroke-width="0.8"/><ellipse cx="0" cy="-6.5" rx="5.5" ry="2.3" fill="#6f9be6" stroke="#16306e" stroke-width="0.8"/></g><g transform="translate(3 -7) rotate(30) scale(0.45)"><path d="M-6 3q1 -7 7 -7v-3l6 5l-6 5v-3q-4 0 -7 3z" fill="#3fc41c" stroke="#1c7a08" stroke-width=".6"/></g><g transform="translate(-5 8) rotate(210) scale(0.45)"><path d="M-6 3q1 -7 7 -7v-3l6 5l-6 5v-3q-4 0 -7 3z" fill="#3fc41c" stroke="#1c7a08" stroke-width=".6"/></g></g>
<g transform="translate(544 78) scale(1)"><g transform="translate(-2 -1)"><ellipse cx="3" cy="8.5" rx="7" ry="1.6" fill="#000" opacity=".25"/><path d="M-5.5 -6.5v13a5.5 2.3 0 0 0 11 0v-13z" fill="url(#cb)" stroke="#16306e" stroke-width="0.8"/><ellipse cx="0" cy="-6.5" rx="5.5" ry="2.3" fill="#6f9be6" stroke="#16306e" stroke-width="0.8"/></g><g transform="translate(5 5) scale(.6)"><path d="M-7 -1a7 7 0 0 1 12 -4l2.5 -2.5v8h-8l2.5 -2.5a3.6 3.6 0 0 0 -6 1z" fill="#7fb0ee" stroke="#3f7fd8" stroke-width=".8"/><path d="M7 1a7 7 0 0 1 -12 4l-2.5 2.5v-8h8l-2.5 2.5a3.6 3.6 0 0 0 6 -1z" fill="#7fb0ee" stroke="#3f7fd8" stroke-width=".8"/></g></g>
<g transform="translate(570 78) scale(1)"><rect x="-9" y="-7" width="17" height="12" fill="#4a66a8" stroke="#8a8a8a" stroke-width="1"/><path d="M-4 8h8" stroke="#888" stroke-width="1.5"/><path d="M-7 7l9 -9" stroke="#c8c8c8" stroke-width="2.6" stroke-linecap="round"/><path d="M3 -4a3.5 3.5 0 1 1 3 3" fill="none" stroke="#d8d8d8" stroke-width="2.4"/><path d="M7 7l-9 -9" stroke="#4f7fd0" stroke-width="2.4" stroke-linecap="round"/><path d="M-6 -7l3 1l1 3" fill="none" stroke="#eee" stroke-width="1.6"/></g>
<g transform="translate(612 78) scale(1)"><g transform="translate(0 -4)"><path d="M-8 -1.5l4 -2l4 2v5l-4 2l-4 -2z" fill="url(#cg)" stroke="#333" stroke-width=".6"/><path d="M-8 -1.5l4 2l4 -2M-4 0.5v5" fill="none" stroke="#333" stroke-width=".5"/><path d="M0 -1.5l4 -2l4 2v5l-4 2l-4 -2z" fill="url(#cg)" stroke="#333" stroke-width=".6"/><path d="M0 -1.5l4 2l4 -2M4 0.5v5" fill="none" stroke="#333" stroke-width=".5"/><path d="M3 -1.5l4 -2l4 2v5l-4 2l-4 -2z" fill="#f4f4f4" stroke="#333" stroke-width=".6"/></g><path d="M-8.5 5h7M-5 1.5v7" stroke="#59d41c" stroke-width="2.2"/><path d="M2 8h2.5a3 3 0 0 0 0 -6h-2" fill="none" stroke="#3f7fd8" stroke-width="1.8"/><path d="M2.5 -0.5l-3 2.5l3 2.5z" fill="#3f7fd8"/></g>
<g transform="translate(638 78) scale(1)"><g transform="translate(0 -4)"><path d="M-8 -1.5l4 -2l4 2v5l-4 2l-4 -2z" fill="url(#cg)" stroke="#333" stroke-width=".6"/><path d="M-8 -1.5l4 2l4 -2M-4 0.5v5" fill="none" stroke="#333" stroke-width=".5"/><path d="M0 -1.5l4 -2l4 2v5l-4 2l-4 -2z" fill="url(#cg)" stroke="#333" stroke-width=".6"/><path d="M0 -1.5l4 2l4 -2M4 0.5v5" fill="none" stroke="#333" stroke-width=".5"/><path d="M3 -1.5l4 -2l4 2v5l-4 2l-4 -2z" fill="#f4f4f4" stroke="#333" stroke-width=".6"/></g><rect x="-8" y="-2" width="6" height="11" rx="1.5" fill="#111"/><rect x="2" y="-2" width="6" height="11" rx="1.5" fill="#111"/><circle cx="-5" cy="1" r="1.9" fill="#f4d21c"/><circle cx="-5" cy="6" r="1.9" fill="#1fd11f"/><circle cx="5" cy="1" r="1.9" fill="#f01818"/><circle cx="5" cy="6" r="1.9" fill="#f0b81c"/></g>
<g transform="translate(664 78) scale(1)"><g transform="translate(0 -4)"><path d="M-8 -1.5l4 -2l4 2v5l-4 2l-4 -2z" fill="url(#cg)" stroke="#333" stroke-width=".6"/><path d="M-8 -1.5l4 2l4 -2M-4 0.5v5" fill="none" stroke="#333" stroke-width=".5"/><path d="M0 -1.5l4 -2l4 2v5l-4 2l-4 -2z" fill="url(#cg)" stroke="#333" stroke-width=".6"/><path d="M0 -1.5l4 2l4 -2M4 0.5v5" fill="none" stroke="#333" stroke-width=".5"/><path d="M3 -1.5l4 -2l4 2v5l-4 2l-4 -2z" fill="#f4f4f4" stroke="#333" stroke-width=".6"/></g><g transform="translate(0 3) scale(0.85)"><path d="M-7 -1a7 7 0 0 1 12 -4l2.5 -2.5v8h-8l2.5 -2.5a3.6 3.6 0 0 0 -6 1z" fill="#6fd43a" stroke="#2c8a14" stroke-width=".8"/><path d="M7 1a7 7 0 0 1 -12 4l-2.5 2.5v-8h8l-2.5 2.5a3.6 3.6 0 0 0 6 -1z" fill="#f4e01c" stroke="#b89a10" stroke-width=".8"/></g></g>
<g transform="translate(690 78) scale(1)"><g transform="translate(0 -4)"><path d="M-8 -1.5l4 -2l4 2v5l-4 2l-4 -2z" fill="url(#cg)" stroke="#333" stroke-width=".6"/><path d="M-8 -1.5l4 2l4 -2M-4 0.5v5" fill="none" stroke="#333" stroke-width=".5"/><path d="M0 -1.5l4 -2l4 2v5l-4 2l-4 -2z" fill="url(#cg)" stroke="#333" stroke-width=".6"/><path d="M0 -1.5l4 2l4 -2M4 0.5v5" fill="none" stroke="#333" stroke-width=".5"/><path d="M3 -1.5l4 -2l4 2v5l-4 2l-4 -2z" fill="#f4f4f4" stroke="#333" stroke-width=".6"/></g><path d="M-8.5 3h7M-5 -0.5v7" stroke="#59d41c" stroke-width="2.2"/><path d="M-3 9l5 -9" stroke="#222" stroke-width="1"/><path d="M1.5 8h7" stroke="#f2e216" stroke-width="2.2"/></g>
<g transform="translate(716 78) scale(1)"><ellipse cx="3" cy="8.5" rx="7" ry="1.6" fill="#000" opacity=".25"/><path d="M-5.5 -6.5v13a5.5 2.3 0 0 0 11 0v-13z" fill="url(#cb)" stroke="#16306e" stroke-width="0.8"/><ellipse cx="0" cy="-6.5" rx="5.5" ry="2.3" fill="#6f9be6" stroke="#16306e" stroke-width="0.8"/><path d="M0 -3v10" stroke="#111" stroke-width="1.2" stroke-dasharray="2.5 1.5"/></g>
<g transform="translate(742 78) scale(1)"><ellipse cx="3" cy="8.5" rx="7" ry="1.6" fill="#000" opacity=".25"/><path d="M-5.5 -6.5v13a5.5 2.3 0 0 0 11 0v-13z" fill="url(#cp)" stroke="#333" stroke-width="0.8"/><ellipse cx="0" cy="-6.5" rx="5.5" ry="2.3" fill="#8fb4ee" stroke="#333" stroke-width="0.8"/><path d="M-1.5 -4v12M2 -4v12" stroke="#f4e01c" stroke-width="1.2"/></g>
<g transform="translate(769 78) scale(1)"><ellipse cx="3" cy="8.5" rx="7" ry="1.6" fill="#000" opacity=".25"/><path d="M-5.5 -6.5v13a5.5 2.3 0 0 0 11 0v-13z" fill="url(#cp)" stroke="#3fdcf0" stroke-width="1.1"/><ellipse cx="0" cy="-6.5" rx="5.5" ry="2.3" fill="#e8eefa" stroke="#3fdcf0" stroke-width="1.1"/><path d="M-3 1l3 5l5 -9" fill="none" stroke="#2fb41c" stroke-width="2.4"/></g>
<g transform="translate(795 78) scale(1)"><ellipse cx="3" cy="8.5" rx="7" ry="1.6" fill="#000" opacity=".25"/><path d="M-5.5 -6.5v13a5.5 2.3 0 0 0 11 0v-13z" fill="url(#cp)" stroke="#3fdcf0" stroke-width="1.1"/><ellipse cx="0" cy="-6.5" rx="5.5" ry="2.3" fill="#e8eefa" stroke="#3fdcf0" stroke-width="1.1"/><rect x="3" y="-9.5" width="5.5" height="5.5" fill="#e8c06a" stroke="#e07a1c" stroke-width="1"/></g>
<g transform="translate(821 78) scale(1)"><path d="M-5.5 -6.5v13a5.5 2.3 0 0 0 11 0v-13" fill="none" stroke="#5a8ad8" stroke-width="0.9"/><ellipse cx="0" cy="-6.5" rx="5.5" ry="2.3" fill="none" stroke="#5a8ad8" stroke-width="0.9"/><path d="M-5.5 6.5a5.5 2.3 0 0 1 11 0" fill="none" stroke="#5a8ad8" stroke-width="0.63"/><path d="M-3 -5l2 11M0 -4l-2 10M2 -5l1 11M-4 2l8 -4M-4 -2l8 5" stroke="#5a8ad8" stroke-width=".6" fill="none"/></g>
<g transform="translate(847 78) scale(1)"><path d="M-9 -5l9 -3.5l9 3.5l-2 8l-7 5.5l-7 -5.5z" fill="#2f56b0" stroke="#14244a" stroke-width=".8"/><path d="M-9 -5l9 3.5l9 -3.5l-9 -3.5z" fill="#7fa4ec"/><path d="M0 -1.5v10l7 -5.5l2 -8z" fill="#1c3578"/></g>
<g transform="translate(888 78) scale(1)"><g transform="translate(1 -1) scale(0.95)"><path d="M-2.5 3.5l-5.5 5.5" stroke="#9a9a9a" stroke-width="3" stroke-linecap="round"/><path d="M-2.5 3.5l-5.5 5.5" stroke="#e2e2e2" stroke-width="1.2" stroke-linecap="round"/><circle cx="1.5" cy="-1" r="5.6" fill="url(#lens)" stroke="#8ea2bf" stroke-width="1.6"/></g><g transform="translate(5 5) scale(0.75)"><path d="M-5 -3l5 -2.5l5 2.5v6l-5 2.5l-5 -2.5z" fill="#8a8a86" stroke="#444" stroke-width=".6"/><path d="M-5 -3l5 2.5l5 -2.5l-5 -2.5z" fill="#d8d8d4" stroke="#444" stroke-width=".5"/><path d="M0 -.5v6l5 -2.5v-6z" fill="#5e5e5a"/></g><path d="M-9 -8h4M-7 -10v4M-9 -4.5h4" stroke="#111" stroke-width=".9"/><path d="M0 -4.5l5 2.5l-5 2.5z" fill="#cfd8e8" stroke="#8a9ab8" stroke-width=".5"/></g>
<g transform="translate(914 78) scale(1)"><g transform="translate(1 -1) scale(0.95)"><path d="M-2.5 3.5l-5.5 5.5" stroke="#9a9a9a" stroke-width="3" stroke-linecap="round"/><path d="M-2.5 3.5l-5.5 5.5" stroke="#e2e2e2" stroke-width="1.2" stroke-linecap="round"/><circle cx="1.5" cy="-1" r="5.6" fill="url(#lens)" stroke="#8ea2bf" stroke-width="1.6"/></g><g transform="translate(5 5) scale(0.75)"><path d="M-5 -3l5 -2.5l5 2.5v6l-5 2.5l-5 -2.5z" fill="#8a8a86" stroke="#444" stroke-width=".6"/><path d="M-5 -3l5 2.5l5 -2.5l-5 -2.5z" fill="#d8d8d4" stroke="#444" stroke-width=".5"/><path d="M0 -.5v6l5 -2.5v-6z" fill="#5e5e5a"/></g><g transform="scale(.95)"><rect x="-10" y="-9" width="4" height="4" fill="#3fc41c"/><path d="M-9.5 -8.5l3 3M-6.5 -8.5l-3 3" stroke="#167a08" stroke-width=".6"/><rect x="6" y="-9" width="4" height="4" fill="#3fc41c"/><path d="M6.5 -8.5l3 3M9.5 -8.5l-3 3" stroke="#167a08" stroke-width=".6"/><rect x="-10" y="5" width="4" height="4" fill="#3fc41c"/><path d="M-9.5 5.5l3 3M-6.5 5.5l-3 3" stroke="#167a08" stroke-width=".6"/><rect x="6" y="5" width="4" height="4" fill="#3fc41c"/><path d="M6.5 5.5l3 3M9.5 5.5l-3 3" stroke="#167a08" stroke-width=".6"/></g></g>
<g transform="translate(940 78) scale(1)"><rect x="-7" y="-5" width="14" height="10" fill="#f6f6fa" stroke="#334" stroke-width="1"/><text x="-6" y="3.5" font-size="8.5" font-weight="bold" font-family="Liberation Sans" fill="#223">1:1</text><rect x="-10" y="-9" width="4" height="4" fill="#3fc41c"/><path d="M-9.5 -8.5l3 3M-6.5 -8.5l-3 3" stroke="#167a08" stroke-width=".6"/><rect x="6" y="-9" width="4" height="4" fill="#3fc41c"/><path d="M6.5 -8.5l3 3M9.5 -8.5l-3 3" stroke="#167a08" stroke-width=".6"/><rect x="-10" y="5" width="4" height="4" fill="#3fc41c"/><path d="M-9.5 5.5l3 3M-6.5 5.5l-3 3" stroke="#167a08" stroke-width=".6"/><rect x="6" y="5" width="4" height="4" fill="#3fc41c"/><path d="M6.5 5.5l3 3M9.5 5.5l-3 3" stroke="#167a08" stroke-width=".6"/></g>
<g transform="translate(966 78) scale(1)"><path d="M-5 5l10 -10" stroke="#2fb41c" stroke-width="2.2"/><path d="M8.5 -8.5l-7 1.5l5.5 5.5z" fill="#2fb41c" stroke="#1c7a08" stroke-width=".5"/><circle cx="-6" cy="6" r="2.8" fill="#ddd" stroke="#555" stroke-width=".7"/></g>
<g transform="translate(992 78) scale(1)"><path d="M-7 -1a7 7 0 0 1 12 -4l2.5 -2.5v8h-8l2.5 -2.5a3.6 3.6 0 0 0 -6 1z" fill="#4fd42c" stroke="#1c7a08" stroke-width=".8"/><path d="M7 1a7 7 0 0 1 -12 4l-2.5 2.5v-8h8l-2.5 2.5a3.6 3.6 0 0 0 6 -1z" fill="#4fd42c" stroke="#1c7a08" stroke-width=".8"/></g>
<g transform="translate(1018 78) scale(1)"><g transform="translate(0 -5)"><path d="M-9 1q9 -9 18 0" fill="none" stroke="#23263c" stroke-width="2.1"/><path d="M-8.5 1.5q8.5 -7 17 0q-8.5 5 -17 0z" fill="#dfe5f2" stroke="#3f4360" stroke-width=".7"/><circle cx="0" cy="0.6" r="3.4" fill="#4766b0"/><circle cx="0" cy="0.6" r="1.6" fill="#0c1024"/><circle cx="-1" cy="-.4" r=".7" fill="#dfe8ff"/><path d="M-7 -2.6l-1.2 -1.5M-3.5 -4l-.6 -1.5M0 -4.4v-1.6M3.5 -4l.6 -1.5M7 -2.6l1.2 -1.5" stroke="#3a3f58" stroke-width=".7"/></g><circle cx="0" cy="3.5" r="6" fill="url(#sm)" stroke="#b8801c" stroke-width=".6"/><circle cx="-2" cy="2" r=".8" fill="#333"/><circle cx="2" cy="2" r=".8" fill="#333"/><path d="M-3 5q3 2.5 6 0" fill="none" stroke="#333" stroke-width=".7"/></g>
<g transform="translate(1062 78) scale(1)"><g transform="scale(1)"><path d="M-9 2l8 -4.5l10 4l-8 6z" fill="#eef2fa" stroke="#aaa" stroke-width=".5"/><path d="M-3 2V-7" stroke="#1c6cf0" stroke-width="1.8"/><path d="M-3 -10l-2.6 4h5.2z" fill="#1c6cf0"/><path d="M-3 2l7 -4.5" stroke="#2fc41c" stroke-width="1.8"/><path d="M7 -4.5l-4.6 .4l2.4 3.4z" fill="#2fc41c"/><path d="M-3 2l7 4.5" stroke="#e41c1c" stroke-width="1.8"/><path d="M7 8.5l-4.8 -.2l2.2 -3.4z" fill="#e41c1c"/><circle cx="-3" cy="2" r="1.8" fill="#ddd" stroke="#666" stroke-width=".5"/></g></g>
<g transform="translate(1088 78) scale(1)"><path d="M-3 0l7 -4l6 3l-7 4z" fill="#eef2fa" stroke="#999" stroke-width=".5"/><path d="M1 1v-6" stroke="#1c6cf0" stroke-width="1.2"/><path d="M1 1l5 -3" stroke="#e41c1c" stroke-width="1.2"/><path d="M-9 8l5 -9l-2.5 -1l7 -4l.5 8l-2.5 -1l-3 8z" fill="#3fc41c" stroke="#1c7a08" stroke-width=".6"/><path d="M-1 4h9v5h-9z" fill="#c8c8c8" stroke="#777" stroke-width=".8"/><path d="M1 6h5v3h-5z" fill="#f0f0f0"/></g>
<g transform="translate(1114 78) scale(1)"><path d="M-1 -1l7 -4l5 3l-7 4z" fill="#eef2fa" stroke="#999" stroke-width=".5"/><path d="M4 0v-8" stroke="#1c6cf0" stroke-width="1.2"/><path d="M4 0l4 2" stroke="#e41c1c" stroke-width="1.2"/><path d="M4 0l4 -2.5" stroke="#2fc41c" stroke-width="1.2"/><path d="M-10 1l6 -3v2.5l4 -3v5l-4 -1v2.5z" fill="#3fc41c" stroke="#1c7a08" stroke-width=".5" transform="rotate(-40 -4 2)"/><path d="M-9 6l6 -3v2.5l5 -3v5l-5 -1v2.5z" fill="#3fc41c" stroke="#1c7a08" stroke-width=".5" transform="rotate(140 -3 6)"/></g>
<g transform="translate(1156 78) scale(1)"><rect x="-9" y="-9" width="5.6" height="5.6" fill="#1cd8f0"/><rect x="-3" y="-9" width="5.6" height="5.6" fill="#f4d81c"/><rect x="3" y="-9" width="5.6" height="5.6" fill="#1fd41c"/><rect x="-9" y="-3" width="5.6" height="5.6" fill="#f0861c"/><rect x="-3" y="-3" width="5.6" height="5.6" fill="#b86a1c"/><rect x="3" y="-3" width="5.6" height="5.6" fill="#f01cd8"/><rect x="-9" y="3" width="5.6" height="5.6" fill="#1c2cf0"/><rect x="-3" y="3" width="5.6" height="5.6" fill="#1c9a1c"/><rect x="3" y="3" width="5.6" height="5.6" fill="#9a9a9a"/></g>
<g transform="translate(1182 78) scale(1)"><rect x="-7.5" y="-9" width="15" height="18" fill="#eef4fc" stroke="#6a86b8" stroke-width="1"/><path d="M-5 -6h10" stroke="#f0b01c" stroke-width="1.4"/><path d="M-5 -3h10" stroke="#8ab0e0" stroke-width="1"/><rect x="-5.0" y="-1" width="3" height="2.6" fill="#1cd8f0"/><rect x="-1.6" y="-1" width="3" height="2.6" fill="#f4d81c"/><rect x="1.7999999999999998" y="-1" width="3" height="2.6" fill="#1fd41c"/><rect x="-5.0" y="2" width="3" height="2.6" fill="#f0861c"/><rect x="-1.6" y="2" width="3" height="2.6" fill="#b86a1c"/><rect x="1.7999999999999998" y="2" width="3" height="2.6" fill="#f01cd8"/><rect x="-5.0" y="5" width="3" height="2.6" fill="#1c2cf0"/><rect x="-1.6" y="5" width="3" height="2.6" fill="#1c9a1c"/><rect x="1.7999999999999998" y="5" width="3" height="2.6" fill="#9a9a9a"/></g>
<g transform="translate(1208 78) scale(1)"><circle cx="0" cy="0" r="9.5" fill="#7a9a4c" stroke="#4a6a2c" stroke-width="1"/><g transform="scale(.85)"><path d="M-7 7l9 -9" stroke="#c8c8c8" stroke-width="2.6" stroke-linecap="round"/><path d="M3 -4a3.5 3.5 0 1 1 3 3" fill="none" stroke="#d8d8d8" stroke-width="2.4"/><path d="M7 7l-9 -9" stroke="#4f7fd0" stroke-width="2.4" stroke-linecap="round"/><path d="M-6 -7l3 1l1 3" fill="none" stroke="#eee" stroke-width="1.6"/></g></g>
<g transform="translate(1234 78) scale(1)"><rect x="-9" y="-9" width="18" height="18" fill="#e8eef8" stroke="#556" stroke-width=".8"/><rect x="-9" y="-9" width="18" height="4" fill="#3f6ac8"/><path d="M-6.5 -3v11" stroke="#b86a1c" stroke-width="1.6" stroke-dasharray="1.6 1"/><g transform="translate(2 2) scale(.65)"><path d="M-7 7l9 -9" stroke="#c8c8c8" stroke-width="2.6" stroke-linecap="round"/><path d="M3 -4a3.5 3.5 0 1 1 3 3" fill="none" stroke="#d8d8d8" stroke-width="2.4"/><path d="M7 7l-9 -9" stroke="#4f7fd0" stroke-width="2.4" stroke-linecap="round"/><path d="M-6 -7l3 1l1 3" fill="none" stroke="#eee" stroke-width="1.6"/></g></g>
<g transform="translate(1261 78) scale(1)"><rect x="-8" y="-7" width="15" height="14" fill="none" stroke="#1c3c8a" stroke-width="1.3" stroke-dasharray="1.5 1.5"/><path d="M-4 -2q3 -5 10 -5l2 3q-5 0 -7 5z" fill="#f0c08a" stroke="#8a5a2c" stroke-width=".6"/><circle cx="-5" cy="5" r="2.2" fill="#f4e01c" stroke="#1c3cc8" stroke-width=".8"/></g>
<g transform="translate(1287 78) scale(1)"><path d="M-8 6l5 -13l12 -1l-5 13z" fill="#e85050" stroke="#2c5cd0" stroke-width="1.6"/><path d="M-5.5 -.5l12 -1M-3 -7l-1 13M1.5 -7.5l-1 13M5 -7.7l-1 13M-7 3l12 -1M-4.5 -3.5l12 -1" stroke="#f4f4f4" stroke-width=".7"/></g>
<g transform="translate(17 143) scale(1)"><g transform="translate(1 0) scale(1)"><path d="M-2.5 3.5l-5.5 5.5" stroke="#9a9a9a" stroke-width="3" stroke-linecap="round"/><path d="M-2.5 3.5l-5.5 5.5" stroke="#e2e2e2" stroke-width="1.2" stroke-linecap="round"/><circle cx="1.5" cy="-1" r="5.6" fill="url(#lens)" stroke="#8ea2bf" stroke-width="1.6"/></g><path d="M-9 -3h4M-9 0h3M-9 3h4" stroke="#b8c4d8" stroke-width="1"/></g>
<g transform="translate(43 143) scale(1)"><path d="M-8 -7l5 5M-5 -9l14 14M-4 2l9 8" stroke="#3f7fe0" stroke-width="1.3" stroke-dasharray="4 2"/><g transform="translate(0 0)"><path d="M-7 8l2 -5l10 -11l3 3l-10 11z" fill="#e8a83c" stroke="#7a4a10" stroke-width=".6"/><path d="M-7 8l2 -5l3 3z" fill="#f2d8a8" stroke="#7a4a10" stroke-width=".4"/><path d="M-7 8l1 -2l1 1z" fill="#222"/><path d="M5 -8l3 3l1.5 -1.5l-3 -3z" fill="#d83a3a"/></g><path d="M4 -9h6l-3 3.2z" fill="#000"/></g>
<g transform="translate(17 169) scale(1)"><rect x="-7" y="-5.5" width="14" height="11" fill="url(#pg)" stroke="#445" stroke-width="1"/><rect x="-9.5" y="-8.5" width="4" height="4" fill="#3fc41c"/><path d="M-9.0 -8.0l3 3M-6.0 -8.0l-3 3" stroke="#167a08" stroke-width=".6"/><rect x="5.5" y="-8.5" width="4" height="4" fill="#3fc41c"/><path d="M6.0 -8.0l3 3M9.0 -8.0l-3 3" stroke="#167a08" stroke-width=".6"/><rect x="-9.5" y="4.5" width="4" height="4" fill="#3fc41c"/><path d="M-9.0 5.0l3 3M-6.0 5.0l-3 3" stroke="#167a08" stroke-width=".6"/><rect x="5.5" y="4.5" width="4" height="4" fill="#3fc41c"/><path d="M6.0 5.0l3 3M9.0 5.0l-3 3" stroke="#167a08" stroke-width=".6"/></g>
<g transform="translate(43 169) scale(1)"><path d="M-1 -5a4 4 0 1 0 -4 5q8 1 10 6a4 4 0 1 0 2 -6" fill="none" stroke="#3f7fe0" stroke-width="1.5"/><g transform="translate(0 0)"><path d="M-7 8l2 -5l10 -11l3 3l-10 11z" fill="#e8a83c" stroke="#7a4a10" stroke-width=".6"/><path d="M-7 8l2 -5l3 3z" fill="#f2d8a8" stroke="#7a4a10" stroke-width=".4"/><path d="M-7 8l1 -2l1 1z" fill="#222"/><path d="M5 -8l3 3l1.5 -1.5l-3 -3z" fill="#d83a3a"/></g><path d="M4 -9h6l-3 3.2z" fill="#000"/></g>
<g transform="translate(17 195) scale(1)"><g transform="translate(1 -1) scale(0.95)"><path d="M-2.5 3.5l-5.5 5.5" stroke="#9a9a9a" stroke-width="3" stroke-linecap="round"/><path d="M-2.5 3.5l-5.5 5.5" stroke="#e2e2e2" stroke-width="1.2" stroke-linecap="round"/><circle cx="1.5" cy="-1" r="5.6" fill="url(#lens)" stroke="#8ea2bf" stroke-width="1.6"/></g><g transform="translate(5 5) scale(0.8)"><path d="M-5 -3l5 -2.5l5 2.5v6l-5 2.5l-5 -2.5z" fill="#8a8a86" stroke="#444" stroke-width=".6"/><path d="M-5 -3l5 2.5l5 -2.5l-5 -2.5z" fill="#d8d8d4" stroke="#444" stroke-width=".5"/><path d="M0 -.5v6l5 -2.5v-6z" fill="#5e5e5a"/></g><path d="M-10 -8h4M-8 -10v4M-10 -4.5h4" stroke="#111" stroke-width=".9"/><path d="M0 -4.5l5 2.5l-5 2.5z" fill="#cfd8e8" stroke="#8a9ab8" stroke-width=".5"/><path d="M4 -9h6l-3 3.2z" fill="#000"/></g>
<g transform="translate(43 195) scale(1)"><path d="M-7 -6h14v7h-3v6h-11z" fill="#fdfde8" stroke="#f4ec10" stroke-width="1.6"/><path d="M-3.5 0l3 4.5l5 -9" fill="none" stroke="#3fc41c" stroke-width="2.4"/><path d="M4 -9h6l-3 3.2z" fill="#000"/></g>
<g transform="translate(17 221) scale(1)"><g transform="scale(1)"><path d="M-9 2l8 -4.5l10 4l-8 6z" fill="#eef2fa" stroke="#aaa" stroke-width=".5"/><path d="M-3 2V-7" stroke="#1c6cf0" stroke-width="1.8"/><path d="M-3 -10l-2.6 4h5.2z" fill="#1c6cf0"/><path d="M-3 2l7 -4.5" stroke="#2fc41c" stroke-width="1.8"/><path d="M7 -4.5l-4.6 .4l2.4 3.4z" fill="#2fc41c"/><path d="M-3 2l7 4.5" stroke="#e41c1c" stroke-width="1.8"/><path d="M7 8.5l-4.8 -.2l2.2 -3.4z" fill="#e41c1c"/><circle cx="-3" cy="2" r="1.8" fill="#ddd" stroke="#666" stroke-width=".5"/></g><path d="M4 -9h6l-3 3.2z" fill="#000"/></g>
<g transform="translate(43 221) scale(1)"><path d="M-9 -2q4 -10 8 2t8 4q2 -3 1 -8" fill="none" stroke="#3f7fe0" stroke-width="1.5"/><g transform="translate(0 0)"><path d="M-7 8l2 -5l10 -11l3 3l-10 11z" fill="#e8a83c" stroke="#7a4a10" stroke-width=".6"/><path d="M-7 8l2 -5l3 3z" fill="#f2d8a8" stroke="#7a4a10" stroke-width=".4"/><path d="M-7 8l1 -2l1 1z" fill="#222"/><path d="M5 -8l3 3l1.5 -1.5l-3 -3z" fill="#d83a3a"/></g><path d="M4 -9h6l-3 3.2z" fill="#000"/></g>
<g transform="translate(17 247) scale(1)"><path d="M-8 -6l8 -2l7 2l-8 2z" fill="#7f9af0" stroke="#4a5ac0" stroke-width=".5"/><path d="M-8 -3l8 -2l7 2l-8 2z" fill="#f4f4fa" stroke="#889" stroke-width=".5"/><path d="M-8 0l8 -2l7 2l-8 2z" fill="#9aa8e8" stroke="#667" stroke-width=".5"/><ellipse cx="1" cy="5" rx="7" ry="4.5" fill="#c08a5a" stroke="#6a4020" stroke-width=".6"/><circle cx="-2" cy="6" r="1.7" fill="#1c4cf0"/><circle cx="2" cy="7" r="1.7" fill="#1fc41c"/><circle cx="4.5" cy="4" r="1.7" fill="#e81c1c"/><path d="M2 3l7 -10" stroke="#b05a1c" stroke-width="1.6"/><path d="M4 -9h6l-3 3.2z" fill="#000"/></g>
<g transform="translate(43 247) scale(1)"><path d="M-8 8l5 -14l12 -3l-5 15z" fill="#9fc8f4" stroke="#2c5ce0" stroke-width="1.6"/><path d="M-5.5 1l12 -2.5M-2 -6l-1 13.5M3 -7.5l-1 14" stroke="#eaf4ff" stroke-width="1"/><path d="M4 -9h6l-3 3.2z" fill="#000"/></g>
<g transform="translate(17 273) scale(1)"><path d="M-7 -1a7 7 0 0 1 12 -4l2.5 -2.5v8h-8l2.5 -2.5a3.6 3.6 0 0 0 -6 1z" fill="#7fb0ee" stroke="#3f7fd8" stroke-width=".8"/><path d="M7 1a7 7 0 0 1 -12 4l-2.5 2.5v-8h8l-2.5 2.5a3.6 3.6 0 0 0 6 -1z" fill="#7fb0ee" stroke="#3f7fd8" stroke-width=".8"/><path d="M4 -9h6l-3 3.2z" fill="#000"/></g>
<g transform="translate(43 273) scale(1)"><g transform="translate(0 1) scale(1.5)"><path d="M-5 -3l5 -2.5l5 2.5v6l-5 2.5l-5 -2.5z" fill="#8a8a86" stroke="#444" stroke-width=".6"/><path d="M-5 -3l5 2.5l5 -2.5l-5 -2.5z" fill="#d8d8d4" stroke="#444" stroke-width=".5"/><path d="M0 -.5v6l5 -2.5v-6z" fill="#5e5e5a"/></g><path d="M4 -9h6l-3 3.2z" fill="#000"/></g>
<g transform="translate(17 299) scale(1)"><ellipse cx="0" cy="9" rx="6" ry="1.5" fill="#000" opacity=".2"/><text x="-5.5" y="7" font-size="19" font-weight="bold" font-family="Liberation Sans" fill="#6a9ae8" stroke="#2c5cb8" stroke-width=".7">?</text><path d="M4 -9h6l-3 3.2z" fill="#000"/></g>
<g transform="translate(43 299) scale(1)"><path d="M-8 -5v13M8 -5v13" stroke="#333" stroke-width="1.2"/><path d="M-7 -3h14" stroke="#f4e810" stroke-width="1.8"/><path d="M-8 -3l4 -2.5v5zM8 -3l-4 -2.5v5z" fill="#f4e810" stroke="#8a8010" stroke-width=".4"/><path d="M4 -9h6l-3 3.2z" fill="#000"/></g>
<g transform="translate(17 325) scale(1)"><path d="M-6.5 -5l1.5 13h10l1.5 -13z" fill="#a8d0f0" stroke="#3a6a9a" stroke-width=".8"/><ellipse cx="0" cy="-5" rx="7" ry="2" fill="#cfe4f8" stroke="#3a6a9a" stroke-width=".8"/><path d="M-2 -7l2 -3l2 3z" fill="#f4e01c"/><path d="M-3 -1l5 3l-4 3l4 2" stroke="#e8f4a8" stroke-width="1.2" fill="none"/><path d="M4 -9h6l-3 3.2z" fill="#000"/></g>
<g transform="translate(43 325) scale(1)"><g transform="scale(1 1)"><path d="M-8 -2l7 -6v4q8 0 8 8q0 3 -2 5q1 -7 -6 -7v4z" fill="#d0d0d0" stroke="#9a9a9a" stroke-width=".8"/></g><path d="M4 -9h6l-3 3.2z" fill="#000"/></g>
<g transform="translate(17 351) scale(1)"><rect x="-10" y="-9" width="4" height="12" fill="#667" stroke="#222" stroke-width=".5"/><circle cx="1" cy="1" r="6.5" fill="none" stroke="#9a4a1c" stroke-width="1.3"/><path d="M1 -8v18M-8 1h18M-5 -5l12 12M7 -5l-12 12" stroke="#9a4a1c" stroke-width="1"/><circle cx="1" cy="1" r="2" fill="#f4b01c"/><path d="M-9 7l8 3l8 -3l-4 5l-8 1z" fill="#f0861c"/><path d="M4 -9h6l-3 3.2z" fill="#000"/></g>
<g transform="translate(43 351) scale(1)"><path d="M-5 0h9l4 3v7h-13z" fill="#f4f6fc" stroke="#111" stroke-width="1"/><g transform="translate(-1 -1) scale(0.95)"><path d="M-8 -4h5l1.5 1.5h8v9h-14.5z" fill="#e6b84a" stroke="#a8801c" stroke-width=".6"/><path d="M-8 7l3 -7h14l-3 7z" fill="url(#fo)" stroke="#a8801c" stroke-width=".6"/></g><path d="M-2 -7h7v4h-7z" fill="#2fb41c"/></g>
<g transform="translate(76 125) scale(1)"><path d="M-8 -6h16M-8 0h16M-8 6h16" stroke="#4a6092" stroke-width="3.2"/></g>
<g transform="translate(104 125) scale(1)"><rect x="-5.5" y="-5" width="11" height="10" fill="url(#pg)" stroke="#667" stroke-width=".6"/><rect x="-9.5" y="-9" width="4" height="4" fill="#3fc41c"/><path d="M-9.0 -8.5l3 3M-6.0 -8.5l-3 3" stroke="#167a08" stroke-width=".6"/><rect x="5.5" y="-9" width="4" height="4" fill="#3fc41c"/><path d="M6.0 -8.5l3 3M9.0 -8.5l-3 3" stroke="#167a08" stroke-width=".6"/><rect x="-9.5" y="5" width="4" height="4" fill="#3fc41c"/><path d="M-9.0 5.5l3 3M-6.0 5.5l-3 3" stroke="#167a08" stroke-width=".6"/><rect x="5.5" y="5" width="4" height="4" fill="#3fc41c"/><path d="M6.0 5.5l3 3M9.0 5.5l-3 3" stroke="#167a08" stroke-width=".6"/></g>
<g transform="translate(132 125) scale(1)"><g transform="translate(1 0) scale(1)"><path d="M-2.5 3.5l-5.5 5.5" stroke="#9a9a9a" stroke-width="3" stroke-linecap="round"/><path d="M-2.5 3.5l-5.5 5.5" stroke="#e2e2e2" stroke-width="1.2" stroke-linecap="round"/><circle cx="1.5" cy="-1" r="5.6" fill="url(#lens)" stroke="#8ea2bf" stroke-width="1.6"/></g><path d="M-9 -3h4M-9 0h3M-9 3h4" stroke="#b8c4d8" stroke-width="1"/></g>
<g transform="translate(160 125) scale(1)"><g transform="scale(1.0)"><path d="M-9 2l8 -4.5l10 4l-8 6z" fill="#eef2fa" stroke="#aaa" stroke-width=".5"/><path d="M-3 2V-7" stroke="#1c6cf0" stroke-width="1.8"/><path d="M-3 -10l-2.6 4h5.2z" fill="#1c6cf0"/><path d="M-3 2l7 -4.5" stroke="#2fc41c" stroke-width="1.8"/><path d="M7 -4.5l-4.6 .4l2.4 3.4z" fill="#2fc41c"/><path d="M-3 2l7 4.5" stroke="#e41c1c" stroke-width="1.8"/><path d="M7 8.5l-4.8 -.2l2.2 -3.4z" fill="#e41c1c"/><circle cx="-3" cy="2" r="1.8" fill="#ddd" stroke="#666" stroke-width=".5"/></g></g>
<g transform="translate(188 125) scale(1)"><path d="M-9 -5l9 -4l9 4l-9 3.8z" fill="#2fd41c" stroke="#0c6a08" stroke-width=".4"/><path d="M-9 -5l9 -4l9 4v10l-9 4.4l-9 -4.4z" fill="none" stroke="#000" stroke-width="1.15"/><path d="M-9 -5l9 3.8l9 -3.8M0 -1.2v10.6" fill="none" stroke="#000" stroke-width="1.15"/><path d="M-9 5l9 -3.8l9 3.8M0 -9v10.2" fill="none" stroke="#000" stroke-width=".8"/></g>
<g transform="translate(216 125) scale(1)"><path d="M-9 5l9 -3.8l9 3.8l-9 4.4z" fill="#2fd41c" stroke="#0c6a08" stroke-width=".4"/><path d="M-9 -5l9 -4l9 4v10l-9 4.4l-9 -4.4z" fill="none" stroke="#000" stroke-width="1.15"/><path d="M-9 -5l9 3.8l9 -3.8M0 -1.2v10.6" fill="none" stroke="#000" stroke-width="1.15"/><path d="M-9 5l9 -3.8l9 3.8M0 -9v10.2" fill="none" stroke="#000" stroke-width=".8"/></g>
<g transform="translate(244 125) scale(1)"><path d="M-9 -5l9 3.8v10.6l-9 -4.4z" fill="#2fd41c" stroke="#0c6a08" stroke-width=".4"/><path d="M-9 -5l9 -4l9 4v10l-9 4.4l-9 -4.4z" fill="none" stroke="#000" stroke-width="1.15"/><path d="M-9 -5l9 3.8l9 -3.8M0 -1.2v10.6" fill="none" stroke="#000" stroke-width="1.15"/><path d="M-9 5l9 -3.8l9 3.8M0 -9v10.2" fill="none" stroke="#000" stroke-width=".8"/></g>
<g transform="translate(272 125) scale(1)"><path d="M0 -1.2l9 -3.8v10l-9 4.4z" fill="#2fd41c" stroke="#0c6a08" stroke-width=".4"/><path d="M-9 -5l9 -4l9 4v10l-9 4.4l-9 -4.4z" fill="none" stroke="#000" stroke-width="1.15"/><path d="M-9 -5l9 3.8l9 -3.8M0 -1.2v10.6" fill="none" stroke="#000" stroke-width="1.15"/><path d="M-9 5l9 -3.8l9 3.8M0 -9v10.2" fill="none" stroke="#000" stroke-width=".8"/></g>
<g transform="translate(300 125) scale(1)"><path d="M-9 -5l9 -4v10.2l-9 3.8z" fill="#2fd41c" stroke="#0c6a08" stroke-width=".4"/><path d="M-9 -5l9 -4l9 4v10l-9 4.4l-9 -4.4z" fill="none" stroke="#000" stroke-width="1.15"/><path d="M-9 -5l9 3.8l9 -3.8M0 -1.2v10.6" fill="none" stroke="#000" stroke-width="1.15"/><path d="M-9 5l9 -3.8l9 3.8M0 -9v10.2" fill="none" stroke="#000" stroke-width=".8"/></g>
<g transform="translate(328 125) scale(1)"><path d="M0 -9l9 4v10l-9 -3.8z" fill="#2fd41c" stroke="#0c6a08" stroke-width=".4"/><path d="M-9 -5l9 -4l9 4v10l-9 4.4l-9 -4.4z" fill="none" stroke="#000" stroke-width="1.15"/><path d="M-9 -5l9 3.8l9 -3.8M0 -1.2v10.6" fill="none" stroke="#000" stroke-width="1.15"/><path d="M-9 5l9 -3.8l9 3.8M0 -9v10.2" fill="none" stroke="#000" stroke-width=".8"/></g>
<g transform="translate(356 125) scale(1)"><path d="M-8 -4.5l8 -4.5l8 4.5v9l-8 4.5l-8 -4.5z" fill="#2fd41c" stroke="#0c6a08" stroke-width="1"/><path d="M-8 -4.5l8 4.5l8 -4.5l-8 -4.5z" fill="#5ff04a"/><path d="M0 0v9l8 -4.5v-9z" fill="#1ca810"/></g>
<g transform="translate(76 153) scale(1)"><path d="M-5.5 -6.5v13a5.5 2.3 0 0 0 11 0v-13" fill="none" stroke="#222" stroke-width="1.1"/><ellipse cx="0" cy="-6.5" rx="5.5" ry="2.3" fill="none" stroke="#222" stroke-width="1.1"/><path d="M-5.5 6.5a5.5 2.3 0 0 1 11 0" fill="none" stroke="#222" stroke-width="0.77"/></g>
<g transform="translate(76 181) scale(1)"><path d="M-5.5 -6.5v13a5.5 2.3 0 0 0 11 0v-13" fill="none" stroke="#222" stroke-width="1.1"/><ellipse cx="0" cy="-6.5" rx="5.5" ry="2.3" fill="none" stroke="#222" stroke-width="1.1"/><path d="M-5.5 6.5a5.5 2.3 0 0 1 11 0" fill="none" stroke="#222" stroke-width="0.77"/></g>
<g transform="translate(76 209) scale(1)"><ellipse cx="3" cy="8.5" rx="7" ry="1.6" fill="#000" opacity=".25"/><path d="M-5.5 -6.5v13a5.5 2.3 0 0 0 11 0v-13z" fill="url(#cb)" stroke="#16306e" stroke-width="0.8"/><ellipse cx="0" cy="-6.5" rx="5.5" ry="2.3" fill="#6f9be6" stroke="#16306e" stroke-width="0.8"/></g>
<g transform="translate(76 237) scale(1)"><ellipse cx="3" cy="8.5" rx="7" ry="1.6" fill="#000" opacity=".25"/><path d="M-5.5 -6.5v13a5.5 2.3 0 0 0 11 0v-13z" fill="url(#cp)" stroke="#7a86a8" stroke-width="0.9"/><ellipse cx="0" cy="-6.5" rx="5.5" ry="2.3" fill="#e8eefa" stroke="#7a86a8" stroke-width="0.9"/></g>
<g transform="translate(76 265) scale(1)"><path d="M-5.5 -6.5v13a5.5 2.3 0 0 0 11 0v-13" fill="none" stroke="#222" stroke-width="0.9"/><ellipse cx="0" cy="-6.5" rx="5.5" ry="2.3" fill="none" stroke="#222" stroke-width="0.9"/><path d="M-5.5 6.5a5.5 2.3 0 0 1 11 0" fill="none" stroke="#222" stroke-width="0.63"/><path d="M-3 -5l2 11M0 -4l-2 10M2 -5l1 11M-4 2l8 -4M-4 -2l8 5" stroke="#222" stroke-width=".6" fill="none"/></g>
<g transform="translate(1190 1030.5) scale(1)"><rect x="-8" y="-7.5" width="16" height="15" fill="#c8c8c8" stroke="#d83a3a" stroke-width="1.2"/><g transform="scale(.72)"><path d="M-7 -1a7 7 0 0 1 12 -4l2.5 -2.5v8h-8l2.5 -2.5a3.6 3.6 0 0 0 -6 1z" fill="#e88a9a" stroke="#c82c3c" stroke-width=".8"/><path d="M7 1a7 7 0 0 1 -12 4l-2.5 2.5v-8h8l-2.5 2.5a3.6 3.6 0 0 0 6 -1z" fill="#e88a9a" stroke="#c82c3c" stroke-width=".8"/></g></g>
<g transform="translate(1221 1030.5) scale(1)"><rect x="-9" y="-8" width="18" height="16" fill="#f8d878" stroke="#d8a83c" stroke-width=".8"/><path d="M-3 -6l2 4l4 -2l-2 4l4 2l-4 1l0 4l-3 -3l-4 2l2 -4l-3 -3l4 0z" fill="#c86ad8" stroke="#7a2c8a" stroke-width=".5"/><path d="M1 1l6 6" stroke="#eee" stroke-width="2"/></g>
<g transform="translate(1252 1030.5) scale(1)"><path d="M-7 7v-8l5 -4l5 4v8z" fill="#8ab0e8" stroke="#2c4c9a" stroke-width=".8"/><path d="M-2 -6q4 -3 9 -1l-1 3q-4 -1 -6 2z" fill="#f0c08a" stroke="#8a5a2c" stroke-width=".6"/><rect x="-4" y="1" width="3" height="3" fill="#fff"/></g>
<g transform="translate(1283 1030.5) scale(1)"><ellipse cx="0" cy="8" rx="5" ry="1.2" fill="#000" opacity=".2"/><text x="-4.5" y="6" font-size="16" font-weight="bold" font-family="Liberation Sans" fill="#5a8ae0" stroke="#2c5cb8" stroke-width=".6">?</text></g>
<g transform="translate(1314 1030.5) scale(1)"><g transform="translate(3 -3) scale(0.7)"><path d="M-5 -3l5 -2.5l5 2.5v6l-5 2.5l-5 -2.5z" fill="#4f7fd0" stroke="#444" stroke-width=".6"/><path d="M-5 -3l5 2.5l5 -2.5l-5 -2.5z" fill="#9fc0f0" stroke="#444" stroke-width=".5"/><path d="M0 -.5v6l5 -2.5v-6z" fill="#2c4c9a"/></g><g transform="translate(5 4) scale(0.7)"><path d="M-5 -3l5 -2.5l5 2.5v6l-5 2.5l-5 -2.5z" fill="#4f9ab0" stroke="#444" stroke-width=".6"/><path d="M-5 -3l5 2.5l5 -2.5l-5 -2.5z" fill="#9fd8e8" stroke="#444" stroke-width=".5"/><path d="M0 -.5v6l5 -2.5v-6z" fill="#2c6a7a"/></g><path d="M-9 -2l7 3M-9 6l7 -3M-9 2h7" stroke="#e81c1c" stroke-width="1.4"/></g>
<g transform="translate(1345 1030.5) scale(1)"><rect x="-9" y="-8" width="18" height="16" fill="#f8d878" stroke="#d8a83c" stroke-width=".8"/><path d="M-6 -3l6 -3l6 3v6l-6 3l-6 -3z" fill="#5a8ae0" stroke="#1c2c6a" stroke-width=".7"/><path d="M-6 -3l6 3l6 -3l-6 -3z" fill="#f01cd8" stroke="#1c2c6a" stroke-width=".5"/><path d="M0 0v6l6 -3v-6z" fill="#8ad8e8" stroke="#1c2c6a" stroke-width=".5"/></g>
<g transform="translate(1376 1030.5) scale(1)"><rect x="-4.5" y="-8" width="9" height="16" fill="#f4f0e0" stroke="#555" stroke-width=".8"/><path d="M-4.5 -4h9M-4.5 0h9M-4.5 4h9" stroke="#555" stroke-width=".8"/><rect x="-3.5" y="0.5" width="7" height="3" fill="#e8a83c"/></g>
<g transform="translate(1407 1030.5) scale(1)"><path d="M-1 -7a7 7 0 1 0 7 5" fill="none" stroke="#1c8a1c" stroke-width="2"/><path d="M-2 -10l5 3l-5 3z" fill="#1c8a1c"/><circle cx="0" cy="0" r="1.5" fill="#1c3c9a"/></g>
<g transform="translate(1438 1030.5) scale(1)"><rect x="-7.500" y="-7.5" width="15" height="15" fill="#eef0f8" stroke="#333" stroke-width="1.2"/><path d="M0 -7.5v15M-7.5 0h15" stroke="#333" stroke-width="1.2"/></g>
<g transform="translate(1900 1010) scale(1)"><circle cx="0" cy="0" r="7" fill="#1c3cb8" stroke="#0c1c5a" stroke-width=".6"/><path d="M-5 -3q3 -3 5 -1t3 -2q3 2 2 5q-3 0 -3 3t-3 3q-1 -4 -3 -4t-1 -4z" fill="#3fc41c"/><circle cx="-2.5" cy="-3" r="2" fill="#fff" opacity=".35"/></g>
</svg>
</body></html>
